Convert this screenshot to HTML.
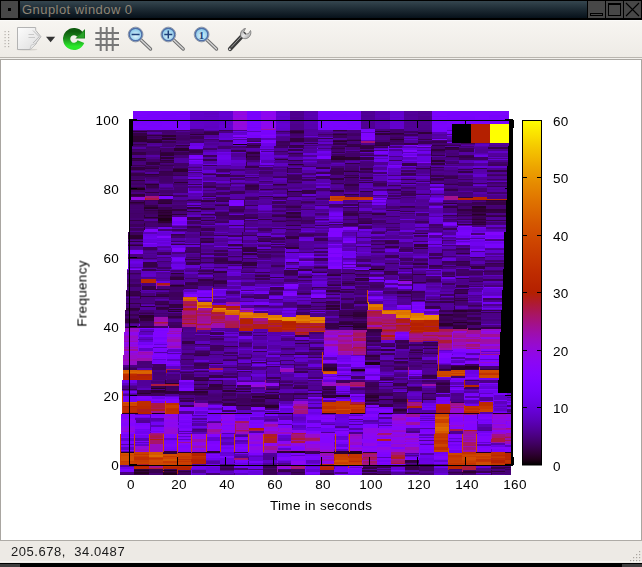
<!DOCTYPE html>
<html><head><meta charset="utf-8">
<style>
html,body{margin:0;padding:0;width:642px;height:567px;overflow:hidden;background:#000;}
*{box-sizing:border-box;}
.abs{position:absolute;}
#title{left:0;top:0;width:642px;height:20px;background:#000;}
#tgrad{left:20px;top:1px;width:567px;height:17px;background:linear-gradient(#35464f,#1f2d36 45%,#07111a);}
#ttext{left:22px;top:2px;height:17px;line-height:17px;font:13px "Liberation Sans",sans-serif;color:#8e8576;letter-spacing:0.45px;}
.wbtn{top:1px;width:17px;height:17px;background:#474747;}
#toolbar{left:0;top:20px;width:642px;height:37px;background:linear-gradient(#f7f5f1,#eeebe6);border-top:1px solid #fbfaf8;}
#canvas{left:0;top:60px;width:642px;height:481px;background:#fff;}
#status{left:0;top:541px;width:642px;height:22px;background:#edeae5;}
#stext{left:10.5px;top:543.5px;font:13px "Liberation Sans",sans-serif;color:#1a1a1a;letter-spacing:0.55px;line-height:16px;white-space:pre;will-change:transform;}
.lbl{font:13.5px "Liberation Sans",sans-serif;color:#000;letter-spacing:0.3px;white-space:pre;line-height:15px;will-change:transform;}
</style></head><body>
<div id="title" class="abs"></div>
<div class="abs wbtn" style="left:1px"><div class="abs" style="left:7px;top:7px;width:3px;height:3px;background:#000"></div></div>
<div id="tgrad" class="abs"></div>
<div id="ttext" class="abs">Gnuplot window 0</div>
<div class="abs wbtn" style="left:588px"></div>
<div class="abs wbtn" style="left:606px"></div>
<div class="abs wbtn" style="left:624px"></div>
<svg class="abs" style="left:0;top:0" width="642" height="20">
 <rect x="590.5" y="13.5" width="12" height="2" fill="none" stroke="#000" stroke-width="1"/>
 <rect x="608.5" y="3.5" width="12" height="12" fill="none" stroke="#000" stroke-width="1"/>
 <rect x="608" y="3" width="13" height="2" fill="#000"/>
 <path d="M626 3L639 16M639 3L626 16" stroke="#000" stroke-width="1.1"/>
</svg>
<div id="toolbar" class="abs"></div>
<svg class="abs" style="left:0;top:20px" width="642" height="40">
 <g fill="#b5b1ab">
  <rect x="4.5" y="11" width="1.2" height="1.2"/><rect x="8" y="11" width="1.2" height="1.2"/>
  <rect x="4.5" y="14" width="1.2" height="1.2"/><rect x="8" y="14" width="1.2" height="1.2"/>
  <rect x="4.5" y="17" width="1.2" height="1.2"/><rect x="8" y="17" width="1.2" height="1.2"/>
  <rect x="4.5" y="20" width="1.2" height="1.2"/><rect x="8" y="20" width="1.2" height="1.2"/>
  <rect x="4.5" y="23" width="1.2" height="1.2"/><rect x="8" y="23" width="1.2" height="1.2"/>
  <rect x="4.5" y="26" width="1.2" height="1.2"/><rect x="8" y="26" width="1.2" height="1.2"/>
 </g>
 <defs>
  <linearGradient id="doc" x1="0" y1="0" x2="1" y2="1"><stop offset="0" stop-color="#fdfdfd"/><stop offset="1" stop-color="#dcdcdc"/></linearGradient>
  <radialGradient id="grn" cx="0.5" cy="0.85" r="0.8"><stop offset="0" stop-color="#3cf03c"/><stop offset="0.6" stop-color="#1c9a1c"/><stop offset="1" stop-color="#0d5a0d"/></radialGradient>
  <radialGradient id="lens" cx="0.5" cy="0.6" r="0.6"><stop offset="0" stop-color="#dff4fb"/><stop offset="1" stop-color="#7fc3e6"/></radialGradient>
  <linearGradient id="hdl" x1="0" y1="0" x2="1" y2="1"><stop offset="0" stop-color="#8a8a8a"/><stop offset="0.5" stop-color="#e8e8e8"/><stop offset="1" stop-color="#8f8f8f"/></linearGradient>
 </defs>
 <!-- document icon -->
 <ellipse cx="27" cy="29.6" rx="10.5" ry="1" fill="#cfccc6" opacity="0.8"/>
 <path d="M17.5 7.5h18.2v2.8l5.2 6.4l-4.6 6.2v0.8l-6.3 5.8h-12.5z" fill="url(#doc)" stroke="#b3b3b3" stroke-width="1"/>
 <path d="M30 29l1.2-3.8l5.2-2" fill="#eee" stroke="#c0c0c0" stroke-width="0.8"/>
 <path d="M28.5 14.5h5.5M28.5 17.5h6.5" stroke="#c9c9c9" stroke-width="1"/>
 <path d="M33 10.5l6.2 6.2l-6.2 6.3" fill="none" stroke="#bdbdbd" stroke-width="1"/>
 <path d="M46 16.8h9.2l-4.6 5.4z" fill="#333"/>
 <!-- refresh -->
 <defs>
  <linearGradient id="grn2" x1="0" y1="0" x2="0" y2="1"><stop offset="0" stop-color="#0f5c0f"/><stop offset="0.45" stop-color="#1d8a1d"/><stop offset="1" stop-color="#2ae82a"/></linearGradient>
 </defs>
 <path d="M80.1 14.7A7.4 7.4 0 1 0 80.9 21.7" fill="none" stroke="url(#grn2)" stroke-width="7.2"/>
 <path d="M75.4 18.5L85 8.9V18.5z" fill="#1b7d1b"/>
 <path d="M77.4 17.7L84.2 10.9V17.7z" fill="#28a428"/>
 <!-- grid -->
 <g stroke="#777" stroke-width="2">
  <path d="M100.7 7v24M106.7 7v24M112.7 7v24M95.3 12.9h23.7M95.3 18.9h23.7M95.3 24.9h23.7"/>
 </g>
 <!-- magnifiers -->
 <g>
  <path d="M140.5 19.5l10 9.5" stroke="#6f6f6f" stroke-width="3.4" stroke-linecap="round"/>
  <path d="M140.5 19.5l10 9.5" stroke="#d6d6d6" stroke-width="1.4" stroke-linecap="round"/>
  <circle cx="135.6" cy="14.5" r="7.4" fill="none" stroke="#9aa0a8" stroke-width="1"/>
  <circle cx="135.6" cy="14.5" r="6.3" fill="url(#lens)" stroke="#4f6fa8" stroke-width="1.5"/>
  <path d="M131.6 14.5h8" stroke="#1d3f7a" stroke-width="1.5"/>
 </g>
 <g>
  <path d="M173.2 19.5l10 9.5" stroke="#6f6f6f" stroke-width="3.4" stroke-linecap="round"/>
  <path d="M173.2 19.5l10 9.5" stroke="#d6d6d6" stroke-width="1.4" stroke-linecap="round"/>
  <circle cx="168.3" cy="14.5" r="7.4" fill="none" stroke="#9aa0a8" stroke-width="1"/>
  <circle cx="168.3" cy="14.5" r="6.3" fill="url(#lens)" stroke="#4f6fa8" stroke-width="1.5"/>
  <path d="M164.3 14.5h8M168.3 10.5v8" stroke="#1d3f7a" stroke-width="1.5"/>
 </g>
 <g>
  <path d="M206.5 19.5l10 9.5" stroke="#6f6f6f" stroke-width="3.4" stroke-linecap="round"/>
  <path d="M206.5 19.5l10 9.5" stroke="#d6d6d6" stroke-width="1.4" stroke-linecap="round"/>
  <circle cx="201.6" cy="14.5" r="7.4" fill="none" stroke="#9aa0a8" stroke-width="1"/>
  <circle cx="201.6" cy="14.5" r="6.3" fill="url(#lens)" stroke="#4f6fa8" stroke-width="1.5"/>
  <text x="201.6" y="18.6" text-anchor="middle" font-family="Liberation Serif" font-size="11" font-weight="bold" fill="#1d3f7a">1</text>
 </g>
 <!-- wrench -->
 <path d="M230 29l14-15" stroke="#3a3a3a" stroke-width="4.2" stroke-linecap="round"/>
 <path d="M231 27.5l12-13" stroke="#9a9a9a" stroke-width="1" />
 <circle cx="229.8" cy="29.2" r="1" fill="#ddd"/>
 <path d="M241 16.5c-1.5-3 0.5-7 4-8l0.5 0l-2 3.5l1.5 2.2l3.5-0.5l2-3.2c1.2 3-0.5 7-4 8c-1.5 0.4-3 0-4-0.5z" fill="url(#hdl)" stroke="#666" stroke-width="0.7"/>
 <!-- toolbar bottom lines -->
 <rect x="0" y="37" width="642" height="1" fill="#b9b5af"/>
 <rect x="0" y="38" width="642" height="1" fill="#f2f0ec"/>
 <rect x="0" y="39" width="642" height="1" fill="#aaa7a2"/>
</svg>
<div id="canvas" class="abs"></div>
<svg class="abs" style="left:0;top:0" width="642" height="567">
 <rect x="0" y="60" width="1" height="481" fill="#a9a6a1"/>
 <rect x="641" y="60" width="1" height="481" fill="#a9a6a1"/>
 <rect x="0" y="540" width="642" height="1" fill="#aeaba6"/>
</svg>
<svg class="abs" style="left:0;top:0" width="642" height="567" shape-rendering="crispEdges">
<path fill="#7b03fd" d="M133 111h14.25v1h-14.25zM133 126h14.25v2h-14.25zM161.5 111h14.25v2h-14.25zM161.5 124h14.25v2h-14.25zM175.75 129h14.25v1h-14.25zM247 111h14.25v1h-14.25zM247 118h14.25v2h-14.25zM247 126h14.25v1h-14.25zM247 132h14.25v3h-14.25zM261.25 136h14.25v2h-14.25zM332.5 119h14.25v1h-14.25zM346.75 111h14.25v2h-14.25zM346.75 129h14.25v1h-14.25zM432.25 113h14.25v3h-14.25zM432.25 117h14.25v1h-14.25zM432.25 125h14.25v3h-14.25zM446.5 121h14.25v3h-14.25zM446.5 124h14.25v2h-14.25zM475 117h14.25v2h-14.25zM489.25 112h19.75v2h-19.75zM489.25 114h19.75v1h-19.75zM388.2 165h14.25v1h-14.25zM159.1 196h14.25v2h-14.25zM371.95 201h14.25v1h-14.25zM322.5 355h14.25v2h-14.25zM322.5 378h14.25v1h-14.25zM365.25 372h14.25v2h-14.25zM207.8 410h14.25v1h-14.25zM149.5 415h14.25v1h-14.25zM249.25 422h14.25v2h-14.25zM477.25 414h14.25v3h-14.25zM120 441h14.25v3h-14.25zM219.75 446h14.25v1h-14.25zM234 444h14.25v3h-14.25zM419.25 436h14.25v1h-14.25zM447.75 434h14.25v1h-14.25zM447.75 442h14.25v1h-14.25z"/>
<path fill="#7a03fc" d="M133 112h14.25v2h-14.25zM161.5 123h14.25v1h-14.25zM161.5 126h14.25v3h-14.25zM247 112h14.25v1h-14.25zM247 120h14.25v1h-14.25zM261.25 134h14.25v1h-14.25zM432.25 118h14.25v3h-14.25zM432.25 124h14.25v1h-14.25zM460.75 123h14.25v2h-14.25zM475 112h14.25v2h-14.25zM489.25 142h19.75v1h-19.75zM151.5 357h14.25v1h-14.25zM165.75 361h14.25v2h-14.25zM465 355h14.25v1h-14.25z"/>
<path fill="#7a03fd" d="M133 114h14.25v1h-14.25zM133 116h14.25v1h-14.25zM147.25 112h14.25v1h-14.25zM147.25 127h14.25v2h-14.25zM147.25 129h14.25v1h-14.25zM175.75 111h14.25v1h-14.25zM175.75 115h14.25v1h-14.25zM175.75 128h14.25v1h-14.25zM232.75 143h14.25v1h-14.25zM247 122h14.25v3h-14.25zM247 128h14.25v3h-14.25zM318.25 121h14.25v1h-14.25zM332.5 111h14.25v3h-14.25zM346.75 113h14.25v1h-14.25zM346.75 119h14.25v1h-14.25zM432.25 111h14.25v2h-14.25zM432.25 128h14.25v1h-14.25zM432.25 129h14.25v2h-14.25zM446.5 111h14.25v2h-14.25zM446.5 126h14.25v1h-14.25zM460.75 114h14.25v2h-14.25zM460.75 121h14.25v1h-14.25zM475 114h14.25v3h-14.25zM475 123h14.25v1h-14.25zM475 127h14.25v1h-14.25zM489.25 126h19.75v2h-19.75zM489.25 128h19.75v1h-19.75zM489.25 129h19.75v2h-19.75zM188.7 155h14.25v2h-14.25zM229.45 200h14.25v3h-14.25zM229.45 205h14.25v1h-14.25zM285.15 259h14.25v3h-14.25zM283.95 286h14.25v2h-14.25zM165.75 355h14.25v2h-14.25zM450.75 359h14.25v1h-14.25zM350.3 395h14.25v1h-14.25zM492.8 393h14.25v2h-14.25zM507.05 401h3.95v1h-3.95zM263.5 414h14.25v2h-14.25zM306.25 416h14.25v1h-14.25zM320.5 418h14.25v1h-14.25zM420.25 425h14.25v1h-14.25zM477.25 423h14.25v1h-14.25zM120 450h14.25v1h-14.25zM205.5 457h14.25v1h-14.25zM234 437h14.25v2h-14.25zM234 460h14.25v2h-14.25zM248.25 461h14.25v2h-14.25zM348 469h14.25v3h-14.25zM419.25 449h14.25v1h-14.25zM433.5 462h14.25v1h-14.25z"/>
<path fill="#7803fb" d="M133 115h14.25v1h-14.25zM147.25 115h14.25v2h-14.25zM147.25 117h14.25v1h-14.25zM147.25 125h14.25v1h-14.25zM161.5 114h14.25v1h-14.25zM161.5 116h14.25v2h-14.25zM175.75 116h14.25v3h-14.25zM175.75 119h14.25v3h-14.25zM175.75 122h14.25v1h-14.25zM175.75 123h14.25v2h-14.25zM247 121h14.25v1h-14.25zM318.25 113h14.25v2h-14.25zM318.25 115h14.25v1h-14.25zM318.25 118h14.25v1h-14.25zM318.25 119h14.25v2h-14.25zM318.25 127h14.25v2h-14.25zM332.5 117h14.25v1h-14.25zM332.5 120h14.25v3h-14.25zM332.5 128h14.25v2h-14.25zM346.75 114h14.25v1h-14.25zM346.75 115h14.25v1h-14.25zM346.75 125h14.25v2h-14.25zM361 129h14.25v2h-14.25zM432.25 121h14.25v1h-14.25zM432.25 122h14.25v2h-14.25zM446.5 113h14.25v1h-14.25zM446.5 115h14.25v1h-14.25zM446.5 118h14.25v1h-14.25zM446.5 119h14.25v2h-14.25zM446.5 135h14.25v1h-14.25zM460.75 116h14.25v1h-14.25zM460.75 120h14.25v1h-14.25zM460.75 125h14.25v1h-14.25zM475 111h14.25v1h-14.25zM475 124h14.25v3h-14.25zM475 128h14.25v1h-14.25zM475 129h14.25v2h-14.25zM489.25 118h19.75v1h-19.75zM373.95 151h14.25v3h-14.25zM171.15 251h14.25v1h-14.25zM171.15 258h14.25v3h-14.25zM484.65 241h19.75v1h-19.75zM484.65 245h19.75v2h-19.75zM483.45 287h19.75v1h-19.75zM197.25 295h14.25v2h-14.25zM197.25 298h14.25v2h-14.25zM311.25 294h14.25v1h-14.25zM152.5 337h14.25v2h-14.25zM152.5 353h14.25v1h-14.25zM394.75 336h14.25v2h-14.25zM435.8 397h14.25v1h-14.25zM507.05 403h3.95v2h-3.95zM178 420h14.25v2h-14.25zM192.25 414h14.25v1h-14.25zM235 420h14.25v1h-14.25zM363.25 417h14.25v3h-14.25zM420.25 423h14.25v2h-14.25zM120 470h14.25v2h-14.25zM333.75 442h14.25v2h-14.25zM376.5 463h14.25v2h-14.25zM476.25 435h14.25v1h-14.25z"/>
<path fill="#7703fa" d="M133 117h14.25v1h-14.25zM133 120h14.25v1h-14.25zM133 121h14.25v2h-14.25zM147.25 120h14.25v3h-14.25zM161.5 113h14.25v1h-14.25zM161.5 115h14.25v1h-14.25zM161.5 118h14.25v1h-14.25zM175.75 114h14.25v1h-14.25zM247 127h14.25v1h-14.25zM261.25 133h14.25v1h-14.25zM318.25 116h14.25v2h-14.25zM332.5 114h14.25v2h-14.25zM332.5 116h14.25v1h-14.25zM332.5 126h14.25v1h-14.25zM346.75 122h14.25v3h-14.25zM346.75 127h14.25v2h-14.25zM432.25 116h14.25v1h-14.25zM446.5 127h14.25v3h-14.25zM460.75 117h14.25v1h-14.25zM460.75 118h14.25v2h-14.25zM460.75 122h14.25v1h-14.25zM460.75 138h14.25v2h-14.25zM475 120h14.25v1h-14.25zM475 121h14.25v2h-14.25zM489.25 115h19.75v3h-19.75zM489.25 122h19.75v3h-19.75zM489.25 125h19.75v1h-19.75zM188.7 158h14.25v1h-14.25zM327.9 264h14.25v2h-14.25zM470.4 239h14.25v1h-14.25zM397.95 286h14.25v3h-14.25zM282.75 292h14.25v1h-14.25zM394.75 332h14.25v2h-14.25zM165.75 357h14.25v2h-14.25zM122.3 399h14.25v2h-14.25zM165.05 397h14.25v1h-14.25zM165.05 398h14.25v1h-14.25zM193.55 407h14.25v2h-14.25zM193.55 409h14.25v1h-14.25zM478.55 396h14.25v1h-14.25zM349 422h14.25v2h-14.25zM205.5 455h14.25v2h-14.25zM234 462h14.25v1h-14.25zM305.25 464h14.25v1h-14.25zM433.5 463h14.25v1h-14.25zM447.75 439h14.25v2h-14.25z"/>
<path fill="#7903fc" d="M133 118h14.25v2h-14.25zM133 125h14.25v1h-14.25zM133 128h14.25v2h-14.25zM147.25 111h14.25v1h-14.25zM147.25 113h14.25v1h-14.25zM147.25 118h14.25v2h-14.25zM147.25 123h14.25v2h-14.25zM147.25 126h14.25v1h-14.25zM161.5 119h14.25v2h-14.25zM161.5 121h14.25v2h-14.25zM161.5 129h14.25v1h-14.25zM175.75 112h14.25v2h-14.25zM175.75 125h14.25v3h-14.25zM247 113h14.25v3h-14.25zM247 116h14.25v2h-14.25zM247 125h14.25v1h-14.25zM261.25 130h14.25v3h-14.25zM318.25 111h14.25v2h-14.25zM318.25 124h14.25v3h-14.25zM318.25 129h14.25v1h-14.25zM332.5 118h14.25v1h-14.25zM332.5 123h14.25v3h-14.25zM332.5 127h14.25v1h-14.25zM346.75 117h14.25v2h-14.25zM346.75 120h14.25v2h-14.25zM432.25 131h14.25v1h-14.25zM446.5 114h14.25v1h-14.25zM446.5 116h14.25v1h-14.25zM446.5 117h14.25v1h-14.25zM446.5 133h14.25v1h-14.25zM460.75 111h14.25v1h-14.25zM460.75 112h14.25v2h-14.25zM460.75 126h14.25v1h-14.25zM460.75 127h14.25v3h-14.25zM460.75 130h14.25v3h-14.25zM475 119h14.25v1h-14.25zM489.25 119h19.75v3h-19.75zM402.45 153h14.25v1h-14.25zM159.1 198h14.25v1h-14.25zM128.4 250h14.25v2h-14.25zM456.15 232h14.25v3h-14.25zM456.15 240h14.25v1h-14.25zM470.4 249h14.25v2h-14.25zM484.65 244h19.75v1h-19.75zM383.7 280h14.25v3h-14.25zM240 291h14.25v1h-14.25zM282.75 291h14.25v1h-14.25zM411 302h14.25v2h-14.25zM411 304h14.25v1h-14.25zM411 306h14.25v3h-14.25zM152.5 342h14.25v2h-14.25zM336.75 378h14.25v1h-14.25zM351 357h14.25v1h-14.25zM408 372h14.25v2h-14.25zM436.5 358h14.25v2h-14.25zM122.3 396h14.25v3h-14.25zM150.8 402h14.25v1h-14.25zM207.8 405h14.25v2h-14.25zM222.05 407h14.25v3h-14.25zM464.3 395h14.25v1h-14.25zM478.55 394h14.25v2h-14.25zM219.75 449h14.25v3h-14.25zM234 453h14.25v1h-14.25zM348 465h14.25v1h-14.25zM405 457h14.25v2h-14.25zM433.5 454h14.25v2h-14.25zM476.25 434h14.25v1h-14.25zM490.5 449h14.25v3h-14.25z"/>
<path fill="#7803fa" d="M133 123h14.25v2h-14.25zM147.25 114h14.25v1h-14.25zM346.75 116h14.25v1h-14.25zM489.25 111h19.75v1h-19.75zM451.75 354h14.25v1h-14.25zM264.8 410h14.25v1h-14.25zM206.5 419h14.25v2h-14.25zM120 445h14.25v2h-14.25zM162.75 447h14.25v2h-14.25zM433.5 459h14.25v1h-14.25z"/>
<path fill="#4d008a" d="M133 130h14.25v1h-14.25zM289.75 126h14.25v1h-14.25zM418 113h14.25v1h-14.25zM418 116h14.25v3h-14.25zM446.5 140h14.25v2h-14.25zM345.45 160h14.25v1h-14.25zM244.6 168h14.25v1h-14.25zM244.6 171h14.25v2h-14.25zM486.85 195h19.75v1h-19.75zM272.2 217h14.25v3h-14.25zM142.65 253h14.25v1h-14.25zM185.4 254h14.25v3h-14.25zM270.9 250h14.25v1h-14.25zM370.65 242h14.25v2h-14.25zM470.4 259h14.25v1h-14.25zM184.2 270h14.25v2h-14.25zM198.45 269h14.25v1h-14.25zM198.45 272h14.25v1h-14.25zM255.45 281h14.25v3h-14.25zM412.2 272h14.25v2h-14.25zM454.95 280h14.25v2h-14.25zM197.25 297h14.25v1h-14.25zM195.25 337h14.25v2h-14.25z"/>
<path fill="#2e0035" d="M133 131h14.25v1h-14.25zM147.25 141h14.25v2h-14.25zM338.75 315h14.25v1h-14.25zM321.8 389h14.25v1h-14.25z"/>
<path fill="#450072" d="M133 132h14.25v1h-14.25zM432.25 143h14.25v2h-14.25zM446.5 144h14.25v1h-14.25zM373.95 146h14.25v1h-14.25zM130.6 185h14.25v1h-14.25zM159.1 170h14.25v1h-14.25zM173.35 166h14.25v2h-14.25zM287.35 169h14.25v2h-14.25zM444.1 188h14.25v1h-14.25zM472.6 188h14.25v3h-14.25zM129.7 209h14.25v1h-14.25zM143.95 201h14.25v1h-14.25zM143.95 202h14.25v1h-14.25zM457.45 216h14.25v1h-14.25zM471.7 205h14.25v1h-14.25zM485.95 206h19.75v3h-19.75zM485.95 222h19.75v2h-19.75zM299.4 236h14.25v1h-14.25zM313.65 255h14.25v1h-14.25zM169.95 274h14.25v2h-14.25zM169.95 284h14.25v1h-14.25zM168.75 290h14.25v2h-14.25zM225.75 291h14.25v1h-14.25zM139.25 314h14.25v1h-14.25zM353 310h1v8h-1zM353 318h1v8h-1zM353 326h1v4h-1zM438.5 310h1v10h-1zM438.5 320h1v4h-1zM438.5 324h1v8h-1zM467 310h1v8h-1zM467 318h1v10h-1zM151.5 372h14.25v3h-14.25zM479.25 366h19.75v3h-19.75zM293.3 382h14.25v1h-14.25zM321.8 386h1v6h-1zM321.8 392h1v1h-1zM435.8 380h1v6h-1zM435.8 386h1v7h-1zM236.3 407h14.25v2h-14.25zM393.05 404h14.25v3h-14.25zM205.5 473h14.25v2h-14.25zM419.25 473h14.25v2h-14.25z"/>
<path fill="#350045" d="M133 133h14.25v3h-14.25zM375.25 142h14.25v3h-14.25zM359.7 146h14.25v3h-14.25zM430.95 164h14.25v1h-14.25zM129.7 220h14.25v1h-14.25zM199.65 238h14.25v1h-14.25zM256.65 241h14.25v1h-14.25zM470.4 267h14.25v2h-14.25zM141.45 286h14.25v3h-14.25zM465 369h14.25v1h-14.25zM362.25 473h14.25v2h-14.25z"/>
<path fill="#2e0033" d="M133 136h14.25v3h-14.25zM173.35 182h14.25v1h-14.25zM158.2 203h14.25v1h-14.25zM128.4 235h14.25v1h-14.25zM169.95 273h14.25v1h-14.25zM362.25 452h14.25v1h-14.25z"/>
<path fill="#2d0032" d="M133 139h14.25v3h-14.25zM161.5 135h14.25v2h-14.25zM143.95 217h14.25v1h-14.25zM364.55 395h14.25v2h-14.25zM191.25 452h14.25v1h-14.25zM462 471h14.25v2h-14.25z"/>
<path fill="#450071" d="M133 142h14.25v1h-14.25zM231.45 146h14.25v2h-14.25zM230.35 169h14.25v2h-14.25zM287.35 192h14.25v3h-14.25zM344.35 190h14.25v2h-14.25zM129.7 221h14.25v3h-14.25zM143.95 223h14.25v3h-14.25zM286.45 209h14.25v2h-14.25zM286.45 221h14.25v1h-14.25zM428.95 204h14.25v1h-14.25zM457.45 214h14.25v1h-14.25zM199.65 232h14.25v2h-14.25zM426.45 276h14.25v3h-14.25zM453.75 303h14.25v2h-14.25zM453.75 309h14.25v1h-14.25zM167.75 310h14.25v1h-14.25zM222.05 402h14.25v1h-14.25zM393.05 393h14.25v3h-14.25zM262.5 468h14.25v1h-14.25zM319.5 471h14.25v2h-14.25zM376.5 471h14.25v2h-14.25z"/>
<path fill="#48007b" d="M133 143h14.25v1h-14.25zM147.25 138h14.25v1h-14.25zM190 129h14.25v3h-14.25zM346.75 131h14.25v1h-14.25zM316.95 148h14.25v1h-14.25zM430.95 157h14.25v3h-14.25zM159.1 183h14.25v1h-14.25zM201.85 190h14.25v1h-14.25zM244.6 169h14.25v1h-14.25zM344.35 172h14.25v3h-14.25zM372.85 189h14.25v2h-14.25zM372.85 195h14.25v1h-14.25zM458.35 188h14.25v2h-14.25zM428.95 203h14.25v1h-14.25zM428.95 231h14.25v1h-14.25zM285.15 235h14.25v1h-14.25zM127.2 287h14.25v3h-14.25zM355.2 288h14.25v1h-14.25zM140.25 293h14.25v3h-14.25zM240 290h14.25v1h-14.25zM153.5 316h14.25v1h-14.25zM324.5 329h14.25v1h-14.25zM266.5 354h14.25v1h-14.25zM180 366h14.25v2h-14.25zM265.5 361h14.25v1h-14.25zM422.25 360h14.25v2h-14.25zM378.8 380h14.25v1h-14.25zM248.25 469h14.25v1h-14.25z"/>
<path fill="#38004d" d="M133 144h14.25v1h-14.25zM361 145h14.25v1h-14.25zM389.5 134h14.25v1h-14.25zM288.45 146h14.25v2h-14.25zM331.2 152h14.25v1h-14.25zM144.85 185h14.25v3h-14.25zM244.6 187h14.25v3h-14.25zM386.2 210h14.25v1h-14.25zM471.7 221h14.25v1h-14.25zM185.4 262h14.25v3h-14.25zM427.65 265h14.25v2h-14.25zM154.5 309h14.25v1h-14.25zM311.25 302h14.25v1h-14.25zM324.5 328h14.25v1h-14.25zM353 321h14.25v1h-14.25zM438.5 311h14.25v1h-14.25zM467 317h14.25v3h-14.25zM280.75 354h14.25v1h-14.25zM394.75 345h14.25v1h-14.25zM322.5 364h14.25v3h-14.25zM422.25 377h14.25v2h-14.25zM293.3 393h14.25v2h-14.25zM364.55 398h14.25v2h-14.25zM393.05 411h14.25v1h-14.25zM319.5 473h14.25v2h-14.25z"/>
<path fill="#410065" d="M133 145h14.25v1h-14.25zM345.45 151h14.25v1h-14.25zM445.2 163h14.25v1h-14.25zM144.85 188h14.25v1h-14.25zM159.1 168h14.25v1h-14.25zM273.1 185h14.25v1h-14.25zM344.35 189h14.25v1h-14.25zM129.7 213h14.25v1h-14.25zM186.7 205h14.25v1h-14.25zM229.45 206h14.25v3h-14.25zM357.7 202h14.25v1h-14.25zM156.9 267h14.25v2h-14.25zM413.4 259h14.25v2h-14.25zM369.45 275h14.25v1h-14.25zM280.75 348h14.25v1h-14.25zM366.25 344h14.25v2h-14.25zM362.25 465h14.25v1h-14.25zM447.75 473h14.25v1h-14.25z"/>
<path fill="#460075" d="M147.25 130h14.25v1h-14.25zM190 139h14.25v2h-14.25zM304 145h14.25v1h-14.25zM375.25 141h14.25v1h-14.25zM145.95 165h14.25v1h-14.25zM445.2 153h14.25v1h-14.25zM130.6 170h14.25v1h-14.25zM130.6 172h14.25v1h-14.25zM159.1 188h14.25v1h-14.25zM287.35 174h14.25v1h-14.25zM330.1 166h14.25v2h-14.25zM372.85 181h14.25v2h-14.25zM172.45 208h14.25v1h-14.25zM329.2 222h14.25v1h-14.25zM457.45 206h14.25v3h-14.25zM356.4 264h14.25v1h-14.25zM326.7 272h14.25v1h-14.25zM369.45 274h14.25v1h-14.25zM369.45 289h14.25v1h-14.25zM469.2 278h14.25v3h-14.25zM126 296h14.25v1h-14.25zM238 344h14.25v3h-14.25zM280.75 349h14.25v1h-14.25zM309.25 343h14.25v1h-14.25zM237 366h14.25v3h-14.25zM150.8 381h14.25v1h-14.25zM207.8 394h14.25v1h-14.25zM234 468h14.25v2h-14.25zM504.75 470h6.25v3h-6.25z"/>
<path fill="#43006b" d="M147.25 131h14.25v1h-14.25zM190 141h14.25v2h-14.25zM389.5 135h14.25v1h-14.25zM389.5 142h14.25v1h-14.25zM487.95 162h19.75v2h-19.75zM230.35 178h14.25v2h-14.25zM344.35 180h14.25v1h-14.25zM444.1 183h14.25v1h-14.25zM143.95 215h14.25v2h-14.25zM172.45 200h14.25v2h-14.25zM272.2 210h14.25v2h-14.25zM414.7 213h14.25v2h-14.25zM414.7 215h14.25v1h-14.25zM142.65 258h14.25v1h-14.25zM171.15 236h14.25v2h-14.25zM185.4 257h14.25v1h-14.25zM399.15 247h14.25v2h-14.25zM283.95 279h14.25v3h-14.25zM325.5 298h14.25v1h-14.25zM354 298h14.25v3h-14.25zM382.5 291h14.25v3h-14.25zM411 293h14.25v3h-14.25zM209.5 354h14.25v1h-14.25zM408 357h14.25v1h-14.25zM436.5 368h14.25v1h-14.25zM350.3 380h14.25v2h-14.25zM350.3 388h14.25v2h-14.25zM435.8 380h14.25v2h-14.25zM236.3 409h14.25v1h-14.25zM264.8 408h14.25v1h-14.25zM362.25 466h14.25v1h-14.25zM490.5 473h14.25v1h-14.25z"/>
<path fill="#5600a7" d="M147.25 132h14.25v2h-14.25zM460.75 145h14.25v1h-14.25zM202.95 146h14.25v2h-14.25zM331.2 164h14.25v2h-14.25zM187.6 188h14.25v3h-14.25zM201.85 167h14.25v3h-14.25zM230.35 184h14.25v1h-14.25zM244.6 193h14.25v1h-14.25zM315.85 185h14.25v1h-14.25zM358.6 189h14.25v2h-14.25zM387.1 194h14.25v1h-14.25zM300.7 205h14.25v1h-14.25zM213.9 256h14.25v1h-14.25zM342.15 258h14.25v2h-14.25zM325.5 300h14.25v1h-14.25zM238 341h14.25v1h-14.25zM252.25 343h14.25v2h-14.25zM280.75 351h14.25v3h-14.25zM265.5 359h14.25v2h-14.25zM279.05 383h14.25v1h-14.25zM407.3 410h14.25v3h-14.25zM464.3 396h14.25v2h-14.25zM178 431h14.25v1h-14.25zM192.25 423h14.25v3h-14.25zM320.5 424h14.25v1h-14.25zM363.25 420h14.25v2h-14.25zM419.25 453h14.25v2h-14.25z"/>
<path fill="#48007a" d="M147.25 134h14.25v1h-14.25zM359.7 162h14.25v1h-14.25zM330.1 182h14.25v1h-14.25zM158.2 204h14.25v3h-14.25zM443.2 205h14.25v1h-14.25zM457.45 221h14.25v2h-14.25zM441.9 245h14.25v1h-14.25zM127.2 282h14.25v2h-14.25zM241.2 283h14.25v3h-14.25zM483.45 285h19.75v2h-19.75zM126 290h14.25v1h-14.25zM325.5 292h14.25v1h-14.25zM324.5 318h14.25v2h-14.25zM252.25 332h14.25v1h-14.25zM423.25 351h14.25v2h-14.25zM137.25 364h14.25v1h-14.25zM165.75 374h14.25v2h-14.25z"/>
<path fill="#330041" d="M147.25 135h14.25v1h-14.25zM145.95 162h14.25v3h-14.25zM160.2 152h14.25v1h-14.25zM456.15 253h14.25v1h-14.25z"/>
<path fill="#450070" d="M147.25 136h14.25v1h-14.25zM161.5 133h14.25v2h-14.25zM145.95 148h14.25v3h-14.25zM174.45 146h14.25v2h-14.25zM217.2 146h14.25v3h-14.25zM288.45 154h14.25v2h-14.25zM331.2 150h14.25v2h-14.25zM130.6 179h14.25v1h-14.25zM173.35 187h14.25v3h-14.25zM201.85 185h14.25v1h-14.25zM230.35 199h14.25v1h-14.25zM344.35 176h14.25v1h-14.25zM314.95 213h14.25v2h-14.25zM386.2 206h14.25v3h-14.25zM386.2 227h14.25v1h-14.25zM369.45 288h14.25v1h-14.25zM453.75 301h14.25v2h-14.25zM125 312h14.25v2h-14.25zM467 325h14.25v3h-14.25zM207.8 395h14.25v1h-14.25zM222.05 396h14.25v2h-14.25zM192.25 429h14.25v1h-14.25zM120 474h14.25v1h-14.25zM148.5 473h14.25v2h-14.25zM447.75 474h14.25v1h-14.25z"/>
<path fill="#410066" d="M147.25 137h14.25v1h-14.25zM161.5 137h14.25v1h-14.25zM346.75 139h14.25v1h-14.25zM145.95 147h14.25v1h-14.25zM145.95 151h14.25v3h-14.25zM130.6 178h14.25v1h-14.25zM401.35 192h14.25v1h-14.25zM486.85 182h19.75v1h-19.75zM158.2 224h14.25v2h-14.25zM215.2 216h14.25v3h-14.25zM243.7 214h14.25v3h-14.25zM272.2 214h14.25v1h-14.25zM300.7 201h14.25v1h-14.25zM386.2 216h14.25v1h-14.25zM185.4 247h14.25v3h-14.25zM199.65 234h14.25v2h-14.25zM355.2 289h14.25v1h-14.25zM397.95 276h14.25v3h-14.25zM252.25 335h14.25v1h-14.25zM279.75 364h14.25v1h-14.25zM193.55 395h14.25v1h-14.25zM236.3 394h14.25v3h-14.25zM250.55 398h14.25v1h-14.25zM390.75 466h14.25v1h-14.25z"/>
<path fill="#330040" d="M147.25 139h14.25v2h-14.25zM332.5 130h14.25v1h-14.25zM273.1 184h14.25v1h-14.25zM273.1 197h14.25v1h-14.25zM358.6 191h14.25v1h-14.25zM286.45 225h14.25v1h-14.25zM212.7 281h14.25v1h-14.25zM154.5 307h14.25v2h-14.25zM367.25 329h14.25v2h-14.25zM380.5 349h14.25v2h-14.25zM408 358h14.25v1h-14.25zM207.8 384h14.25v3h-14.25zM250.55 397h14.25v1h-14.25zM177 471h14.25v1h-14.25z"/>
<path fill="#500093" d="M147.25 143h14.25v2h-14.25zM318.25 132h14.25v2h-14.25zM361 112h14.25v2h-14.25zM403.75 122h14.25v2h-14.25zM403.75 126h14.25v1h-14.25zM231.45 153h14.25v2h-14.25zM231.45 155h14.25v2h-14.25zM274.2 161h14.25v1h-14.25zM302.7 147h14.25v2h-14.25zM473.7 149h14.25v2h-14.25zM487.95 160h19.75v2h-19.75zM258.85 170h14.25v1h-14.25zM401.35 172h14.25v1h-14.25zM472.6 179h14.25v1h-14.25zM486.85 168h19.75v2h-19.75zM486.85 176h19.75v1h-19.75zM371.95 212h14.25v1h-14.25zM371.95 225h14.25v3h-14.25zM414.7 200h14.25v2h-14.25zM213.9 233h14.25v1h-14.25zM228.15 251h14.25v3h-14.25zM299.4 266h14.25v3h-14.25zM241.2 269h14.25v1h-14.25zM298.2 284h14.25v3h-14.25zM369.45 279h14.25v1h-14.25zM397.95 279h14.25v1h-14.25zM412.2 271h14.25v1h-14.25zM454.95 279h14.25v1h-14.25zM396.75 302h14.25v3h-14.25zM422.25 371h14.25v1h-14.25zM421.55 388h14.25v2h-14.25zM393.05 407h14.25v1h-14.25zM477.25 430h14.25v1h-14.25zM262.5 455h14.25v3h-14.25zM262.5 458h14.25v2h-14.25z"/>
<path fill="#5400a2" d="M147.25 145h14.25v1h-14.25zM475 143h14.25v1h-14.25zM302.7 146h14.25v1h-14.25zM273.1 182h14.25v1h-14.25zM301.6 188h14.25v2h-14.25zM315.85 196h14.25v2h-14.25zM358.6 179h14.25v1h-14.25zM143.95 227h14.25v2h-14.25zM386.2 204h14.25v2h-14.25zM185.4 268h14.25v1h-14.25zM228.15 239h14.25v2h-14.25zM228.15 246h14.25v1h-14.25zM256.65 264h14.25v3h-14.25zM313.65 262h14.25v2h-14.25zM370.65 250h14.25v1h-14.25zM399.15 255h14.25v1h-14.25zM413.4 268h14.25v1h-14.25zM441.9 251h14.25v1h-14.25zM226.95 286h14.25v3h-14.25zM397.95 273h14.25v1h-14.25zM280.75 334h14.25v1h-14.25zM194.25 372h14.25v2h-14.25zM194.25 376h14.25v1h-14.25zM237 375h14.25v2h-14.25zM265.5 364h14.25v1h-14.25zM294 366h14.25v2h-14.25zM379.5 375h14.25v2h-14.25zM465 358h14.25v2h-14.25zM250.55 380h14.25v1h-14.25zM420.25 428h14.25v1h-14.25zM262.5 463h14.25v1h-14.25z"/>
<path fill="#44006d" d="M161.5 130h14.25v3h-14.25zM190 132h14.25v2h-14.25zM145.95 160h14.25v2h-14.25zM430.95 152h14.25v1h-14.25zM144.85 178h14.25v1h-14.25zM230.35 183h14.25v1h-14.25zM344.35 168h14.25v2h-14.25zM344.35 178h14.25v1h-14.25zM344.35 179h14.25v1h-14.25zM344.35 183h14.25v1h-14.25zM486.85 174h19.75v1h-19.75zM143.95 203h14.25v2h-14.25zM286.45 205h14.25v1h-14.25zM314.95 205h14.25v1h-14.25zM314.95 219h14.25v1h-14.25zM199.65 257h14.25v2h-14.25zM213.9 267h14.25v1h-14.25zM369.45 282h14.25v2h-14.25zM483.45 272h19.75v3h-19.75zM140.25 303h14.25v1h-14.25zM254.25 294h14.25v2h-14.25zM354 297h14.25v1h-14.25zM125 316h14.25v2h-14.25zM209.5 336h14.25v1h-14.25zM236.3 406h14.25v1h-14.25zM319.5 470h14.25v1h-14.25zM376.5 473h14.25v1h-14.25zM447.75 469h14.25v1h-14.25z"/>
<path fill="#2c002f" d="M161.5 138h14.25v2h-14.25zM131.7 158h14.25v1h-14.25zM167.75 311h14.25v1h-14.25zM150.8 390h14.25v2h-14.25zM250.55 396h14.25v1h-14.25z"/>
<path fill="#49007c" d="M161.5 140h14.25v1h-14.25zM175.75 141h14.25v1h-14.25zM131.7 163h14.25v2h-14.25zM288.45 165h14.25v1h-14.25zM345.45 147h14.25v3h-14.25zM430.95 162h14.25v1h-14.25zM130.6 192h14.25v2h-14.25zM144.85 179h14.25v2h-14.25zM286.45 222h14.25v3h-14.25zM471.7 225h14.25v2h-14.25zM456.15 250h14.25v3h-14.25zM141.45 283h14.25v2h-14.25zM155.7 286h14.25v3h-14.25zM126 304h14.25v2h-14.25zM140.25 297h14.25v2h-14.25zM280.75 338h14.25v3h-14.25zM366.25 342h14.25v2h-14.25zM137.25 365h14.25v1h-14.25zM490.5 472h14.25v1h-14.25z"/>
<path fill="#390050" d="M161.5 141h14.25v2h-14.25zM216.1 174h14.25v3h-14.25zM215.2 201h14.25v1h-14.25zM243.7 217h14.25v2h-14.25zM272.2 221h14.25v1h-14.25zM270.9 238h14.25v2h-14.25zM141.45 269h14.25v2h-14.25zM481.25 312h19.75v1h-19.75zM366.25 332h14.25v1h-14.25zM407.3 388h14.25v2h-14.25zM179.3 405h14.25v2h-14.25zM378.8 393h14.25v3h-14.25zM421.55 393h14.25v1h-14.25zM450.05 402h14.25v1h-14.25zM148.5 471h14.25v2h-14.25z"/>
<path fill="#460074" d="M161.5 143h14.25v2h-14.25zM345.45 152h14.25v1h-14.25zM130.6 166h14.25v1h-14.25zM144.85 193h14.25v3h-14.25zM159.1 193h14.25v2h-14.25zM201.85 193h14.25v3h-14.25zM287.35 180h14.25v2h-14.25zM344.35 166h14.25v2h-14.25zM458.35 192h14.25v2h-14.25zM158.2 229h14.25v2h-14.25zM172.45 212h14.25v2h-14.25zM286.45 218h14.25v2h-14.25zM299.4 252h14.25v1h-14.25zM356.4 246h14.25v1h-14.25zM127.2 274h14.25v1h-14.25zM326.7 281h14.25v1h-14.25zM324.5 311h14.25v3h-14.25zM467 312h14.25v1h-14.25zM151.5 379h14.25v1h-14.25zM294 364h14.25v2h-14.25zM294 368h14.25v2h-14.25zM150.8 382h14.25v1h-14.25zM321.8 390h14.25v1h-14.25zM207.8 397h14.25v2h-14.25zM421.55 397h14.25v2h-14.25zM490.5 470h14.25v1h-14.25z"/>
<path fill="#440070" d="M161.5 145h14.25v1h-14.25zM354 306h14.25v1h-14.25z"/>
<path fill="#43006a" d="M175.75 130h14.25v1h-14.25zM432.25 140h14.25v1h-14.25zM160.2 150h14.25v2h-14.25zM188.7 153h14.25v2h-14.25zM202.95 148h14.25v2h-14.25zM301.6 166h14.25v1h-14.25zM301.6 196h14.25v1h-14.25zM315.85 188h14.25v3h-14.25zM129.7 214h14.25v3h-14.25zM129.7 217h14.25v1h-14.25zM300.7 227h14.25v1h-14.25zM343.45 219h14.25v1h-14.25zM270.9 237h14.25v1h-14.25zM355.2 275h14.25v2h-14.25zM295 352h14.25v2h-14.25zM222.05 388h14.25v1h-14.25zM364.55 390h14.25v2h-14.25zM236.3 397h14.25v1h-14.25zM405 464h14.25v1h-14.25z"/>
<path fill="#510096" d="M175.75 131h14.25v1h-14.25zM175.75 144h14.25v1h-14.25zM403.75 125h14.25v1h-14.25zM403.75 127h14.25v1h-14.25zM174.45 146h1v10h-1zM174.45 156h1v8h-1zM174.45 164h1v2h-1zM302.7 164h14.25v2h-14.25zM345.45 146h1v4h-1zM345.45 150h1v6h-1zM345.45 156h1v8h-1zM345.45 164h1v2h-1zM445.2 164h14.25v1h-14.25zM473.7 151h14.25v2h-14.25zM144.85 181h14.25v2h-14.25zM144.85 166h1v6h-1zM144.85 172h1v8h-1zM144.85 180h1v10h-1zM144.85 190h1v8h-1zM159.1 166h1v8h-1zM159.1 174h1v6h-1zM159.1 180h1v6h-1zM159.1 186h1v10h-1zM173.35 166h1v6h-1zM173.35 172h1v8h-1zM173.35 180h1v6h-1zM173.35 186h1v4h-1zM173.35 190h1v6h-1zM173.35 196h1v4h-1zM273.1 173h14.25v3h-14.25zM273.1 187h14.25v1h-14.25zM344.35 166h1v4h-1zM344.35 170h1v6h-1zM344.35 176h1v6h-1zM344.35 182h1v10h-1zM344.35 192h1v4h-1zM415.6 189h14.25v1h-14.25zM486.85 177h19.75v2h-19.75zM186.7 224h14.25v1h-14.25zM343.45 218h14.25v1h-14.25zM371.95 208h14.25v2h-14.25zM400.45 214h14.25v1h-14.25zM485.95 221h19.75v1h-19.75zM156.9 264h14.25v3h-14.25zM199.65 267h14.25v1h-14.25zM213.9 247h14.25v3h-14.25zM242.4 244h14.25v3h-14.25zM270.9 258h14.25v1h-14.25zM313.65 237h14.25v1h-14.25zM313.65 241h14.25v3h-14.25zM456.15 257h14.25v1h-14.25zM241.2 279h14.25v1h-14.25zM312.45 275h14.25v1h-14.25zM340.95 276h14.25v1h-14.25zM355.2 269h1v4h-1zM355.2 273h1v10h-1zM355.2 283h1v7h-1zM383.7 277h14.25v1h-14.25zM354 290h1v8h-1zM354 298h1v6h-1zM354 304h1v6h-1zM439.5 307h14.25v3h-14.25zM309.25 336h14.25v1h-14.25zM194.25 370h14.25v1h-14.25zM393.75 355h14.25v3h-14.25zM422.25 372h14.25v2h-14.25zM222.05 380h14.25v2h-14.25zM307.55 381h14.25v1h-14.25zM478.55 397h14.25v3h-14.25zM476.25 474h14.25v1h-14.25z"/>
<path fill="#470078" d="M175.75 132h14.25v1h-14.25zM190 135h14.25v1h-14.25zM359.7 164h14.25v1h-14.25zM430.95 153h14.25v2h-14.25zM445.2 154h14.25v2h-14.25zM144.85 189h14.25v1h-14.25zM216.1 184h14.25v1h-14.25zM444.1 180h14.25v3h-14.25zM172.45 202h14.25v2h-14.25zM172.45 216h14.25v1h-14.25zM286.45 208h14.25v1h-14.25zM285.15 243h14.25v2h-14.25zM470.4 233h14.25v2h-14.25zM440.7 275h14.25v1h-14.25zM125 323h14.25v1h-14.25zM438.5 312h14.25v2h-14.25zM238 334h14.25v2h-14.25zM137.25 366h14.25v2h-14.25zM151.5 377h14.25v2h-14.25zM507.05 410h3.95v2h-3.95z"/>
<path fill="#460073" d="M175.75 133h14.25v1h-14.25zM332.5 131h14.25v1h-14.25zM375.25 140h14.25v1h-14.25zM131.7 146h14.25v1h-14.25zM160.2 159h14.25v1h-14.25zM201.85 182h14.25v3h-14.25zM301.6 173h14.25v2h-14.25zM344.35 181h14.25v2h-14.25zM358.6 170h14.25v1h-14.25zM129.7 218h14.25v2h-14.25zM356.4 237h14.25v1h-14.25zM441.9 249h14.25v2h-14.25zM169.95 271h14.25v1h-14.25zM355.2 271h14.25v1h-14.25zM126 298h14.25v2h-14.25zM126 306h14.25v2h-14.25zM325.5 304h14.25v1h-14.25zM425.25 299h14.25v1h-14.25zM139.25 310h14.25v2h-14.25zM153.5 315h14.25v1h-14.25zM436.5 365h14.25v3h-14.25zM165.05 382h14.25v1h-14.25zM378.8 386h14.25v1h-14.25zM447.75 471h14.25v1h-14.25z"/>
<path fill="#470079" d="M175.75 134h14.25v1h-14.25zM346.75 142h14.25v2h-14.25zM131.7 161h14.25v2h-14.25zM160.2 156h14.25v1h-14.25zM359.7 153h14.25v2h-14.25zM330.1 180h14.25v2h-14.25zM229.45 212h14.25v1h-14.25zM286.45 200h14.25v1h-14.25zM300.7 219h14.25v1h-14.25zM428.95 226h14.25v1h-14.25z"/>
<path fill="#420068" d="M175.75 135h14.25v3h-14.25zM304 139h14.25v3h-14.25zM346.75 133h14.25v1h-14.25zM345.45 153h14.25v3h-14.25zM159.1 166h14.25v2h-14.25zM159.1 177h14.25v2h-14.25zM444.1 175h14.25v1h-14.25zM143.95 209h14.25v1h-14.25zM300.7 222h14.25v2h-14.25zM270.9 241h14.25v2h-14.25zM285.15 268h14.25v1h-14.25zM427.65 267h14.25v2h-14.25zM283.95 275h14.25v1h-14.25zM355.2 283h14.25v2h-14.25zM454.95 270h14.25v3h-14.25zM311.25 298h14.25v1h-14.25zM452.75 318h14.25v2h-14.25zM222.75 359h14.25v1h-14.25zM279.75 360h14.25v1h-14.25zM379.5 377h14.25v2h-14.25zM165.05 390h14.25v1h-14.25zM279.05 381h14.25v2h-14.25z"/>
<path fill="#400063" d="M175.75 138h14.25v2h-14.25zM388.2 160h14.25v1h-14.25zM430.95 151h14.25v1h-14.25zM244.6 184h14.25v1h-14.25zM344.35 170h14.25v1h-14.25zM387.1 195h14.25v2h-14.25zM401.35 175h14.25v1h-14.25zM129.7 200h14.25v2h-14.25zM329.2 224h14.25v1h-14.25zM285.15 262h14.25v1h-14.25zM313.65 251h14.25v2h-14.25zM370.65 248h14.25v1h-14.25zM399.15 259h14.25v2h-14.25zM413.4 235h14.25v2h-14.25zM340.95 281h14.25v2h-14.25zM168.75 297h14.25v3h-14.25zM240 296h14.25v2h-14.25zM254.25 297h14.25v2h-14.25zM439.5 298h14.25v2h-14.25zM394.75 343h14.25v2h-14.25zM151.5 366h14.25v1h-14.25zM180 374h14.25v2h-14.25zM393.75 366h14.25v2h-14.25zM165.05 388h14.25v2h-14.25zM293.3 385h14.25v2h-14.25zM393.05 392h14.25v1h-14.25zM276.75 469h14.25v1h-14.25z"/>
<path fill="#44006f" d="M175.75 140h14.25v1h-14.25zM289.75 134h14.25v2h-14.25zM389.5 136h14.25v1h-14.25zM130.6 181h14.25v2h-14.25zM144.85 183h14.25v1h-14.25zM273.1 188h14.25v2h-14.25zM287.35 171h14.25v2h-14.25zM344.35 195h14.25v2h-14.25zM387.1 193h14.25v1h-14.25zM429.85 194h14.25v1h-14.25zM172.45 211h14.25v1h-14.25zM443.2 201h14.25v1h-14.25zM128.4 239h14.25v1h-14.25zM256.65 245h14.25v2h-14.25zM299.4 233h14.25v1h-14.25zM441.9 256h14.25v1h-14.25zM169.95 270h14.25v1h-14.25zM184.2 278h14.25v1h-14.25zM326.7 273h14.25v1h-14.25zM483.45 270h19.75v1h-19.75zM154.5 292h14.25v2h-14.25zM453.75 299h14.25v1h-14.25zM139.25 323h14.25v3h-14.25zM165.75 371h14.25v1h-14.25zM222.75 373h14.25v2h-14.25zM408 365h14.25v2h-14.25zM408 378h14.25v1h-14.25zM264.8 380h14.25v1h-14.25zM364.55 392h14.25v1h-14.25zM193.55 397h14.25v3h-14.25zM207.8 396h14.25v1h-14.25zM393.05 408h14.25v1h-14.25zM177 470h14.25v1h-14.25zM376.5 469h14.25v1h-14.25zM462 474h14.25v1h-14.25z"/>
<path fill="#470076" d="M175.75 142h14.25v2h-14.25zM289.75 136h14.25v2h-14.25zM346.75 130h14.25v1h-14.25zM387.1 175h14.25v1h-14.25zM300.7 203h14.25v1h-14.25zM300.7 217h14.25v2h-14.25zM212.7 284h14.25v3h-14.25zM312.45 271h14.25v1h-14.25zM326.7 278h14.25v1h-14.25zM338.75 318h14.25v3h-14.25zM151.5 375h14.25v2h-14.25zM165.75 379h14.25v1h-14.25zM408 359h14.25v2h-14.25z"/>
<path fill="#340041" d="M175.75 145h14.25v1h-14.25zM289.75 138h14.25v3h-14.25zM289.75 141h14.25v1h-14.25zM160.2 146h1v10h-1zM160.2 156h1v4h-1zM160.2 160h1v4h-1zM160.2 164h1v2h-1zM245.7 156h14.25v1h-14.25zM274.2 159h14.25v1h-14.25zM430.95 146h1v10h-1zM430.95 156h1v4h-1zM430.95 160h1v6h-1zM445.2 156h14.25v1h-14.25zM358.6 168h14.25v2h-14.25zM186.7 207h14.25v2h-14.25zM285.15 237h14.25v2h-14.25zM413.4 244h14.25v1h-14.25zM413.4 245h14.25v2h-14.25zM413.4 248h14.25v1h-14.25zM141.45 289h14.25v1h-14.25zM326.7 285h14.25v1h-14.25zM412.2 274h14.25v1h-14.25zM126 295h14.25v1h-14.25zM167.75 316h14.25v2h-14.25zM222.05 403h14.25v3h-14.25z"/>
<path fill="#5f01c2" d="M190 111h14.25v1h-14.25zM204.25 116h14.25v1h-14.25zM274.2 163h14.25v3h-14.25zM402.45 157h14.25v2h-14.25zM230.35 185h14.25v1h-14.25zM142.65 260h14.25v2h-14.25zM156.9 248h14.25v2h-14.25zM482.25 307h19.75v1h-19.75zM366.25 346h14.25v1h-14.25zM480.25 351h19.75v1h-19.75zM351 372h14.25v1h-14.25zM336.05 397h14.25v2h-14.25z"/>
<path fill="#6101c9" d="M190 112h14.25v2h-14.25zM318.25 137h14.25v1h-14.25zM403.75 139h14.25v1h-14.25zM489.25 136h19.75v3h-19.75zM373.95 165h14.25v1h-14.25zM356.4 238h14.25v1h-14.25zM212.7 269h14.25v1h-14.25zM369.45 272h14.25v2h-14.25zM425.25 290h14.25v2h-14.25zM436.5 378h14.25v2h-14.25zM276.75 448h14.25v2h-14.25zM276.75 461h14.25v2h-14.25z"/>
<path fill="#6001c7" d="M190 114h14.25v2h-14.25zM190 118h14.25v1h-14.25zM190 119h14.25v1h-14.25zM190 121h14.25v3h-14.25zM190 126h14.25v2h-14.25zM204.25 112h14.25v1h-14.25zM204.25 115h14.25v1h-14.25zM204.25 117h14.25v2h-14.25zM187.6 185h14.25v1h-14.25zM241.2 273h14.25v1h-14.25zM294 361h14.25v1h-14.25zM378.8 383h14.25v1h-14.25zM122.3 393h14.25v1h-14.25zM263.5 421h14.25v1h-14.25zM292 420h14.25v1h-14.25z"/>
<path fill="#6101c8" d="M190 116h14.25v2h-14.25zM190 120h14.25v1h-14.25zM190 124h14.25v2h-14.25zM204.25 119h14.25v1h-14.25zM204.25 120h14.25v1h-14.25zM487.95 151h19.75v2h-19.75zM258.85 184h14.25v1h-14.25zM315.85 169h14.25v2h-14.25zM387.1 171h14.25v1h-14.25zM415.6 176h14.25v3h-14.25zM414.7 228h14.25v2h-14.25zM454.95 276h14.25v2h-14.25zM281.75 310h14.25v1h-14.25zM138.25 348h14.25v3h-14.25zM195.25 334h14.25v1h-14.25zM450.75 360h14.25v2h-14.25zM293.3 399h14.25v1h-14.25zM492.8 395h14.25v2h-14.25zM492.8 397h14.25v3h-14.25zM191.25 473h14.25v2h-14.25zM219.75 439h14.25v1h-14.25zM262.5 460h14.25v3h-14.25z"/>
<path fill="#5e01c1" d="M190 128h14.25v1h-14.25zM204.25 126h14.25v2h-14.25zM274.2 155h14.25v1h-14.25zM429.85 195h14.25v2h-14.25zM243.7 230h14.25v2h-14.25zM386.2 231h14.25v1h-14.25zM399.15 265h14.25v1h-14.25zM298.2 273h14.25v1h-14.25zM225.75 297h14.25v1h-14.25zM254.25 301h14.25v1h-14.25zM368.25 292h14.25v2h-14.25zM138.25 332h14.25v3h-14.25zM195.25 341h14.25v3h-14.25zM379.5 357h14.25v3h-14.25zM276.75 438h14.25v3h-14.25zM305.25 460h14.25v3h-14.25z"/>
<path fill="#300039" d="M190 134h14.25v1h-14.25zM332.5 134h14.25v1h-14.25zM375.25 133h14.25v2h-14.25zM245.7 152h14.25v2h-14.25zM471.7 208h14.25v1h-14.25zM471.7 224h14.25v1h-14.25zM355.2 278h14.25v1h-14.25zM140.25 306h14.25v1h-14.25zM322.5 367h14.25v1h-14.25z"/>
<path fill="#3b0054" d="M190 136h14.25v3h-14.25zM218.5 130h14.25v1h-14.25zM289.75 130h14.25v1h-14.25zM446.5 145h14.25v1h-14.25zM315.85 167h14.25v1h-14.25zM330.1 168h14.25v2h-14.25zM330.1 183h14.25v1h-14.25zM387.1 185h14.25v1h-14.25zM429.85 167h14.25v1h-14.25zM343.45 223h14.25v3h-14.25zM471.7 220h14.25v1h-14.25zM313.65 238h14.25v3h-14.25zM184.2 282h14.25v1h-14.25zM426.45 279h14.25v3h-14.25zM325.5 302h14.25v2h-14.25zM339.75 306h14.25v3h-14.25zM338.75 312h14.25v3h-14.25zM438.5 318h14.25v1h-14.25zM452.75 317h14.25v1h-14.25zM265.5 377h14.25v2h-14.25zM122.3 389h14.25v1h-14.25zM236.3 388h14.25v2h-14.25zM262.5 465h14.25v1h-14.25zM504.75 469h6.25v1h-6.25z"/>
<path fill="#6b01e4" d="M190 143h14.25v3h-14.25zM259.95 150h14.25v1h-14.25zM187.6 166h1v6h-1zM187.6 172h1v8h-1zM187.6 180h1v8h-1zM187.6 188h1v6h-1zM187.6 194h1v6h-1zM269.7 285h1v5h-1zM265.5 362h14.25v2h-14.25zM465 371h14.25v3h-14.25zM478.55 384h19.75v1h-19.75zM334.75 418h14.25v2h-14.25zM205.5 471h14.25v1h-14.25zM219.75 459h14.25v3h-14.25z"/>
<path fill="#5f01c4" d="M204.25 111h14.25v1h-14.25zM204.25 124h14.25v2h-14.25zM403.75 137h14.25v1h-14.25zM402.45 146h14.25v1h-14.25zM357.7 224h14.25v1h-14.25zM213.9 236h14.25v2h-14.25zM412.2 269h14.25v1h-14.25zM254.25 308h14.25v1h-14.25zM468 292h14.25v3h-14.25zM482.25 309h19.75v1h-19.75zM407.3 392h14.25v1h-14.25zM320.5 414h14.25v1h-14.25z"/>
<path fill="#5e01c0" d="M204.25 113h14.25v1h-14.25zM359.7 152h14.25v1h-14.25zM187.6 175h14.25v1h-14.25zM230.35 180h14.25v2h-14.25zM273.1 178h14.25v2h-14.25zM387.1 168h14.25v1h-14.25zM371.95 228h14.25v3h-14.25zM256.65 260h14.25v1h-14.25zM356.4 249h14.25v2h-14.25zM141.45 271h14.25v3h-14.25zM255.45 288h14.25v2h-14.25zM225.75 290h14.25v1h-14.25zM282.75 296h14.25v2h-14.25zM267.5 310h14.25v2h-14.25zM380.5 347h14.25v1h-14.25zM294 358h14.25v1h-14.25zM421.55 386h14.25v2h-14.25zM134.25 442h14.25v1h-14.25zM177 439h14.25v1h-14.25z"/>
<path fill="#5f01c3" d="M204.25 114h14.25v1h-14.25zM475 144h14.25v2h-14.25zM402.45 161h14.25v1h-14.25zM273.1 194h14.25v2h-14.25zM372.85 166h14.25v1h-14.25zM200.95 212h14.25v1h-14.25zM329.2 208h14.25v2h-14.25zM371.95 210h14.25v2h-14.25zM199.65 255h14.25v2h-14.25zM213.9 232h14.25v1h-14.25zM313.65 249h14.25v2h-14.25zM356.4 253h14.25v1h-14.25zM356.4 262h14.25v2h-14.25zM370.65 263h14.25v2h-14.25zM141.45 276h14.25v1h-14.25zM269.7 276h14.25v1h-14.25zM298.2 283h14.25v1h-14.25zM254.25 300h14.25v1h-14.25zM411 290h14.25v1h-14.25zM481.25 324h19.75v1h-19.75zM223.75 338h14.25v3h-14.25zM309.25 344h14.25v3h-14.25zM165.75 359h14.25v2h-14.25zM408 374h14.25v1h-14.25zM236.3 410h14.25v3h-14.25zM407.3 401h14.25v1h-14.25zM507.05 399h3.95v2h-3.95zM292 419h14.25v1h-14.25zM292 425h14.25v3h-14.25zM420.25 418h14.25v1h-14.25zM205.5 460h14.25v1h-14.25zM291 455h14.25v1h-14.25z"/>
<path fill="#6001c5" d="M204.25 121h14.25v3h-14.25zM231.45 163h14.25v3h-14.25zM388.2 164h14.25v1h-14.25zM473.7 154h14.25v1h-14.25zM487.95 157h19.75v1h-19.75zM186.7 215h14.25v2h-14.25zM342.15 247h14.25v1h-14.25zM226.95 270h14.25v2h-14.25zM138.25 337h14.25v2h-14.25zM351 379h14.25v1h-14.25zM479.25 359h19.75v1h-19.75zM250.55 392h14.25v1h-14.25zM464.3 403h14.25v1h-14.25zM478.55 393h14.25v1h-14.25zM492.8 408h14.25v3h-14.25zM249.25 417h14.25v3h-14.25zM234 473h14.25v2h-14.25z"/>
<path fill="#5f01c5" d="M204.25 128h14.25v1h-14.25zM231.45 152h14.25v1h-14.25zM329.2 210h14.25v1h-14.25zM482.25 292h19.75v2h-19.75zM333.75 434h1v10h-1zM333.75 444h1v10h-1zM490.5 442h1v4h-1zM490.5 446h1v10h-1z"/>
<path fill="#6001c8" d="M204.25 129h14.25v1h-14.25zM389.5 145h14.25v1h-14.25zM415.6 195h14.25v1h-14.25zM327.9 242h14.25v2h-14.25zM356.4 232h14.25v1h-14.25zM456.15 255h14.25v1h-14.25zM269.7 278h14.25v1h-14.25zM439.5 296h14.25v1h-14.25zM408 379h14.25v1h-14.25zM422.25 379h14.25v1h-14.25z"/>
<path fill="#5600a8" d="M204.25 130h14.25v1h-14.25zM345.45 161h14.25v2h-14.25zM187.6 181h14.25v1h-14.25zM187.6 182h14.25v1h-14.25zM230.35 173h14.25v1h-14.25zM358.6 181h14.25v1h-14.25zM387.1 183h14.25v2h-14.25zM243.7 208h14.25v1h-14.25zM213.9 264h14.25v3h-14.25zM299.4 250h14.25v2h-14.25zM269.7 284h14.25v2h-14.25zM268.5 300h14.25v3h-14.25zM425.25 296h14.25v1h-14.25zM166.75 353h14.25v1h-14.25zM223.75 343h14.25v3h-14.25zM295 347h14.25v3h-14.25zM265.5 379h14.25v1h-14.25zM149.5 418h14.25v2h-14.25zM349 428h14.25v2h-14.25zM406 428h14.25v3h-14.25zM376.5 470h14.25v1h-14.25zM419.25 444h14.25v1h-14.25z"/>
<path fill="#3f005f" d="M204.25 131h14.25v1h-14.25zM275.5 131h14.25v1h-14.25zM389.5 137h14.25v2h-14.25zM302.7 146h1v8h-1zM302.7 154h1v8h-1zM302.7 162h1v4h-1zM331.2 146h14.25v2h-14.25zM331.2 154h14.25v2h-14.25zM402.45 162h1v4h-1zM230.35 166h1v8h-1zM230.35 174h1v10h-1zM230.35 184h1v6h-1zM230.35 190h1v8h-1zM230.35 198h1v2h-1zM458.35 179h14.25v1h-14.25zM229.45 218h14.25v2h-14.25zM229.45 225h14.25v1h-14.25zM300.7 200h1v8h-1zM300.7 208h1v6h-1zM300.7 214h1v10h-1zM300.7 224h1v6h-1zM300.7 230h1v2h-1zM357.7 218h14.25v3h-14.25zM386.2 200h1v4h-1zM386.2 204h1v6h-1zM386.2 210h1v10h-1zM386.2 220h1v6h-1zM386.2 226h1v4h-1zM386.2 230h1v2h-1zM156.9 250h1v10h-1zM156.9 260h1v4h-1zM156.9 264h1v5h-1zM171.15 232h1v6h-1zM171.15 238h1v8h-1zM256.65 238h14.25v2h-14.25zM256.65 257h14.25v1h-14.25zM384.9 232h1v4h-1zM384.9 236h1v8h-1zM384.9 244h1v10h-1zM384.9 254h1v8h-1zM384.9 262h1v6h-1zM384.9 268h1v1h-1zM427.65 257h14.25v2h-14.25zM155.7 269h1v4h-1zM155.7 273h1v8h-1zM241.2 272h14.25v1h-14.25zM312.45 269h1v8h-1zM312.45 277h1v10h-1zM369.45 285h14.25v3h-14.25zM383.7 269h1v4h-1zM383.7 273h1v8h-1zM268.5 292h14.25v3h-14.25zM439.5 290h1v6h-1zM439.5 296h1v8h-1zM439.5 304h1v6h-1zM482.25 298h19.75v2h-19.75zM296 312h14.25v3h-14.25zM181 353h14.25v2h-14.25zM195.25 351h14.25v2h-14.25zM209.5 345h14.25v3h-14.25zM209.5 332h1v8h-1zM209.5 340h1v4h-1zM209.5 344h1v4h-1zM209.5 348h1v7h-1zM309.25 354h14.25v1h-14.25zM309.25 332h1v10h-1zM309.25 342h1v8h-1zM309.25 350h1v4h-1zM309.25 354h1v1h-1zM366.25 350h14.25v1h-14.25zM294 355h1v10h-1zM294 365h1v6h-1zM294 371h1v8h-1zM294 379h1v1h-1zM308.25 355h1v6h-1zM308.25 361h1v8h-1zM308.25 369h1v4h-1zM308.25 373h1v7h-1zM393.75 363h14.25v1h-14.25zM436.5 370h14.25v1h-14.25zM165.05 386h14.25v2h-14.25zM279.05 384h14.25v2h-14.25zM279.05 392h1v1h-1z"/>
<path fill="#370049" d="M204.25 132h14.25v3h-14.25zM459.45 156h14.25v2h-14.25zM487.95 147h19.75v2h-19.75zM258.85 189h14.25v1h-14.25zM358.6 177h14.25v2h-14.25zM401.35 179h14.25v1h-14.25zM444.1 189h14.25v2h-14.25zM400.45 206h14.25v1h-14.25zM485.95 220h19.75v1h-19.75zM184.2 283h14.25v2h-14.25zM126 292h14.25v3h-14.25zM154.5 294h14.25v2h-14.25zM295 335h14.25v2h-14.25zM409 350h14.25v1h-14.25zM194.25 355h14.25v1h-14.25zM393.05 383h14.25v3h-14.25zM179.3 400h14.25v2h-14.25zM307.55 393h14.25v1h-14.25zM419.25 466h14.25v1h-14.25zM490.5 467h14.25v1h-14.25zM490.5 468h14.25v1h-14.25z"/>
<path fill="#5400a1" d="M204.25 135h14.25v3h-14.25zM432.25 134h14.25v2h-14.25zM174.45 158h14.25v2h-14.25zM245.7 162h14.25v1h-14.25zM288.45 146h1v6h-1zM288.45 152h1v10h-1zM288.45 162h1v4h-1zM445.2 146h1v4h-1zM445.2 150h1v6h-1zM445.2 156h1v6h-1zM459.45 152h14.25v3h-14.25zM201.85 188h14.25v2h-14.25zM216.1 190h14.25v2h-14.25zM301.6 197h14.25v1h-14.25zM344.35 192h14.25v2h-14.25zM458.35 191h14.25v1h-14.25zM486.85 187h19.75v2h-19.75zM486.85 190h19.75v2h-19.75zM486.85 194h19.75v1h-19.75zM186.7 210h14.25v1h-14.25zM186.7 212h14.25v3h-14.25zM229.45 229h14.25v3h-14.25zM257.95 222h14.25v2h-14.25zM314.95 204h14.25v1h-14.25zM156.9 260h14.25v1h-14.25zM171.15 243h14.25v1h-14.25zM185.4 238h14.25v2h-14.25zM228.15 264h14.25v1h-14.25zM285.15 232h1v8h-1zM285.15 240h1v8h-1zM342.15 245h14.25v2h-14.25zM441.9 255h14.25v1h-14.25zM456.15 238h14.25v2h-14.25zM141.45 281h1v6h-1zM141.45 287h1v3h-1zM326.7 269h1v6h-1zM326.7 275h1v4h-1zM326.7 279h1v8h-1zM326.7 287h1v3h-1zM412.2 270h14.25v1h-14.25zM440.7 271h14.25v1h-14.25zM454.95 287h1v3h-1zM140.25 304h14.25v1h-14.25zM154.5 290h1v10h-1zM154.5 300h1v8h-1zM154.5 308h1v2h-1zM468 296h14.25v1h-14.25zM468 298h14.25v2h-14.25zM324.5 310h1v10h-1zM324.5 320h1v10h-1zM266.5 345h14.25v1h-14.25zM280.75 336h14.25v2h-14.25zM280.75 350h14.25v1h-14.25zM295 341h14.25v2h-14.25zM409 350h1v5h-1zM151.5 373h1v7h-1zM165.75 372h14.25v2h-14.25zM165.75 373h1v6h-1zM165.75 379h1v1h-1zM194.25 357h14.25v3h-14.25zM251.25 355h14.25v3h-14.25zM265.5 373h14.25v1h-14.25zM408 355h1v4h-1zM408 359h1v8h-1zM179.3 388h1v5h-1zM250.55 389h14.25v3h-14.25zM293.3 391h14.25v2h-14.25zM293.3 380h1v4h-1zM179.3 393h1v4h-1zM179.3 397h1v8h-1z"/>
<path fill="#5e01bf" d="M204.25 138h14.25v1h-14.25zM446.5 130h14.25v1h-14.25zM274.2 146h1v6h-1zM274.2 152h1v10h-1zM274.2 162h1v4h-1zM359.7 156h14.25v1h-14.25zM388.2 157h14.25v3h-14.25zM445.2 162h1v4h-1zM244.6 174h14.25v1h-14.25zM258.85 166h1v4h-1zM258.85 170h1v6h-1zM258.85 176h1v6h-1zM258.85 182h1v4h-1zM258.85 186h1v6h-1zM258.85 192h1v4h-1zM258.85 196h1v4h-1zM387.1 169h14.25v2h-14.25zM444.1 166h14.25v1h-14.25zM472.6 184h14.25v1h-14.25zM414.7 200h1v10h-1zM414.7 210h1v8h-1zM414.7 218h1v4h-1zM414.7 222h1v10h-1zM185.4 232h1v4h-1zM185.4 236h1v8h-1zM185.4 244h1v6h-1zM185.4 250h1v8h-1zM185.4 258h1v4h-1zM185.4 262h1v7h-1zM199.65 243h14.25v2h-14.25zM256.65 232h1v8h-1zM256.65 240h1v10h-1zM256.65 250h1v4h-1zM256.65 254h1v4h-1zM256.65 258h1v6h-1zM256.65 264h1v4h-1zM256.65 268h1v1h-1zM413.4 232h1v8h-1zM413.4 240h1v6h-1zM413.4 246h1v8h-1zM413.4 254h1v6h-1zM413.4 260h1v4h-1zM413.4 264h1v4h-1zM413.4 268h1v1h-1zM484.65 248h1v6h-1zM484.65 254h1v10h-1zM484.65 264h1v5h-1zM141.45 269h1v6h-1zM141.45 275h1v6h-1zM184.2 269h1v4h-1zM184.2 273h1v8h-1zM184.2 281h1v8h-1zM184.2 289h1v1h-1zM198.45 269h1v6h-1zM198.45 275h1v10h-1zM198.45 285h1v5h-1zM269.7 269h1v8h-1zM269.7 277h1v8h-1zM298.2 287h1v3h-1zM469.2 269h14.25v1h-14.25zM483.45 275h19.75v1h-19.75zM483.45 269h1v10h-1zM483.45 279h1v10h-1zM468 290h1v8h-1zM468 298h1v4h-1zM468 302h1v4h-1zM468 306h1v4h-1zM295 350h14.25v2h-14.25zM136.55 380h1v8h-1zM207.8 380h1v10h-1zM207.8 390h1v3h-1zM250.55 380h1v4h-1zM250.55 384h1v8h-1zM250.55 392h1v1h-1zM264.8 390h1v3h-1zM293.3 384h1v8h-1zM293.3 392h1v1h-1zM464.3 388h1v5h-1zM407.3 393h1v6h-1zM507.05 412h3.95v1h-3.95zM249.25 432h1v2h-1zM292 417h14.25v2h-14.25zM405 464h1v10h-1zM405 474h1v1h-1z"/>
<path fill="#44006e" d="M204.25 139h14.25v1h-14.25zM145.95 154h14.25v1h-14.25zM145.95 159h14.25v1h-14.25zM160.2 164h14.25v1h-14.25zM174.45 151h14.25v1h-14.25zM144.85 169h14.25v3h-14.25zM159.1 182h14.25v1h-14.25zM173.35 190h14.25v3h-14.25zM258.85 167h14.25v3h-14.25zM401.35 188h14.25v1h-14.25zM486.85 183h19.75v1h-19.75zM129.7 205h14.25v3h-14.25zM172.45 205h14.25v3h-14.25zM186.7 229h14.25v3h-14.25zM428.95 227h14.25v1h-14.25zM443.2 219h14.25v1h-14.25zM156.9 261h14.25v1h-14.25zM270.9 255h14.25v2h-14.25zM285.15 245h14.25v2h-14.25zM313.65 268h14.25v1h-14.25zM399.15 262h14.25v3h-14.25zM441.9 240h14.25v1h-14.25zM127.2 279h14.25v3h-14.25zM254.25 305h14.25v2h-14.25zM354 309h14.25v1h-14.25zM411 296h14.25v2h-14.25zM153.5 313h14.25v1h-14.25zM353 319h14.25v2h-14.25zM467 320h14.25v2h-14.25zM309.25 332h14.25v2h-14.25zM309.25 347h14.25v2h-14.25zM409 354h14.25v1h-14.25zM123 367h14.25v1h-14.25zM379.5 360h14.25v2h-14.25zM193.55 387h14.25v2h-14.25zM307.55 380h14.25v1h-14.25zM279.05 395h14.25v3h-14.25zM321.8 394h14.25v1h-14.25zM504.75 468h6.25v1h-6.25z"/>
<path fill="#4e008e" d="M204.25 140h14.25v2h-14.25zM289.75 111h14.25v3h-14.25zM361 143h14.25v2h-14.25zM489.25 145h19.75v1h-19.75zM231.45 149h14.25v1h-14.25zM487.95 156h19.75v1h-19.75zM273.1 186h14.25v1h-14.25zM387.1 179h14.25v1h-14.25zM429.85 168h14.25v1h-14.25zM444.1 172h14.25v3h-14.25zM458.35 170h14.25v1h-14.25zM243.7 201h14.25v2h-14.25zM257.95 224h14.25v2h-14.25zM314.95 215h14.25v1h-14.25zM343.45 200h14.25v2h-14.25zM343.45 202h14.25v1h-14.25zM343.45 216h14.25v2h-14.25zM357.7 214h14.25v1h-14.25zM400.45 215h14.25v1h-14.25zM128.4 246h14.25v3h-14.25zM156.9 262h14.25v2h-14.25zM199.65 259h14.25v3h-14.25zM228.15 257h14.25v1h-14.25zM242.4 266h14.25v1h-14.25zM256.65 261h14.25v3h-14.25zM384.9 260h14.25v3h-14.25zM413.4 252h14.25v1h-14.25zM226.95 276h14.25v1h-14.25zM339.75 294h14.25v3h-14.25zM339.75 297h14.25v1h-14.25zM182 329h14.25v1h-14.25zM296 310h14.25v2h-14.25zM209.5 337h14.25v1h-14.25zM309.25 334h14.25v2h-14.25zM180 357h14.25v2h-14.25zM379.5 367h14.25v1h-14.25zM407.3 399h14.25v1h-14.25zM276.75 472h14.25v1h-14.25z"/>
<path fill="#5500a3" d="M204.25 142h14.25v1h-14.25zM304 132h14.25v3h-14.25zM302.7 159h14.25v2h-14.25zM201.85 191h14.25v2h-14.25zM230.35 174h14.25v1h-14.25zM342.15 232h14.25v1h-14.25zM226.95 269h14.25v1h-14.25zM266.5 346h14.25v3h-14.25zM237 355h14.25v2h-14.25zM237 372h14.25v3h-14.25zM206.5 421h14.25v1h-14.25z"/>
<path fill="#500095" d="M204.25 143h14.25v2h-14.25zM332.5 132h14.25v1h-14.25zM332.5 138h14.25v2h-14.25zM361 111h14.25v1h-14.25zM361 122h14.25v1h-14.25zM403.75 114h14.25v2h-14.25zM403.75 124h14.25v1h-14.25zM217.2 146h1v8h-1zM217.2 154h1v6h-1zM217.2 160h1v6h-1zM416.7 146h1v8h-1zM416.7 154h1v6h-1zM416.7 160h1v6h-1zM301.6 184h14.25v1h-14.25zM301.6 199h14.25v1h-14.25zM472.6 186h14.25v2h-14.25zM486.85 172h19.75v1h-19.75zM486.85 189h19.75v1h-19.75zM143.95 230h1v2h-1zM300.7 204h14.25v1h-14.25zM314.95 210h14.25v2h-14.25zM386.2 228h14.25v1h-14.25zM485.95 217h19.75v3h-19.75zM156.9 232h1v6h-1zM156.9 238h1v4h-1zM156.9 242h1v8h-1zM256.65 250h14.25v1h-14.25zM256.65 267h14.25v1h-14.25zM270.9 268h14.25v1h-14.25zM370.65 247h14.25v1h-14.25zM384.9 235h14.25v2h-14.25zM399.15 257h14.25v1h-14.25zM413.4 249h14.25v3h-14.25zM184.2 277h14.25v1h-14.25zM184.2 279h14.25v2h-14.25zM212.7 287h1v3h-1zM241.2 274h14.25v1h-14.25zM241.2 275h14.25v3h-14.25zM298.2 274h14.25v2h-14.25zM469.2 289h14.25v1h-14.25zM211.5 290h1v8h-1zM211.5 298h1v8h-1zM254.25 307h14.25v1h-14.25zM297 300h14.25v1h-14.25zM425.25 297h14.25v2h-14.25zM453.75 294h14.25v2h-14.25zM468 300h14.25v1h-14.25zM324.5 321h14.25v2h-14.25zM223.75 342h14.25v1h-14.25zM194.25 356h14.25v1h-14.25zM208.5 366h14.25v2h-14.25zM222.05 382h14.25v1h-14.25zM250.55 381h14.25v1h-14.25zM135.25 420h14.25v3h-14.25zM192.25 414h1v10h-1zM192.25 424h1v4h-1zM192.25 428h1v6h-1zM334.75 414h1v10h-1zM334.75 424h1v6h-1zM334.75 430h1v4h-1zM248.25 466h1v9h-1zM490.5 474h14.25v1h-14.25z"/>
<path fill="#5400a0" d="M204.25 145h14.25v1h-14.25zM489.25 144h19.75v1h-19.75zM131.7 147h14.25v2h-14.25zM345.45 150h14.25v1h-14.25zM416.7 163h14.25v2h-14.25zM430.95 156h14.25v1h-14.25zM201.85 199h14.25v1h-14.25zM230.35 186h14.25v1h-14.25zM257.95 200h14.25v3h-14.25zM300.7 200h14.25v1h-14.25zM386.2 214h14.25v1h-14.25zM414.7 205h14.25v1h-14.25zM428.95 205h14.25v1h-14.25zM199.65 252h14.25v1h-14.25zM213.9 243h14.25v3h-14.25zM228.15 258h14.25v2h-14.25zM299.4 245h14.25v1h-14.25zM313.65 232h14.25v1h-14.25zM342.15 264h14.25v1h-14.25zM397.95 269h14.25v1h-14.25zM440.7 285h14.25v1h-14.25zM382.5 294h14.25v1h-14.25zM468 302h14.25v1h-14.25zM152.5 352h14.25v1h-14.25zM280.75 346h14.25v2h-14.25zM450.75 357h14.25v2h-14.25zM136.55 386h14.25v2h-14.25zM236.3 380h14.25v1h-14.25zM307.55 382h14.25v1h-14.25zM464.3 391h14.25v2h-14.25zM307.55 394h14.25v2h-14.25zM307.55 403h14.25v1h-14.25zM405 470h14.25v2h-14.25zM405 474h14.25v1h-14.25zM433.5 464h14.25v2h-14.25z"/>
<path fill="#6301ce" d="M218.5 111h14.25v2h-14.25zM218.5 116h14.25v1h-14.25zM218.5 117h14.25v2h-14.25zM389.5 114h14.25v1h-14.25zM389.5 127h14.25v1h-14.25zM415.6 182h14.25v1h-14.25zM472.6 174h14.25v3h-14.25zM229.45 214h14.25v1h-14.25zM485.95 231h19.75v1h-19.75zM384.9 239h14.25v1h-14.25zM413.4 256h14.25v2h-14.25zM312.45 278h14.25v1h-14.25zM382.5 307h14.25v3h-14.25zM306.25 420h14.25v3h-14.25zM333.75 465h14.25v2h-14.25z"/>
<path fill="#6301d0" d="M218.5 113h14.25v1h-14.25zM218.5 119h14.25v1h-14.25zM218.5 127h14.25v3h-14.25zM218.5 133h14.25v2h-14.25zM218.5 135h14.25v3h-14.25zM275.5 123h14.25v1h-14.25zM275.5 126h14.25v1h-14.25zM275.5 127h14.25v1h-14.25zM389.5 115h14.25v1h-14.25zM389.5 116h14.25v1h-14.25zM201.85 197h14.25v1h-14.25zM372.85 174h14.25v1h-14.25zM186.7 206h14.25v1h-14.25zM229.45 226h14.25v1h-14.25zM257.95 208h14.25v2h-14.25zM313.65 264h14.25v1h-14.25zM342.15 236h14.25v2h-14.25zM484.65 255h19.75v1h-19.75zM198.45 275h14.25v2h-14.25zM312.45 284h14.25v2h-14.25zM469.2 287h14.25v1h-14.25zM225.75 296h14.25v1h-14.25zM396.75 309h14.25v1h-14.25zM468 301h14.25v1h-14.25zM238 349h14.25v1h-14.25zM208.5 378h14.25v2h-14.25zM379.5 374h14.25v1h-14.25zM162.75 438h14.25v2h-14.25z"/>
<path fill="#6401d2" d="M218.5 114h14.25v1h-14.25zM218.5 125h14.25v1h-14.25zM218.5 126h14.25v1h-14.25zM275.5 113h14.25v1h-14.25zM275.5 124h14.25v2h-14.25zM475 140h14.25v3h-14.25zM388.2 151h14.25v2h-14.25zM228.15 237h14.25v2h-14.25zM228.15 247h14.25v1h-14.25zM256.65 248h14.25v1h-14.25zM299.4 237h14.25v2h-14.25zM226.95 273h14.25v3h-14.25zM197.25 300h14.25v1h-14.25zM482.25 290h19.75v2h-19.75zM252.25 349h14.25v2h-14.25zM380.5 348h14.25v1h-14.25zM194.25 360h14.25v2h-14.25zM377.5 414h14.25v1h-14.25zM205.5 438h14.25v3h-14.25zM219.75 440h14.25v1h-14.25z"/>
<path fill="#6401d1" d="M218.5 115h14.25v1h-14.25zM275.5 114h14.25v2h-14.25zM389.5 118h14.25v2h-14.25zM389.5 120h14.25v1h-14.25zM389.5 128h14.25v1h-14.25zM314.95 206h14.25v3h-14.25zM343.45 230h14.25v2h-14.25zM371.95 202h14.25v1h-14.25zM228.15 241h14.25v2h-14.25zM342.15 260h14.25v2h-14.25zM356.4 233h14.25v2h-14.25zM282.75 299h14.25v1h-14.25zM382.5 303h14.25v1h-14.25zM380.5 340h14.25v3h-14.25zM151.5 359h14.25v1h-14.25zM465 360h14.25v1h-14.25zM193.55 411h14.25v3h-14.25zM507.05 402h3.95v1h-3.95zM292 416h14.25v1h-14.25zM320.5 422h14.25v2h-14.25zM120 438h14.25v3h-14.25zM276.75 435h14.25v3h-14.25zM305.25 463h14.25v1h-14.25zM305.25 466h14.25v1h-14.25zM305.25 469h14.25v3h-14.25zM476.25 442h14.25v1h-14.25z"/>
<path fill="#6101cb" d="M218.5 120h14.25v2h-14.25zM243.7 219h14.25v1h-14.25zM185.4 243h14.25v1h-14.25zM180 370h14.25v1h-14.25zM351 373h14.25v1h-14.25z"/>
<path fill="#6201cd" d="M218.5 122h14.25v3h-14.25zM318.25 142h14.25v2h-14.25zM389.5 113h14.25v1h-14.25zM389.5 126h14.25v1h-14.25zM316.95 162h1v4h-1zM402.45 159h14.25v1h-14.25zM473.7 146h1v6h-1zM473.7 152h1v4h-1zM473.7 156h1v10h-1zM387.1 174h1v6h-1zM387.1 180h1v8h-1zM387.1 188h1v6h-1zM387.1 194h1v4h-1zM387.1 198h1v2h-1zM486.85 166h19.75v2h-19.75zM215.2 200h1v4h-1zM215.2 204h1v10h-1zM215.2 214h1v4h-1zM215.2 218h1v6h-1zM215.2 224h1v8h-1zM243.7 227h14.25v1h-14.25zM171.15 262h14.25v2h-14.25zM356.4 239h14.25v2h-14.25zM399.15 232h1v10h-1zM399.15 242h1v10h-1zM399.15 252h1v10h-1zM399.15 262h1v7h-1zM298.2 269h1v6h-1zM298.2 275h1v6h-1zM298.2 281h1v6h-1zM397.95 269h1v8h-1zM397.95 277h1v4h-1zM440.7 287h1v3h-1zM254.25 309h14.25v1h-14.25zM297 298h14.25v2h-14.25zM311.25 292h14.25v2h-14.25zM425.25 290h1v6h-1zM425.25 296h1v10h-1zM425.25 306h1v4h-1zM210.5 328h1v4h-1zM281.75 313h14.25v1h-14.25zM195.25 347h14.25v1h-14.25zM208.5 355h1v8h-1zM208.5 363h1v10h-1zM208.5 373h1v4h-1zM208.5 377h1v3h-1zM294 359h14.25v2h-14.25zM279.05 393h1v6h-1zM279.05 399h1v4h-1zM507.05 398h3.95v1h-3.95zM306.25 427h14.25v1h-14.25zM134.25 445h14.25v1h-14.25zM348 467h14.25v1h-14.25zM447.75 438h14.25v1h-14.25z"/>
<path fill="#4a0081" d="M218.5 131h14.25v2h-14.25zM375.25 137h14.25v3h-14.25zM418 136h14.25v2h-14.25zM373.95 150h14.25v1h-14.25zM358.6 175h14.25v1h-14.25zM358.6 192h14.25v3h-14.25zM172.45 215h14.25v1h-14.25zM443.2 202h14.25v1h-14.25zM171.15 253h14.25v1h-14.25zM456.15 245h14.25v2h-14.25zM241.2 282h14.25v1h-14.25zM326.7 282h14.25v2h-14.25zM369.45 270h14.25v2h-14.25zM481.25 325h19.75v2h-19.75zM408 362h14.25v3h-14.25zM207.8 403h14.25v1h-14.25zM504.75 466h6.25v1h-6.25z"/>
<path fill="#6701da" d="M218.5 138h14.25v2h-14.25zM302.7 157h14.25v2h-14.25zM429.85 190h14.25v1h-14.25zM472.6 166h14.25v2h-14.25zM228.15 267h14.25v2h-14.25zM285.15 253h14.25v3h-14.25zM285.15 265h14.25v3h-14.25zM327.9 245h14.25v3h-14.25zM281.75 314h14.25v3h-14.25zM310.25 310h14.25v1h-14.25zM309.25 339h14.25v1h-14.25zM279.05 408h14.25v3h-14.25zM492.8 405h14.25v1h-14.25zM292 414h14.25v2h-14.25zM334.75 415h14.25v3h-14.25zM219.75 455h14.25v1h-14.25zM248.25 457h14.25v3h-14.25zM248.25 463h14.25v2h-14.25zM333.75 438h14.25v2h-14.25z"/>
<path fill="#3f005e" d="M218.5 140h14.25v2h-14.25zM247 141h14.25v1h-14.25zM274.2 151h14.25v1h-14.25zM487.95 164h19.75v2h-19.75zM486.85 175h19.75v1h-19.75zM300.7 220h14.25v2h-14.25zM156.9 252h14.25v2h-14.25zM209.5 338h14.25v2h-14.25zM465 364h14.25v2h-14.25zM364.55 387h14.25v3h-14.25zM177 473h14.25v2h-14.25zM262.5 474h14.25v1h-14.25z"/>
<path fill="#5500a5" d="M218.5 142h14.25v3h-14.25zM304 142h14.25v1h-14.25zM174.45 160h14.25v3h-14.25zM202.95 157h14.25v2h-14.25zM302.7 163h14.25v1h-14.25zM187.6 180h14.25v1h-14.25zM458.35 168h14.25v1h-14.25zM472.6 180h14.25v3h-14.25zM243.7 200h14.25v1h-14.25zM286.45 211h14.25v1h-14.25zM314.95 220h14.25v1h-14.25zM386.2 203h14.25v1h-14.25zM400.45 228h14.25v2h-14.25zM443.2 218h14.25v1h-14.25zM384.9 252h14.25v1h-14.25zM384.9 253h14.25v2h-14.25zM441.9 265h14.25v1h-14.25zM298.2 278h14.25v2h-14.25zM326.7 276h14.25v2h-14.25zM440.7 289h14.25v1h-14.25zM140.25 292h14.25v1h-14.25zM225.75 294h14.25v2h-14.25zM223.75 354h14.25v1h-14.25zM208.5 358h14.25v3h-14.25zM208.5 362h14.25v1h-14.25zM265.5 367h14.25v2h-14.25zM279.75 355h14.25v1h-14.25zM378.8 387h14.25v2h-14.25zM192.25 421h14.25v1h-14.25zM277.75 418h14.25v2h-14.25zM120 465h14.25v2h-14.25zM205.5 461h14.25v3h-14.25z"/>
<path fill="#520099" d="M218.5 145h14.25v1h-14.25zM403.75 112h14.25v2h-14.25zM403.75 119h14.25v1h-14.25zM403.75 120h14.25v2h-14.25zM160.2 147h14.25v1h-14.25zM216.1 168h14.25v1h-14.25zM273.1 183h14.25v1h-14.25zM372.85 175h14.25v1h-14.25zM387.1 191h14.25v2h-14.25zM429.85 187h14.25v1h-14.25zM444.1 167h14.25v3h-14.25zM486.85 173h19.75v1h-19.75zM200.95 210h14.25v1h-14.25zM414.7 202h14.25v3h-14.25zM285.15 263h14.25v2h-14.25zM299.4 241h14.25v2h-14.25zM399.15 266h14.25v2h-14.25zM413.4 253h14.25v1h-14.25zM456.15 247h14.25v1h-14.25zM484.65 256h19.75v1h-19.75zM169.95 283h14.25v1h-14.25zM355.2 281h14.25v1h-14.25zM168.75 300h14.25v1h-14.25zM297 297h14.25v1h-14.25zM339.75 293h14.25v1h-14.25zM396.75 299h14.25v3h-14.25zM139.25 331h14.25v1h-14.25zM181 350h14.25v3h-14.25zM366.25 352h14.25v2h-14.25zM308.25 360h14.25v3h-14.25zM308.25 373h14.25v1h-14.25zM379.5 371h14.25v1h-14.25zM293.3 384h14.25v1h-14.25zM464.3 382h14.25v3h-14.25zM192.25 418h14.25v2h-14.25zM219.75 474h14.25v1h-14.25zM276.75 473h14.25v2h-14.25zM390.75 472h14.25v3h-14.25z"/>
<path fill="#9309df" d="M232.75 111h14.25v1h-14.25zM232.75 112h14.25v1h-14.25zM130.6 198h14.25v2h-14.25zM240 309h14.25v1h-14.25zM323.5 346h14.25v1h-14.25zM466 342h14.25v1h-14.25zM263.5 428h14.25v1h-14.25zM277.75 430h14.25v1h-14.25zM377.5 430h14.25v2h-14.25zM391.75 423h14.25v1h-14.25z"/>
<path fill="#9109e5" d="M232.75 113h14.25v1h-14.25zM232.75 127h14.25v1h-14.25zM323.5 341h14.25v3h-14.25zM363.25 428h14.25v1h-14.25zM491.5 416h14.25v1h-14.25zM348 447h14.25v1h-14.25zM348 450h14.25v1h-14.25z"/>
<path fill="#950ad8" d="M232.75 114h14.25v1h-14.25zM324.5 331h14.25v1h-14.25z"/>
<path fill="#9108e6" d="M232.75 115h14.25v1h-14.25zM124 352h14.25v1h-14.25zM448.75 426h14.25v1h-14.25zM191.25 442h14.25v2h-14.25zM362.25 443h14.25v3h-14.25z"/>
<path fill="#9008e6" d="M232.75 116h14.25v1h-14.25zM491.5 420h14.25v2h-14.25zM491.5 426h14.25v2h-14.25z"/>
<path fill="#9109e3" d="M232.75 117h14.25v1h-14.25zM491.5 417h14.25v2h-14.25zM491.5 422h14.25v1h-14.25zM291 443h14.25v1h-14.25zM376.5 449h14.25v1h-14.25z"/>
<path fill="#940ada" d="M232.75 118h14.25v1h-14.25zM232.75 119h14.25v3h-14.25zM305.25 444h14.25v1h-14.25z"/>
<path fill="#9209e1" d="M232.75 122h14.25v1h-14.25zM232.75 129h14.25v1h-14.25zM166.75 332h14.25v1h-14.25zM206.5 425h14.25v3h-14.25zM277.75 428h14.25v2h-14.25zM363.25 429h14.25v1h-14.25zM491.5 415h14.25v1h-14.25zM390.75 434h14.25v2h-14.25z"/>
<path fill="#940ad9" d="M232.75 123h14.25v2h-14.25zM397.95 281h14.25v2h-14.25zM167.75 329h14.25v2h-14.25zM451.75 348h14.25v1h-14.25zM321.8 383h14.25v1h-14.25zM206.5 424h14.25v1h-14.25zM391.75 420h14.25v1h-14.25zM390.75 449h14.25v3h-14.25zM405 441h14.25v1h-14.25z"/>
<path fill="#9209e0" d="M232.75 125h14.25v2h-14.25zM305.25 441h14.25v1h-14.25zM376.5 435h14.25v2h-14.25zM376.5 447h14.25v2h-14.25zM405 444h14.25v1h-14.25z"/>
<path fill="#940adb" d="M232.75 128h14.25v1h-14.25zM166.75 344h14.25v1h-14.25zM451.75 332h14.25v1h-14.25zM480.25 332h19.75v2h-19.75zM163.75 429h14.25v1h-14.25zM134.25 446h14.25v3h-14.25zM248.25 435h14.25v3h-14.25zM405 434h14.25v1h-14.25zM405 435h14.25v1h-14.25z"/>
<path fill="#4a0082" d="M232.75 130h14.25v1h-14.25zM318.25 144h14.25v1h-14.25zM418 140h14.25v1h-14.25zM273.1 167h14.25v1h-14.25zM444.1 191h14.25v2h-14.25zM357.7 215h14.25v1h-14.25zM414.7 206h14.25v3h-14.25zM414.7 230h14.25v2h-14.25zM212.7 275h14.25v1h-14.25zM269.7 282h14.25v2h-14.25zM297 291h14.25v2h-14.25zM338.75 325h14.25v1h-14.25zM181 349h14.25v1h-14.25zM238 342h14.25v1h-14.25zM180 363h14.25v2h-14.25zM408 355h14.25v2h-14.25zM279.05 386h14.25v3h-14.25zM421.55 394h14.25v3h-14.25zM435.8 394h14.25v3h-14.25zM406 431h14.25v2h-14.25z"/>
<path fill="#6d02e9" d="M232.75 131h14.25v1h-14.25zM217.2 159h14.25v1h-14.25zM357.7 229h14.25v2h-14.25zM428.95 200h14.25v2h-14.25zM443.2 222h14.25v1h-14.25zM128.4 262h14.25v1h-14.25zM156.9 241h14.25v1h-14.25zM299.4 253h14.25v3h-14.25zM299.4 262h14.25v2h-14.25zM470.4 236h14.25v2h-14.25zM281.75 312h14.25v1h-14.25zM437.5 351h14.25v2h-14.25zM480.25 353h19.75v1h-19.75zM336.75 376h14.25v2h-14.25zM465 370h14.25v1h-14.25zM465 376h14.25v1h-14.25zM478.55 385h19.75v1h-19.75zM150.8 397h14.25v2h-14.25zM192.25 420h14.25v1h-14.25z"/>
<path fill="#6001c6" d="M232.75 132h14.25v1h-14.25zM361 132h14.25v1h-14.25zM361 140h14.25v1h-14.25zM301.6 167h14.25v2h-14.25zM301.6 169h14.25v1h-14.25zM486.85 181h19.75v1h-19.75zM215.2 223h14.25v2h-14.25zM329.2 221h14.25v1h-14.25zM356.4 235h14.25v2h-14.25zM184.2 272h14.25v1h-14.25zM139.25 329h14.25v2h-14.25zM166.75 349h14.25v3h-14.25zM437.5 350h14.25v1h-14.25zM222.75 363h14.25v2h-14.25zM122.3 383h14.25v2h-14.25zM350.3 396h14.25v1h-14.25zM364.55 407h14.25v1h-14.25zM120 447h14.25v3h-14.25zM177 436h14.25v1h-14.25zM333.75 449h14.25v2h-14.25z"/>
<path fill="#6301cf" d="M232.75 133h14.25v2h-14.25zM275.5 118h14.25v1h-14.25zM401.35 184h14.25v1h-14.25zM429.85 191h14.25v2h-14.25zM414.7 225h14.25v2h-14.25zM484.65 250h19.75v3h-19.75zM312.45 286h14.25v1h-14.25zM138.25 340h14.25v2h-14.25zM152.5 344h14.25v1h-14.25zM251.25 376h14.25v1h-14.25zM294 373h14.25v3h-14.25zM336.75 369h14.25v2h-14.25zM134.25 444h14.25v1h-14.25zM205.5 453h14.25v1h-14.25zM433.5 460h14.25v2h-14.25zM476.25 466h14.25v2h-14.25z"/>
<path fill="#8204fe" d="M232.75 135h14.25v2h-14.25zM232.75 138h14.25v1h-14.25zM261.25 135h14.25v1h-14.25zM261.25 142h14.25v1h-14.25zM361 133h14.25v1h-14.25zM361 137h14.25v3h-14.25zM403.75 145h14.25v1h-14.25zM460.75 135h14.25v1h-14.25zM475 132h14.25v3h-14.25zM489.25 131h19.75v1h-19.75zM489.25 132h19.75v3h-19.75zM188.7 157h14.25v1h-14.25zM402.45 150h14.25v2h-14.25zM402.45 156h14.25v1h-14.25zM416.7 146h14.25v1h-14.25zM416.7 162h14.25v1h-14.25zM159.1 196h1v4h-1zM372.85 198h14.25v1h-14.25zM143.95 229h14.25v3h-14.25zM172.45 217h14.25v2h-14.25zM172.45 219h14.25v1h-14.25zM172.45 220h14.25v1h-14.25zM172.45 224h14.25v1h-14.25zM343.45 227h14.25v3h-14.25zM443.2 223h14.25v2h-14.25zM457.45 226h14.25v1h-14.25zM128.4 252h14.25v2h-14.25zM156.9 236h14.25v2h-14.25zM171.15 248h14.25v3h-14.25zM299.4 256h14.25v1h-14.25zM327.9 235h14.25v1h-14.25zM327.9 244h14.25v1h-14.25zM327.9 254h14.25v2h-14.25zM327.9 256h14.25v1h-14.25zM342.15 241h14.25v2h-14.25zM342.15 265h14.25v2h-14.25zM427.65 233h14.25v2h-14.25zM456.15 243h14.25v1h-14.25zM456.15 244h14.25v1h-14.25zM470.4 235h14.25v1h-14.25zM484.65 232h19.75v3h-19.75zM484.65 238h19.75v1h-19.75zM484.65 232h1v6h-1zM484.65 238h1v4h-1zM484.65 242h1v6h-1zM127.2 269h14.25v1h-14.25zM212.7 289h14.25v1h-14.25zM283.95 284h14.25v2h-14.25zM397.95 281h1v9h-1zM183 294h14.25v2h-14.25zM183 296h14.25v1h-14.25zM197.25 291h14.25v1h-14.25zM197.25 290h1v6h-1zM197.25 296h1v4h-1zM282.75 293h14.25v3h-14.25zM311.25 295h14.25v3h-14.25zM368.25 291h14.25v1h-14.25zM368.25 298h14.25v1h-14.25zM368.25 290h1v6h-1zM368.25 296h1v6h-1zM396.75 305h14.25v2h-14.25zM411 305h14.25v1h-14.25zM411 309h14.25v1h-14.25zM139.25 324h1v8h-1zM153.5 328h14.25v2h-14.25zM424.25 310h14.25v1h-14.25zM424.25 314h14.25v1h-14.25zM138.25 345h14.25v1h-14.25zM138.25 346h14.25v2h-14.25zM138.25 332h1v6h-1zM138.25 338h1v8h-1zM138.25 346h1v6h-1zM152.5 336h14.25v1h-14.25zM152.5 348h14.25v1h-14.25zM152.5 332h1v4h-1zM152.5 336h1v4h-1zM152.5 340h1v10h-1zM152.5 350h1v4h-1zM152.5 354h1v1h-1zM394.75 334h14.25v2h-14.25zM394.75 332h1v10h-1zM437.5 353h14.25v2h-14.25zM437.5 350h1v4h-1zM437.5 354h1v1h-1zM451.75 349h14.25v2h-14.25zM466 349h14.25v2h-14.25zM151.5 358h14.25v1h-14.25zM151.5 355h1v10h-1zM165.75 363h14.25v1h-14.25zM165.75 355h1v10h-1zM336.75 367h14.25v1h-14.25zM336.75 371h14.25v2h-14.25zM351 362h14.25v1h-14.25zM365.25 370h14.25v2h-14.25zM365.25 376h14.25v1h-14.25zM436.5 357h14.25v1h-14.25zM465 356h14.25v1h-14.25zM465 357h14.25v1h-14.25zM465 361h14.25v1h-14.25zM465 377h14.25v2h-14.25zM179.3 380h14.25v2h-14.25zM450.05 389h14.25v1h-14.25zM478.55 383h19.75v1h-19.75zM136.55 396h14.25v3h-14.25zM136.55 393h1v10h-1zM150.8 399h14.25v2h-14.25zM150.8 393h1v6h-1zM150.8 399h1v6h-1zM165.05 399h14.25v1h-14.25zM165.05 400h14.25v3h-14.25zM165.05 393h1v8h-1zM179.3 407h14.25v2h-14.25zM179.3 409h14.25v2h-14.25zM179.3 405h1v6h-1zM179.3 411h1v3h-1zM193.55 410h14.25v1h-14.25zM193.55 405h1v4h-1zM193.55 409h1v5h-1zM250.55 407h14.25v3h-14.25zM250.55 407h1v6h-1zM307.55 397h14.25v1h-14.25zM321.8 399h14.25v1h-14.25zM350.3 394h14.25v1h-14.25zM350.3 393h1v6h-1zM364.55 405h14.25v2h-14.25zM364.55 408h14.25v1h-14.25zM364.55 409h14.25v2h-14.25zM378.8 410h14.25v2h-14.25zM464.3 393h1v6h-1zM464.3 399h1v6h-1zM478.55 401h14.25v1h-14.25zM135.25 426h14.25v2h-14.25zM135.25 428h14.25v1h-14.25zM135.25 414h1v6h-1zM135.25 420h1v6h-1zM135.25 426h1v4h-1zM135.25 430h1v4h-1zM149.5 416h14.25v2h-14.25zM149.5 432h14.25v1h-14.25zM178 414h14.25v2h-14.25zM178 419h14.25v1h-14.25zM178 429h14.25v1h-14.25zM178 432h14.25v1h-14.25zM206.5 414h1v6h-1zM206.5 420h1v4h-1zM235 414h1v10h-1zM249.25 424h14.25v1h-14.25zM249.25 414h1v8h-1zM249.25 422h1v10h-1zM277.75 420h14.25v1h-14.25zM277.75 425h14.25v3h-14.25zM277.75 414h1v8h-1zM277.75 422h1v6h-1zM306.25 426h14.25v1h-14.25zM306.25 431h14.25v2h-14.25zM306.25 414h1v8h-1zM306.25 422h1v8h-1zM306.25 430h1v4h-1zM320.5 415h14.25v3h-14.25zM320.5 419h14.25v2h-14.25zM320.5 421h14.25v1h-14.25zM334.75 429h14.25v1h-14.25zM334.75 431h14.25v2h-14.25zM349 416h14.25v3h-14.25zM363.25 414h14.25v3h-14.25zM363.25 424h14.25v2h-14.25zM363.25 426h14.25v2h-14.25zM377.5 424h14.25v1h-14.25zM420.25 414h14.25v1h-14.25zM420.25 421h14.25v1h-14.25zM420.25 432h14.25v2h-14.25zM448.75 420h14.25v2h-14.25zM477.25 417h14.25v2h-14.25zM477.25 433h14.25v1h-14.25zM120 437h14.25v1h-14.25zM134.25 434h14.25v1h-14.25zM134.25 441h14.25v1h-14.25zM162.75 434h14.25v1h-14.25zM162.75 437h14.25v1h-14.25zM162.75 434h1v8h-1zM162.75 442h1v6h-1zM205.5 434h14.25v1h-14.25zM205.5 450h14.25v1h-14.25zM205.5 454h14.25v1h-14.25zM234 439h14.25v1h-14.25zM234 447h14.25v2h-14.25zM276.75 457h14.25v3h-14.25zM276.75 450h1v10h-1zM276.75 460h1v4h-1zM305.25 448h1v10h-1zM305.25 458h1v8h-1zM333.75 440h14.25v2h-14.25zM348 466h14.25v1h-14.25zM348 468h14.25v1h-14.25zM348 472h14.25v1h-14.25zM348 468h1v6h-1zM348 474h1v1h-1zM376.5 452h14.25v2h-14.25zM376.5 458h14.25v2h-14.25zM376.5 462h14.25v1h-14.25zM405 459h14.25v1h-14.25zM405 452h1v8h-1zM419.25 438h14.25v2h-14.25zM419.25 441h14.25v2h-14.25zM419.25 434h1v10h-1zM419.25 444h1v4h-1zM419.25 448h1v6h-1zM433.5 456h14.25v3h-14.25zM447.75 435h14.25v1h-14.25zM447.75 436h14.25v2h-14.25zM447.75 443h14.25v1h-14.25zM447.75 449h14.25v1h-14.25zM447.75 434h1v4h-1zM447.75 438h1v10h-1zM476.25 436h14.25v3h-14.25zM476.25 439h14.25v3h-14.25zM476.25 448h14.25v2h-14.25zM476.25 450h14.25v2h-14.25zM490.5 447h14.25v1h-14.25zM490.5 448h14.25v1h-14.25zM504.75 447h6.25v2h-6.25z"/>
<path fill="#5d01bc" d="M232.75 137h14.25v1h-14.25zM446.5 136h14.25v2h-14.25zM402.45 152h14.25v1h-14.25zM458.35 166h14.25v2h-14.25zM199.65 266h14.25v1h-14.25zM256.65 242h14.25v2h-14.25zM241.2 280h14.25v2h-14.25zM255.45 286h14.25v1h-14.25zM254.25 290h14.25v1h-14.25zM451.75 350h1v5h-1zM393.75 377h14.25v1h-14.25zM492.8 401h14.25v3h-14.25zM433.5 468h14.25v3h-14.25zM447.75 441h14.25v1h-14.25z"/>
<path fill="#53009c" d="M232.75 139h14.25v1h-14.25zM415.6 199h14.25v1h-14.25zM156.9 258h14.25v1h-14.25zM299.4 243h14.25v2h-14.25zM356.4 241h14.25v3h-14.25zM384.9 248h14.25v1h-14.25zM269.7 279h14.25v3h-14.25zM483.45 283h19.75v2h-19.75zM295 344h14.25v2h-14.25zM208.5 361h14.25v1h-14.25zM207.8 381h14.25v3h-14.25zM264.8 390h14.25v2h-14.25zM263.5 419h14.25v2h-14.25z"/>
<path fill="#6f02ed" d="M232.75 140h14.25v1h-14.25zM217.2 152h14.25v1h-14.25zM259.95 152h14.25v1h-14.25zM440.7 278h14.25v1h-14.25zM254.25 291h14.25v2h-14.25zM281.75 311h14.25v1h-14.25zM251.25 364h14.25v2h-14.25zM336.75 355h14.25v3h-14.25zM378.8 381h14.25v1h-14.25zM120 467h14.25v2h-14.25zM234 464h14.25v1h-14.25zM276.75 460h14.25v1h-14.25zM419.25 455h14.25v3h-14.25zM433.5 467h14.25v1h-14.25z"/>
<path fill="#6f02ec" d="M232.75 141h14.25v2h-14.25zM217.2 155h14.25v2h-14.25zM373.95 159h14.25v3h-14.25zM372.85 194h14.25v1h-14.25zM329.2 212h14.25v1h-14.25zM171.15 267h14.25v2h-14.25zM427.65 241h14.25v3h-14.25zM470.4 232h14.25v1h-14.25zM482.25 308h19.75v1h-19.75zM122.3 380h14.25v3h-14.25zM334.75 428h14.25v1h-14.25zM205.5 466h14.25v1h-14.25z"/>
<path fill="#18000e" d="M232.75 144h14.25v1h-14.25zM150.8 413h14.25v1h-14.25zM264.8 413h14.25v1h-14.25z"/>
<path fill="#6401d3" d="M232.75 145h14.25v1h-14.25zM301.6 194h14.25v2h-14.25zM387.1 176h14.25v3h-14.25zM128.4 264h14.25v3h-14.25zM185.4 265h14.25v3h-14.25zM184.2 289h14.25v1h-14.25zM237 360h14.25v3h-14.25zM237 377h14.25v3h-14.25zM365.25 366h14.25v2h-14.25zM219.75 441h14.25v1h-14.25z"/>
<path fill="#5c01b9" d="M247 131h14.25v1h-14.25zM275.5 130h14.25v1h-14.25zM188.7 159h14.25v1h-14.25zM259.95 160h14.25v3h-14.25zM459.45 161h14.25v2h-14.25zM187.6 183h14.25v1h-14.25zM201.85 175h14.25v2h-14.25zM387.1 172h14.25v3h-14.25zM257.95 212h14.25v1h-14.25zM242.4 257h14.25v1h-14.25zM270.9 245h14.25v1h-14.25zM356.4 247h14.25v2h-14.25zM356.4 251h14.25v1h-14.25zM427.65 251h14.25v2h-14.25zM212.7 270h14.25v1h-14.25zM426.45 285h14.25v1h-14.25zM440.7 269h14.25v2h-14.25zM140.25 305h14.25v1h-14.25zM297 301h14.25v3h-14.25zM325.5 295h14.25v2h-14.25zM382.5 300h14.25v1h-14.25zM366.25 351h14.25v1h-14.25zM393.05 389h14.25v2h-14.25zM293.3 400h14.25v1h-14.25zM149.5 425h14.25v2h-14.25z"/>
<path fill="#7603f9" d="M247 135h14.25v3h-14.25zM457.45 230h14.25v2h-14.25zM484.65 247h19.75v1h-19.75zM355.2 269h14.25v1h-14.25zM383.7 285h14.25v2h-14.25zM254.25 302h14.25v3h-14.25zM450.05 385h14.25v1h-14.25zM206.5 416h14.25v3h-14.25zM420.25 429h14.25v1h-14.25zM477.25 422h14.25v1h-14.25z"/>
<path fill="#49007e" d="M247 138h14.25v3h-14.25zM375.25 135h14.25v2h-14.25zM359.7 149h14.25v1h-14.25zM330.1 192h14.25v1h-14.25zM358.6 166h14.25v2h-14.25zM429.85 184h1v4h-1zM429.85 188h1v8h-1zM429.85 196h1v4h-1zM458.35 177h14.25v1h-14.25zM357.7 224h1v8h-1zM443.2 208h14.25v2h-14.25zM356.4 232h1v8h-1zM356.4 240h1v10h-1zM356.4 250h1v6h-1zM356.4 256h1v8h-1zM356.4 264h1v5h-1zM241.2 278h14.25v1h-14.25zM340.95 279h14.25v1h-14.25zM369.45 269h1v4h-1zM369.45 273h1v6h-1zM369.45 279h1v6h-1zM369.45 285h1v5h-1zM383.7 285h1v5h-1zM282.75 304h14.25v2h-14.25zM125 326h14.25v1h-14.25zM153.5 314h14.25v1h-14.25zM338.75 327h14.25v3h-14.25zM467 315h14.25v2h-14.25zM481.25 319h19.75v1h-19.75zM481.25 320h19.75v1h-19.75zM251.25 367h14.25v3h-14.25zM393.75 374h14.25v3h-14.25zM193.55 390h14.25v1h-14.25zM222.05 403h1v4h-1zM222.05 407h1v6h-1zM292 414h1v4h-1zM292 418h1v8h-1zM292 426h1v6h-1zM234 462h1v6h-1zM234 468h1v7h-1zM248.25 456h1v10h-1z"/>
<path fill="#7c03fe" d="M247 142h14.25v1h-14.25zM261.25 140h14.25v2h-14.25zM429.85 188h14.25v2h-14.25zM342.15 268h14.25v1h-14.25zM369.45 277h14.25v2h-14.25zM139.25 328h14.25v1h-14.25zM153.5 330h14.25v1h-14.25zM152.5 339h14.25v1h-14.25zM152.5 349h14.25v2h-14.25zM152.5 351h14.25v1h-14.25zM351 356h14.25v1h-14.25zM351 364h14.25v2h-14.25zM436.5 360h14.25v2h-14.25zM450.75 378h14.25v2h-14.25zM136.55 399h14.25v1h-14.25zM222.05 406h14.25v1h-14.25zM222.05 412h14.25v1h-14.25zM492.8 400h14.25v1h-14.25zM135.25 423h14.25v2h-14.25zM149.5 414h14.25v1h-14.25zM178 423h14.25v2h-14.25zM178 428h14.25v1h-14.25zM377.5 426h14.25v2h-14.25zM177 440h14.25v1h-14.25zM177 451h14.25v1h-14.25zM234 449h14.25v2h-14.25zM248.25 453h14.25v2h-14.25zM248.25 465h14.25v1h-14.25zM305.25 458h14.25v2h-14.25zM305.25 472h14.25v2h-14.25zM390.75 464h14.25v2h-14.25zM390.75 470h14.25v1h-14.25zM447.75 446h14.25v3h-14.25zM476.25 446h14.25v2h-14.25z"/>
<path fill="#43006c" d="M247 143h14.25v2h-14.25zM389.5 129h14.25v3h-14.25zM389.5 132h14.25v1h-14.25zM131.7 150h14.25v2h-14.25zM160.2 146h14.25v1h-14.25zM188.7 149h14.25v1h-14.25zM373.95 155h14.25v1h-14.25zM130.6 186h14.25v1h-14.25zM173.35 183h14.25v2h-14.25zM301.6 177h14.25v1h-14.25zM372.85 172h14.25v2h-14.25zM129.7 208h14.25v1h-14.25zM272.2 220h14.25v1h-14.25zM386.2 229h14.25v2h-14.25zM228.15 265h14.25v1h-14.25zM413.4 241h14.25v1h-14.25zM484.65 260h19.75v2h-19.75zM326.7 287h14.25v2h-14.25zM355.2 282h14.25v1h-14.25zM454.95 287h14.25v1h-14.25zM254.25 296h14.25v1h-14.25zM354 293h14.25v2h-14.25zM354 307h14.25v2h-14.25zM468 306h14.25v1h-14.25zM125 311h14.25v1h-14.25zM165.05 380h14.25v2h-14.25z"/>
<path fill="#31003b" d="M247 145h14.25v1h-14.25zM143.95 200h1v6h-1zM143.95 206h1v4h-1zM143.95 210h1v10h-1zM143.95 220h1v10h-1zM286.45 212h14.25v2h-14.25zM199.65 232h1v4h-1zM126 308h14.25v2h-14.25zM139.25 318h14.25v3h-14.25zM167.75 310h1v10h-1zM167.75 320h1v6h-1zM338.75 322h14.25v3h-14.25zM353 312h14.25v2h-14.25zM353 329h14.25v1h-14.25zM467 322h14.25v3h-14.25zM165.05 380h1v6h-1zM165.05 386h1v7h-1zM179.3 392h14.25v1h-14.25zM236.3 391h14.25v1h-14.25zM236.3 388h1v4h-1zM236.3 392h1v1h-1zM134.25 469h14.25v1h-14.25zM162.75 451h14.25v3h-14.25zM362.25 470h14.25v2h-14.25zM362.25 468h1v7h-1zM462 472h1v3h-1z"/>
<path fill="#8d07ee" d="M261.25 111h14.25v1h-14.25z"/>
<path fill="#8d07ef" d="M261.25 112h14.25v2h-14.25zM261.25 123h14.25v1h-14.25zM480.25 338h19.75v1h-19.75zM292 430h14.25v3h-14.25zM363.25 433h14.25v1h-14.25zM319.5 446h14.25v2h-14.25zM319.5 461h14.25v2h-14.25z"/>
<path fill="#8d07f0" d="M261.25 114h14.25v3h-14.25zM261.25 119h14.25v1h-14.25zM261.25 124h14.25v3h-14.25zM166.75 348h14.25v1h-14.25zM323.5 349h14.25v3h-14.25zM236.3 382h14.25v3h-14.25zM505.75 421h5.25v3h-5.25zM191.25 448h14.25v2h-14.25z"/>
<path fill="#8f08ea" d="M261.25 117h14.25v2h-14.25zM263.5 427h14.25v1h-14.25zM134.25 451h14.25v1h-14.25z"/>
<path fill="#8c07f1" d="M261.25 120h14.25v1h-14.25zM163.75 424h14.25v3h-14.25zM220.75 419h14.25v2h-14.25zM248.25 434h14.25v1h-14.25zM319.5 448h14.25v1h-14.25zM362.25 437h14.25v2h-14.25z"/>
<path fill="#8c07f2" d="M261.25 121h14.25v2h-14.25zM124 351h14.25v1h-14.25zM264.8 385h14.25v1h-14.25zM362.25 434h14.25v2h-14.25zM390.75 437h14.25v1h-14.25z"/>
<path fill="#9008e8" d="M261.25 127h14.25v2h-14.25zM121 428h14.25v1h-14.25z"/>
<path fill="#9e0eaa" d="M261.25 129h14.25v1h-14.25zM210.5 323h14.25v1h-14.25zM367.25 317h14.25v1h-14.25zM337.75 353h14.25v2h-14.25zM276.75 444h14.25v2h-14.25z"/>
<path fill="#5b01b7" d="M261.25 138h14.25v2h-14.25zM217.2 149h14.25v3h-14.25zM453.75 306h14.25v3h-14.25zM152.5 347h14.25v1h-14.25zM380.5 351h14.25v2h-14.25zM251.25 377h14.25v3h-14.25zM265.5 374h14.25v1h-14.25zM336.05 391h14.25v1h-14.25zM192.25 428h14.25v1h-14.25zM477.25 424h14.25v3h-14.25zM134.25 438h14.25v3h-14.25zM234 434h14.25v1h-14.25zM419.25 434h14.25v2h-14.25z"/>
<path fill="#6d02ea" d="M261.25 143h14.25v3h-14.25zM248.25 466h14.25v1h-14.25z"/>
<path fill="#6201cb" d="M275.5 111h14.25v1h-14.25zM275.5 112h14.25v1h-14.25zM389.5 117h14.25v1h-14.25zM274.2 156h14.25v1h-14.25zM402.45 162h14.25v1h-14.25zM343.45 206h14.25v1h-14.25zM428.95 214h14.25v2h-14.25zM485.95 225h19.75v2h-19.75zM270.9 236h14.25v1h-14.25zM370.65 239h14.25v1h-14.25zM413.4 242h14.25v2h-14.25zM382.5 301h14.25v2h-14.25zM393.75 370h14.25v2h-14.25zM407.3 393h14.25v3h-14.25zM149.5 421h14.25v1h-14.25z"/>
<path fill="#6101ca" d="M275.5 116h14.25v2h-14.25zM275.5 122h14.25v1h-14.25zM389.5 121h14.25v1h-14.25zM272.2 200h14.25v1h-14.25zM314.95 226h14.25v1h-14.25zM228.15 266h14.25v1h-14.25zM456.15 241h14.25v1h-14.25zM141.45 274h14.25v2h-14.25zM482.25 295h19.75v1h-19.75zM308.25 358h14.25v2h-14.25zM277.75 414h14.25v2h-14.25zM234 442h14.25v2h-14.25zM405 454h14.25v1h-14.25z"/>
<path fill="#6201cc" d="M275.5 119h14.25v3h-14.25zM275.5 128h14.25v2h-14.25zM389.5 111h14.25v2h-14.25zM389.5 122h14.25v1h-14.25zM389.5 123h14.25v1h-14.25zM389.5 124h14.25v2h-14.25zM202.95 152h14.25v3h-14.25zM216.1 181h14.25v2h-14.25zM372.85 199h14.25v1h-14.25zM172.45 225h14.25v1h-14.25zM357.7 208h14.25v3h-14.25zM171.15 242h14.25v1h-14.25zM199.65 268h14.25v1h-14.25zM256.65 233h14.25v3h-14.25zM327.9 237h14.25v3h-14.25zM399.15 239h14.25v3h-14.25zM413.4 234h14.25v1h-14.25zM297 295h14.25v2h-14.25zM422.25 357h14.25v3h-14.25zM420.25 416h14.25v1h-14.25zM405 456h14.25v1h-14.25z"/>
<path fill="#4e008f" d="M275.5 132h14.25v2h-14.25zM245.7 165h14.25v1h-14.25zM159.1 187h14.25v1h-14.25zM230.35 187h14.25v1h-14.25zM244.6 170h14.25v1h-14.25zM244.6 196h14.25v1h-14.25zM301.6 185h14.25v3h-14.25zM401.35 198h14.25v2h-14.25zM257.95 213h14.25v3h-14.25zM343.45 220h14.25v3h-14.25zM199.65 263h14.25v1h-14.25zM242.4 240h14.25v1h-14.25zM256.65 268h14.25v1h-14.25zM481.25 318h19.75v1h-19.75zM181 346h14.25v3h-14.25zM207.8 390h14.25v2h-14.25zM350.3 393h14.25v1h-14.25zM206.5 422h14.25v1h-14.25zM349 419h14.25v1h-14.25zM191.25 470h14.25v3h-14.25z"/>
<path fill="#5c01bc" d="M275.5 134h14.25v2h-14.25zM270.9 243h14.25v1h-14.25z"/>
<path fill="#510097" d="M275.5 136h14.25v1h-14.25zM318.25 141h14.25v1h-14.25zM403.75 116h14.25v1h-14.25zM403.75 138h14.25v1h-14.25zM274.2 160h14.25v1h-14.25zM288.45 152h14.25v1h-14.25zM302.7 155h14.25v2h-14.25zM388.2 149h14.25v2h-14.25zM487.95 146h19.75v1h-19.75zM130.6 171h14.25v1h-14.25zM258.85 197h14.25v1h-14.25zM315.85 166h14.25v1h-14.25zM401.35 167h14.25v2h-14.25zM415.6 173h14.25v1h-14.25zM200.95 205h14.25v1h-14.25zM257.95 220h14.25v2h-14.25zM286.45 226h14.25v3h-14.25zM357.7 205h14.25v2h-14.25zM357.7 207h14.25v1h-14.25zM386.2 217h14.25v2h-14.25zM386.2 220h14.25v3h-14.25zM242.4 255h14.25v2h-14.25zM370.65 255h14.25v2h-14.25zM413.4 265h14.25v1h-14.25zM141.45 278h14.25v1h-14.25zM269.7 269h14.25v2h-14.25zM397.95 271h14.25v1h-14.25zM397.95 289h14.25v1h-14.25zM483.45 276h19.75v1h-19.75zM325.5 293h14.25v1h-14.25zM382.5 290h14.25v1h-14.25zM439.5 297h14.25v1h-14.25zM439.5 303h14.25v2h-14.25zM366.25 347h14.25v2h-14.25zM208.5 372h14.25v1h-14.25zM208.5 373h14.25v2h-14.25zM308.25 367h14.25v2h-14.25zM308.25 374h14.25v3h-14.25zM422.25 355h14.25v2h-14.25zM422.25 368h14.25v3h-14.25zM236.3 392h14.25v1h-14.25zM350.3 390h14.25v1h-14.25zM393.05 380h14.25v1h-14.25zM393.05 381h14.25v2h-14.25zM407.3 382h14.25v2h-14.25zM478.55 400h14.25v1h-14.25zM349 424h14.25v1h-14.25z"/>
<path fill="#4e008d" d="M275.5 137h14.25v1h-14.25zM289.75 114h14.25v2h-14.25zM418 120h14.25v2h-14.25zM418 125h14.25v3h-14.25zM244.6 178h14.25v3h-14.25zM244.6 191h14.25v2h-14.25zM330.1 188h14.25v2h-14.25zM358.6 188h14.25v1h-14.25zM415.6 171h14.25v2h-14.25zM172.45 226h14.25v2h-14.25zM186.7 201h14.25v2h-14.25zM186.7 209h14.25v1h-14.25zM243.7 225h14.25v2h-14.25zM243.7 228h14.25v1h-14.25zM343.45 226h14.25v1h-14.25zM414.7 219h14.25v2h-14.25zM128.4 240h14.25v1h-14.25zM242.4 268h14.25v1h-14.25zM256.65 237h14.25v1h-14.25zM456.15 258h14.25v3h-14.25zM470.4 251h14.25v1h-14.25zM141.45 277h14.25v1h-14.25zM198.45 274h14.25v1h-14.25zM198.45 277h14.25v2h-14.25zM255.45 277h14.25v1h-14.25zM269.7 273h14.25v1h-14.25zM355.2 272h14.25v2h-14.25zM240 307h14.25v1h-14.25zM339.75 309h14.25v1h-14.25zM425.25 303h14.25v3h-14.25zM482.25 304h19.75v2h-19.75zM481.25 321h19.75v3h-19.75zM336.75 375h14.25v1h-14.25zM362.25 472h14.25v1h-14.25zM405 463h14.25v1h-14.25z"/>
<path fill="#4e008c" d="M275.5 138h14.25v3h-14.25zM289.75 120h14.25v1h-14.25zM489.25 135h19.75v1h-19.75zM459.45 147h14.25v1h-14.25zM487.95 158h19.75v1h-19.75zM258.85 185h14.25v1h-14.25zM258.85 190h14.25v1h-14.25zM273.1 193h14.25v1h-14.25zM429.85 177h14.25v1h-14.25zM458.35 180h14.25v2h-14.25zM458.35 186h14.25v2h-14.25zM200.95 202h14.25v1h-14.25zM270.9 233h14.25v2h-14.25zM340.95 274h14.25v2h-14.25zM468 295h14.25v1h-14.25zM181 339h14.25v2h-14.25zM195.25 339h14.25v2h-14.25zM409 342h14.25v2h-14.25zM423.25 346h14.25v2h-14.25zM307.55 396h14.25v1h-14.25zM419.25 440h14.25v1h-14.25z"/>
<path fill="#3c0057" d="M275.5 141h14.25v2h-14.25zM275.5 145h14.25v1h-14.25zM289.75 133h14.25v1h-14.25zM403.75 135h14.25v1h-14.25zM315.85 172h14.25v2h-14.25zM387.1 190h14.25v1h-14.25zM458.35 169h14.25v1h-14.25zM300.7 202h14.25v1h-14.25zM314.95 225h14.25v1h-14.25zM400.45 207h14.25v1h-14.25zM313.65 258h14.25v3h-14.25zM384.9 255h14.25v3h-14.25zM127.2 284h14.25v3h-14.25zM339.75 298h14.25v2h-14.25zM438.5 317h14.25v1h-14.25zM366.25 349h14.25v1h-14.25zM407.3 390h14.25v1h-14.25zM435.8 392h14.25v1h-14.25zM219.75 466h14.25v1h-14.25z"/>
<path fill="#3f0060" d="M275.5 143h14.25v2h-14.25zM245.7 154h14.25v2h-14.25zM274.2 146h14.25v2h-14.25zM216.1 187h14.25v3h-14.25zM244.6 197h14.25v3h-14.25zM129.7 204h14.25v1h-14.25zM143.95 200h14.25v1h-14.25zM200.95 217h14.25v1h-14.25zM257.95 228h14.25v3h-14.25zM386.2 223h14.25v1h-14.25zM142.65 267h14.25v1h-14.25zM242.4 258h14.25v1h-14.25zM256.65 254h14.25v3h-14.25zM370.65 266h14.25v3h-14.25zM399.15 258h14.25v1h-14.25zM484.65 264h19.75v3h-19.75zM454.95 269h14.25v1h-14.25zM469.2 271h14.25v1h-14.25zM311.25 309h14.25v1h-14.25zM339.75 303h14.25v1h-14.25zM396.75 296h14.25v1h-14.25zM238 332h14.25v2h-14.25zM151.5 364h14.25v2h-14.25zM194.25 366h14.25v3h-14.25zM237 369h14.25v1h-14.25zM237 371h14.25v1h-14.25zM351 376h14.25v3h-14.25zM450.75 365h14.25v1h-14.25zM393.05 398h14.25v1h-14.25z"/>
<path fill="#4f0091" d="M289.75 116h14.25v1h-14.25zM289.75 119h14.25v1h-14.25zM289.75 122h14.25v2h-14.25zM418 112h14.25v1h-14.25zM487.95 149h19.75v2h-19.75zM216.1 185h14.25v1h-14.25zM230.35 190h14.25v1h-14.25zM129.7 231h14.25v1h-14.25zM215.2 206h14.25v2h-14.25zM215.2 208h14.25v2h-14.25zM215.2 228h14.25v2h-14.25zM243.7 203h14.25v2h-14.25zM300.7 207h14.25v1h-14.25zM300.7 216h14.25v1h-14.25zM357.7 225h14.25v1h-14.25zM400.45 200h14.25v3h-14.25zM400.45 208h14.25v3h-14.25zM213.9 240h14.25v2h-14.25zM242.4 259h14.25v2h-14.25zM384.9 267h14.25v1h-14.25zM399.15 234h14.25v1h-14.25zM484.65 253h19.75v2h-19.75zM155.7 278h14.25v1h-14.25zM226.95 277h14.25v3h-14.25zM312.45 270h14.25v1h-14.25zM383.7 269h14.25v2h-14.25zM211.5 300h14.25v3h-14.25zM297 304h14.25v1h-14.25zM396.75 290h14.25v1h-14.25zM439.5 300h14.25v1h-14.25zM182 330h14.25v1h-14.25zM195.25 345h14.25v2h-14.25zM209.5 340h14.25v2h-14.25zM309.25 350h14.25v2h-14.25zM222.75 375h14.25v1h-14.25zM408 376h14.25v2h-14.25zM222.05 383h14.25v2h-14.25zM364.55 380h14.25v2h-14.25zM421.55 391h14.25v2h-14.25zM450.05 396h14.25v3h-14.25zM334.75 426h14.25v1h-14.25zM234 435h14.25v2h-14.25zM262.5 464h14.25v1h-14.25z"/>
<path fill="#4d008b" d="M289.75 117h14.25v2h-14.25zM289.75 124h14.25v2h-14.25zM289.75 127h14.25v1h-14.25zM418 111h14.25v1h-14.25zM418 119h14.25v1h-14.25zM475 137h14.25v3h-14.25zM131.7 155h14.25v3h-14.25zM259.95 151h14.25v1h-14.25zM274.2 158h14.25v1h-14.25zM331.2 153h14.25v1h-14.25zM331.2 146h1v6h-1zM331.2 152h1v10h-1zM430.95 165h14.25v1h-14.25zM244.6 175h14.25v1h-14.25zM358.6 173h14.25v2h-14.25zM429.85 181h14.25v2h-14.25zM129.7 227h14.25v1h-14.25zM200.95 206h14.25v2h-14.25zM200.95 215h14.25v1h-14.25zM200.95 218h14.25v2h-14.25zM243.7 221h14.25v1h-14.25zM272.2 224h14.25v3h-14.25zM329.2 207h14.25v1h-14.25zM356.4 256h14.25v3h-14.25zM470.4 260h14.25v1h-14.25zM169.95 269h1v8h-1zM169.95 277h1v8h-1zM169.95 285h1v4h-1zM169.95 289h1v1h-1zM269.7 271h14.25v2h-14.25zM168.75 301h14.25v3h-14.25zM339.75 300h14.25v3h-14.25zM396.75 297h14.25v2h-14.25zM139.25 310h1v10h-1zM139.25 320h1v4h-1zM181 332h14.25v2h-14.25zM409 346h14.25v3h-14.25zM151.5 365h1v8h-1zM180 355h14.25v2h-14.25zM180 368h14.25v2h-14.25zM479.25 363h1v4h-1zM136.55 388h1v5h-1zM264.8 382h14.25v1h-14.25zM193.55 393h1v4h-1zM193.55 397h1v4h-1zM236.3 393h1v6h-1zM236.3 399h1v10h-1zM250.55 393h1v4h-1zM250.55 397h1v10h-1zM349 432h14.25v2h-14.25zM177 474h1v1h-1zM219.75 470h14.25v1h-14.25zM276.75 472h1v3h-1zM333.75 472h14.25v2h-14.25zM405 455h14.25v1h-14.25zM405 460h1v4h-1zM419.25 466h1v6h-1zM419.25 472h1v3h-1zM447.75 470h1v4h-1zM447.75 474h1v1h-1z"/>
<path fill="#4f0090" d="M289.75 121h14.25v1h-14.25zM318.25 145h14.25v1h-14.25zM418 114h14.25v2h-14.25zM418 122h14.25v3h-14.25zM489.25 143h19.75v1h-19.75zM274.2 162h14.25v1h-14.25zM401.35 189h14.25v2h-14.25zM415.6 183h14.25v3h-14.25zM215.2 211h14.25v1h-14.25zM371.95 218h14.25v1h-14.25zM386.2 219h14.25v1h-14.25zM386.2 224h14.25v3h-14.25zM213.9 252h14.25v1h-14.25zM256.65 244h14.25v1h-14.25zM427.65 235h14.25v3h-14.25zM456.15 256h14.25v1h-14.25zM340.95 277h14.25v2h-14.25zM454.95 284h14.25v1h-14.25zM469.2 282h14.25v2h-14.25zM168.75 308h14.25v1h-14.25zM311.25 303h14.25v3h-14.25zM396.75 294h14.25v2h-14.25zM439.5 291h14.25v1h-14.25zM181 334h14.25v3h-14.25zM423.25 354h14.25v1h-14.25zM379.5 362h14.25v1h-14.25zM393.75 373h14.25v1h-14.25zM250.55 387h14.25v1h-14.25zM179.3 411h14.25v3h-14.25zM276.75 463h14.25v3h-14.25z"/>
<path fill="#4d008c" d="M289.75 128h14.25v2h-14.25zM418 128h14.25v2h-14.25zM330.1 184h14.25v1h-14.25zM486.85 180h19.75v1h-19.75zM272.2 222h14.25v2h-14.25zM470.4 258h14.25v1h-14.25zM397.95 284h14.25v2h-14.25zM207.8 392h14.25v1h-14.25z"/>
<path fill="#300038" d="M289.75 131h14.25v2h-14.25zM389.5 133h14.25v1h-14.25zM418 132h14.25v2h-14.25zM130.6 194h14.25v2h-14.25zM471.7 222h14.25v1h-14.25zM128.4 245h14.25v1h-14.25zM285.15 247h14.25v2h-14.25zM450.75 366h14.25v1h-14.25zM165.05 391h14.25v2h-14.25zM276.75 451h14.25v2h-14.25z"/>
<path fill="#4b0083" d="M289.75 142h14.25v1h-14.25zM244.6 190h14.25v1h-14.25zM273.1 169h14.25v3h-14.25zM486.85 184h19.75v2h-19.75zM286.45 202h14.25v1h-14.25zM371.95 223h14.25v2h-14.25zM443.2 200h14.25v1h-14.25zM128.4 254h14.25v3h-14.25zM142.65 250h14.25v1h-14.25zM171.15 252h14.25v1h-14.25zM256.65 258h14.25v2h-14.25zM270.9 257h14.25v1h-14.25zM441.9 267h14.25v2h-14.25zM141.45 285h14.25v1h-14.25zM212.7 278h14.25v2h-14.25zM340.95 269h14.25v2h-14.25zM340.95 271h14.25v2h-14.25zM383.7 288h14.25v2h-14.25zM412.2 278h14.25v2h-14.25zM469.2 275h14.25v1h-14.25zM268.5 306h14.25v2h-14.25zM325.5 297h14.25v1h-14.25zM453.75 296h14.25v2h-14.25zM468 303h14.25v2h-14.25zM153.5 310h14.25v3h-14.25zM253.25 311h14.25v2h-14.25zM438.5 327h14.25v2h-14.25zM195.25 332h14.25v2h-14.25zM393.75 364h14.25v1h-14.25zM393.75 365h14.25v1h-14.25zM193.55 385h14.25v2h-14.25zM222.05 386h14.25v2h-14.25zM264.8 386h14.25v2h-14.25zM279.05 380h14.25v1h-14.25zM192.25 430h14.25v2h-14.25z"/>
<path fill="#52009a" d="M289.75 143h14.25v1h-14.25zM304 137h14.25v1h-14.25zM316.95 165h14.25v1h-14.25zM473.7 163h14.25v2h-14.25zM201.85 177h14.25v3h-14.25zM230.35 188h14.25v2h-14.25zM273.1 190h14.25v2h-14.25zM472.6 177h14.25v2h-14.25zM200.95 211h14.25v1h-14.25zM215.2 230h14.25v1h-14.25zM229.45 228h14.25v1h-14.25zM272.2 212h14.25v2h-14.25zM386.2 212h14.25v2h-14.25zM142.65 254h14.25v1h-14.25zM185.4 232h14.25v2h-14.25zM185.4 240h14.25v1h-14.25zM370.65 245h14.25v2h-14.25zM384.9 268h14.25v1h-14.25zM383.7 275h14.25v2h-14.25zM469.2 285h14.25v1h-14.25zM154.5 290h14.25v1h-14.25zM354 295h14.25v2h-14.25zM125 324h14.25v2h-14.25zM167.75 312h14.25v1h-14.25zM209.5 342h14.25v1h-14.25zM223.75 337h14.25v1h-14.25zM237 364h14.25v2h-14.25zM308.25 355h14.25v2h-14.25zM122.3 394h14.25v2h-14.25zM405 453h14.25v1h-14.25z"/>
<path fill="#53009e" d="M289.75 144h14.25v1h-14.25zM403.75 140h14.25v1h-14.25zM403.75 141h14.25v2h-14.25zM217.2 165h14.25v1h-14.25zM302.7 150h14.25v3h-14.25zM316.95 164h14.25v1h-14.25zM473.7 165h14.25v1h-14.25zM258.85 192h14.25v3h-14.25zM301.6 178h14.25v1h-14.25zM330.1 185h14.25v3h-14.25zM372.85 167h14.25v3h-14.25zM387.1 197h14.25v1h-14.25zM401.35 196h14.25v1h-14.25zM415.6 193h14.25v1h-14.25zM172.45 231h14.25v1h-14.25zM215.2 203h14.25v1h-14.25zM215.2 225h14.25v1h-14.25zM215.2 231h14.25v1h-14.25zM272.2 204h14.25v1h-14.25zM300.7 206h14.25v1h-14.25zM371.95 219h14.25v1h-14.25zM386.2 215h14.25v1h-14.25zM142.65 268h14.25v1h-14.25zM399.15 261h14.25v1h-14.25zM155.7 277h14.25v1h-14.25zM198.45 286h14.25v3h-14.25zM255.45 273h14.25v1h-14.25zM255.45 280h14.25v1h-14.25zM326.7 280h14.25v1h-14.25zM426.45 286h14.25v2h-14.25zM483.45 269h19.75v1h-19.75zM368.25 301h14.25v3h-14.25zM382.5 295h14.25v1h-14.25zM468 307h14.25v2h-14.25zM252.25 337h14.25v3h-14.25zM350.3 387h14.25v1h-14.25zM450.05 386h14.25v1h-14.25zM464.3 389h14.25v1h-14.25zM191.25 464h14.25v2h-14.25z"/>
<path fill="#350043" d="M289.75 145h14.25v1h-14.25zM432.25 145h14.25v1h-14.25zM169.95 286h14.25v1h-14.25zM453.75 300h14.25v1h-14.25zM264.8 395h14.25v3h-14.25z"/>
<path fill="#5700ab" d="M304 111h14.25v2h-14.25zM318.25 130h14.25v2h-14.25zM375.25 121h14.25v2h-14.25zM432.25 136h14.25v2h-14.25zM288.45 148h14.25v1h-14.25zM473.7 146h14.25v1h-14.25zM473.7 153h14.25v1h-14.25zM187.6 166h14.25v1h-14.25zM201.85 180h14.25v1h-14.25zM216.1 195h14.25v2h-14.25zM230.35 166h14.25v2h-14.25zM287.35 167h14.25v1h-14.25zM287.35 189h14.25v2h-14.25zM301.6 198h14.25v1h-14.25zM387.1 182h14.25v1h-14.25zM215.2 202h14.25v1h-14.25zM243.7 207h14.25v1h-14.25zM300.7 210h14.25v1h-14.25zM443.2 204h14.25v1h-14.25zM399.15 253h14.25v2h-14.25zM154.5 291h14.25v1h-14.25zM197.25 301h14.25v1h-14.25zM425.25 292h14.25v3h-14.25zM466 353h14.25v2h-14.25zM294 377h14.25v2h-14.25zM308.25 363h14.25v1h-14.25zM436.5 364h14.25v1h-14.25zM407.3 391h14.25v1h-14.25zM478.55 412h14.25v2h-14.25z"/>
<path fill="#5900b1" d="M304 113h14.25v2h-14.25zM304 116h14.25v1h-14.25zM304 121h14.25v1h-14.25zM375.25 111h14.25v1h-14.25zM375.25 115h14.25v3h-14.25zM416.7 165h14.25v1h-14.25zM187.6 193h14.25v2h-14.25zM287.35 197h14.25v1h-14.25zM415.6 174h14.25v1h-14.25zM415.6 196h14.25v3h-14.25zM342.15 243h14.25v2h-14.25zM413.4 238h14.25v3h-14.25zM470.4 261h14.25v3h-14.25zM426.45 288h14.25v2h-14.25zM440.7 279h14.25v2h-14.25zM195.25 348h14.25v2h-14.25zM394.75 349h14.25v2h-14.25zM178 433h14.25v1h-14.25z"/>
<path fill="#5800ad" d="M304 115h14.25v1h-14.25zM375.25 112h14.25v3h-14.25zM245.7 163h14.25v2h-14.25zM187.6 196h14.25v3h-14.25zM230.35 182h14.25v1h-14.25zM315.85 184h14.25v1h-14.25zM429.85 166h14.25v1h-14.25zM215.2 210h14.25v1h-14.25zM300.7 214h14.25v2h-14.25zM314.95 212h14.25v1h-14.25zM400.45 223h14.25v2h-14.25zM443.2 226h14.25v1h-14.25zM313.65 261h14.25v1h-14.25zM355.2 277h14.25v1h-14.25zM237 359h14.25v1h-14.25z"/>
<path fill="#5900b0" d="M304 117h14.25v1h-14.25zM375.25 125h14.25v1h-14.25zM473.7 160h14.25v1h-14.25zM187.6 173h14.25v2h-14.25zM273.1 180h14.25v2h-14.25zM458.35 174h14.25v1h-14.25zM200.95 213h14.25v1h-14.25zM428.95 202h14.25v1h-14.25zM242.4 252h14.25v1h-14.25zM342.15 233h14.25v3h-14.25zM342.15 248h14.25v3h-14.25zM370.65 253h14.25v2h-14.25zM484.65 257h19.75v3h-19.75zM312.45 279h14.25v2h-14.25zM140.25 290h14.25v1h-14.25zM324.5 310h14.25v1h-14.25zM238 339h14.25v2h-14.25zM280.75 332h14.25v2h-14.25zM378.8 384h14.25v2h-14.25zM376.5 457h14.25v1h-14.25zM476.25 444h14.25v2h-14.25z"/>
<path fill="#5800ac" d="M304 118h14.25v1h-14.25zM304 120h14.25v1h-14.25zM375.25 118h14.25v2h-14.25zM375.25 124h14.25v1h-14.25zM359.7 160h14.25v1h-14.25zM187.6 168h14.25v2h-14.25zM301.6 181h14.25v3h-14.25zM315.85 181h14.25v2h-14.25zM401.35 177h14.25v2h-14.25zM472.6 192h14.25v1h-14.25zM243.7 206h14.25v1h-14.25zM314.95 224h14.25v1h-14.25zM400.45 225h14.25v2h-14.25zM213.9 242h14.25v1h-14.25zM154.5 299h14.25v1h-14.25zM238 351h14.25v2h-14.25zM252.25 336h14.25v1h-14.25zM279.75 377h14.25v3h-14.25zM308.25 370h14.25v1h-14.25z"/>
<path fill="#5800ae" d="M304 119h14.25v1h-14.25zM304 124h14.25v3h-14.25zM375.25 120h14.25v1h-14.25zM375.25 123h14.25v1h-14.25zM202.95 150h14.25v2h-14.25zM202.95 161h14.25v3h-14.25zM416.7 154h14.25v2h-14.25zM230.35 168h14.25v1h-14.25zM230.35 177h14.25v1h-14.25zM472.6 172h14.25v2h-14.25zM386.2 200h14.25v3h-14.25zM171.15 254h14.25v3h-14.25zM228.15 233h14.25v2h-14.25zM399.15 256h14.25v1h-14.25zM425.25 300h14.25v1h-14.25zM439.5 292h14.25v2h-14.25zM223.75 349h14.25v1h-14.25zM251.25 363h14.25v1h-14.25zM279.05 389h14.25v1h-14.25zM464.3 400h14.25v3h-14.25z"/>
<path fill="#5900b2" d="M304 122h14.25v2h-14.25zM416.7 150h14.25v1h-14.25zM200.95 216h14.25v1h-14.25zM428.95 208h14.25v2h-14.25zM324.5 316h14.25v2h-14.25zM238 348h14.25v1h-14.25zM180 365h14.25v1h-14.25zM322.5 363h14.25v1h-14.25zM179.3 402h14.25v3h-14.25zM149.5 420h14.25v1h-14.25zM120 451h14.25v1h-14.25zM234 440h14.25v2h-14.25z"/>
<path fill="#5800af" d="M304 127h14.25v2h-14.25zM375.25 126h14.25v2h-14.25zM302.7 162h14.25v1h-14.25zM230.35 171h14.25v2h-14.25zM315.85 179h14.25v2h-14.25zM315.85 192h14.25v3h-14.25zM387.1 187h14.25v2h-14.25zM371.95 206h14.25v2h-14.25zM400.45 212h14.25v1h-14.25zM313.65 244h14.25v3h-14.25zM312.45 276h14.25v2h-14.25zM282.75 290h14.25v1h-14.25zM267.5 312h14.25v3h-14.25zM265.5 375h14.25v2h-14.25zM294 379h14.25v1h-14.25zM122.3 390h14.25v1h-14.25zM279.05 401h14.25v3h-14.25zM307.55 399h14.25v2h-14.25z"/>
<path fill="#54009f" d="M304 129h14.25v3h-14.25zM258.85 178h14.25v2h-14.25zM258.85 199h14.25v1h-14.25zM143.95 219h14.25v2h-14.25zM142.65 259h14.25v1h-14.25zM299.4 232h14.25v1h-14.25zM426.45 273h14.25v2h-14.25zM266.5 353h14.25v1h-14.25zM350.3 391h14.25v2h-14.25zM477.25 427h14.25v3h-14.25z"/>
<path fill="#510098" d="M304 135h14.25v1h-14.25zM361 114h14.25v1h-14.25zM361 119h14.25v3h-14.25zM403.75 117h14.25v2h-14.25zM403.75 128h14.25v3h-14.25zM432.25 138h14.25v1h-14.25zM274.2 148h14.25v3h-14.25zM473.7 147h14.25v2h-14.25zM173.35 176h14.25v3h-14.25zM258.85 186h14.25v3h-14.25zM387.1 186h14.25v1h-14.25zM401.35 185h14.25v2h-14.25zM415.6 166h14.25v1h-14.25zM472.6 194h14.25v3h-14.25zM200.95 221h14.25v1h-14.25zM257.95 203h14.25v2h-14.25zM272.2 208h14.25v2h-14.25zM314.95 209h14.25v1h-14.25zM329.2 225h14.25v3h-14.25zM414.7 209h14.25v1h-14.25zM414.7 210h14.25v2h-14.25zM142.65 251h14.25v2h-14.25zM370.65 236h14.25v1h-14.25zM155.7 272h14.25v2h-14.25zM283.95 276h14.25v3h-14.25zM355.2 285h14.25v1h-14.25zM297 290h14.25v1h-14.25zM182 331h14.25v1h-14.25zM210.5 328h14.25v1h-14.25zM210.5 330h14.25v1h-14.25zM394.75 351h14.25v2h-14.25zM208.5 365h14.25v1h-14.25zM393.75 372h14.25v1h-14.25zM408 361h14.25v1h-14.25zM136.55 380h14.25v3h-14.25zM165.05 394h14.25v2h-14.25zM407.3 408h14.25v2h-14.25zM234 456h14.25v2h-14.25zM476.25 465h14.25v1h-14.25z"/>
<path fill="#6501d4" d="M304 136h14.25v1h-14.25zM231.45 160h14.25v3h-14.25zM388.2 154h14.25v2h-14.25zM428.95 222h14.25v2h-14.25zM370.65 234h14.25v2h-14.25zM241.2 286h14.25v2h-14.25zM223.75 332h14.25v1h-14.25zM279.05 404h14.25v2h-14.25zM407.3 400h14.25v1h-14.25zM507.05 393h3.95v3h-3.95zM192.25 422h14.25v1h-14.25zM292 421h14.25v1h-14.25zM292 428h14.25v2h-14.25zM219.75 452h14.25v2h-14.25zM333.75 436h14.25v2h-14.25z"/>
<path fill="#43006d" d="M304 138h14.25v1h-14.25zM430.95 146h14.25v3h-14.25zM144.85 177h14.25v1h-14.25zM159.1 176h14.25v1h-14.25zM129.7 210h14.25v3h-14.25zM143.95 226h14.25v1h-14.25zM285.15 252h14.25v1h-14.25zM237 363h14.25v1h-14.25zM379.5 365h14.25v2h-14.25zM435.8 385h14.25v1h-14.25z"/>
<path fill="#39004e" d="M304 143h14.25v1h-14.25zM159.1 199h14.25v1h-14.25zM201.85 174h14.25v1h-14.25zM201.85 186h14.25v2h-14.25zM344.35 175h14.25v1h-14.25zM387.1 189h14.25v1h-14.25zM343.45 215h14.25v1h-14.25zM485.95 215h19.75v1h-19.75zM384.9 241h14.25v3h-14.25zM255.45 275h14.25v2h-14.25zM454.95 278h14.25v1h-14.25zM454.95 285h14.25v2h-14.25zM354 301h14.25v3h-14.25zM481.25 310h19.75v1h-19.75zM194.25 379h14.25v1h-14.25zM251.25 362h14.25v1h-14.25zM364.55 386h14.25v1h-14.25zM376.5 466h14.25v2h-14.25z"/>
<path fill="#5700aa" d="M304 144h14.25v1h-14.25zM446.5 138h14.25v2h-14.25zM216.1 166h14.25v2h-14.25zM230.35 194h14.25v3h-14.25zM244.6 194h14.25v2h-14.25zM372.85 187h14.25v1h-14.25zM472.6 193h14.25v1h-14.25zM357.7 203h14.25v2h-14.25zM457.45 223h14.25v1h-14.25zM128.4 267h14.25v1h-14.25zM299.4 258h14.25v1h-14.25zM313.65 265h14.25v1h-14.25zM441.9 241h14.25v3h-14.25zM397.95 270h14.25v1h-14.25zM469.2 276h14.25v1h-14.25zM223.75 350h14.25v2h-14.25zM464.3 381h14.25v1h-14.25zM220.75 433h14.25v1h-14.25zM277.75 416h14.25v2h-14.25zM376.5 468h14.25v1h-14.25z"/>
<path fill="#7903fb" d="M318.25 122h14.25v2h-14.25zM162.75 441h14.25v3h-14.25z"/>
<path fill="#410064" d="M318.25 134h14.25v1h-14.25zM130.6 183h14.25v2h-14.25zM130.6 190h14.25v2h-14.25zM173.35 172h14.25v2h-14.25zM173.35 195h14.25v2h-14.25zM187.6 179h14.25v1h-14.25zM216.1 169h14.25v3h-14.25zM344.35 186h14.25v3h-14.25zM387.1 198h14.25v1h-14.25zM401.35 187h14.25v1h-14.25zM199.65 253h14.25v2h-14.25zM213.9 257h14.25v1h-14.25zM355.2 286h14.25v2h-14.25zM167.75 313h14.25v3h-14.25zM167.75 322h14.25v3h-14.25zM238 343h14.25v1h-14.25zM450.75 376h14.25v2h-14.25zM307.55 390h14.25v1h-14.25z"/>
<path fill="#4c0089" d="M318.25 135h14.25v2h-14.25zM181 337h14.25v1h-14.25zM334.75 427h14.25v1h-14.25z"/>
<path fill="#39004f" d="M318.25 138h14.25v1h-14.25zM432.25 141h14.25v2h-14.25zM174.45 152h14.25v3h-14.25zM288.45 149h14.25v2h-14.25zM159.1 172h14.25v3h-14.25zM401.35 183h14.25v1h-14.25zM429.85 175h14.25v2h-14.25zM472.6 168h14.25v1h-14.25zM158.2 207h14.25v3h-14.25zM443.2 215h14.25v1h-14.25zM213.9 235h14.25v1h-14.25zM255.45 272h14.25v1h-14.25zM283.95 270h14.25v3h-14.25zM283.95 273h14.25v2h-14.25zM325.5 301h14.25v1h-14.25zM452.75 320h14.25v1h-14.25zM194.25 377h14.25v2h-14.25zM321.8 391h14.25v1h-14.25zM179.3 398h14.25v1h-14.25zM364.55 401h14.25v1h-14.25z"/>
<path fill="#5c01bb" d="M318.25 139h14.25v2h-14.25zM188.7 164h14.25v2h-14.25zM331.2 163h14.25v1h-14.25zM402.45 147h14.25v1h-14.25zM187.6 195h14.25v1h-14.25zM357.7 231h14.25v1h-14.25zM270.9 232h14.25v1h-14.25zM255.45 284h14.25v2h-14.25zM268.5 295h14.25v1h-14.25zM382.5 296h14.25v1h-14.25zM382.5 297h14.25v2h-14.25zM251.25 371h14.25v2h-14.25zM279.75 372h14.25v2h-14.25zM421.55 400h14.25v3h-14.25zM492.8 406h14.25v1h-14.25zM135.25 414h14.25v1h-14.25z"/>
<path fill="#3f0061" d="M332.5 133h14.25v1h-14.25zM244.6 177h14.25v1h-14.25zM440.7 272h14.25v1h-14.25zM209.5 349h14.25v2h-14.25zM366.25 339h14.25v1h-14.25zM222.75 367h14.25v1h-14.25zM136.55 394h14.25v2h-14.25z"/>
<path fill="#3e005b" d="M332.5 135h14.25v3h-14.25zM330.1 174h14.25v1h-14.25zM427.65 253h14.25v3h-14.25zM452.75 312h14.25v2h-14.25zM209.5 348h14.25v1h-14.25zM409 349h14.25v1h-14.25zM150.8 393h14.25v3h-14.25zM236.3 400h14.25v3h-14.25zM264.8 394h14.25v1h-14.25zM291 473h14.25v2h-14.25z"/>
<path fill="#340042" d="M332.5 140h14.25v1h-14.25zM131.7 160h14.25v1h-14.25zM345.45 163h14.25v1h-14.25zM359.7 150h14.25v2h-14.25zM244.6 185h14.25v2h-14.25zM458.35 197h14.25v1h-14.25zM186.7 211h14.25v1h-14.25zM242.4 250h14.25v2h-14.25zM155.7 289h14.25v1h-14.25zM212.7 271h14.25v2h-14.25zM340.95 283h14.25v1h-14.25zM355.2 280h14.25v1h-14.25zM168.75 304h14.25v2h-14.25zM453.75 293h14.25v1h-14.25zM367.25 331h14.25v1h-14.25zM422.25 375h14.25v2h-14.25zM479.25 369h19.75v1h-19.75zM179.3 391h14.25v1h-14.25z"/>
<path fill="#2b002d" d="M332.5 141h14.25v1h-14.25zM331.2 158h14.25v2h-14.25zM169.95 285h14.25v1h-14.25zM139.25 315h14.25v2h-14.25zM452.75 311h14.25v1h-14.25zM452.75 328h14.25v1h-14.25z"/>
<path fill="#400064" d="M332.5 142h14.25v1h-14.25zM346.75 134h14.25v2h-14.25zM131.7 149h14.25v1h-14.25zM473.7 157h14.25v1h-14.25zM173.35 174h14.25v1h-14.25zM198.45 284h14.25v2h-14.25zM297 309h14.25v1h-14.25zM311.25 306h14.25v1h-14.25zM139.25 322h14.25v1h-14.25zM223.75 352h14.25v2h-14.25z"/>
<path fill="#360046" d="M332.5 143h14.25v2h-14.25zM245.7 146h1v8h-1zM245.7 158h1v8h-1zM445.2 148h14.25v2h-14.25zM287.35 166h1v8h-1zM287.35 174h1v8h-1zM287.35 182h1v4h-1zM287.35 186h1v8h-1zM287.35 194h1v4h-1zM287.35 198h1v2h-1zM344.35 184h14.25v2h-14.25zM429.85 178h14.25v2h-14.25zM257.95 219h14.25v1h-14.25zM343.45 213h14.25v2h-14.25zM457.45 200h1v10h-1zM457.45 210h1v4h-1zM457.45 214h1v8h-1zM457.45 222h1v6h-1zM313.65 267h14.25v1h-14.25zM155.7 289h1v1h-1zM212.7 282h14.25v2h-14.25zM212.7 269h1v8h-1zM212.7 277h1v10h-1zM298.2 269h14.25v2h-14.25zM126 303h14.25v1h-14.25zM140.25 290h1v10h-1zM140.25 300h1v6h-1zM140.25 306h1v4h-1zM453.75 290h1v10h-1zM453.75 300h1v8h-1zM453.75 308h1v2h-1zM481.25 327h19.75v2h-19.75zM181 341h14.25v3h-14.25zM366.25 340h14.25v2h-14.25zM222.05 392h1v1h-1zM222.05 393h1v6h-1zM222.05 399h1v4h-1zM421.55 393h1v10h-1zM134.25 474h14.25v1h-14.25zM490.5 464h1v4h-1zM490.5 468h1v6h-1zM490.5 474h1v1h-1zM504.75 467h6.25v1h-6.25z"/>
<path fill="#4a0080" d="M332.5 145h14.25v1h-14.25zM418 130h14.25v2h-14.25zM418 134h14.25v2h-14.25zM288.45 156h14.25v1h-14.25zM359.7 161h14.25v1h-14.25zM458.35 175h14.25v2h-14.25zM172.45 204h14.25v1h-14.25zM243.7 229h14.25v1h-14.25zM212.7 273h14.25v2h-14.25zM426.45 270h14.25v1h-14.25zM140.25 299h14.25v3h-14.25zM268.5 299h14.25v1h-14.25zM181 338h14.25v1h-14.25zM238 354h14.25v1h-14.25zM366.25 354h14.25v1h-14.25zM393.75 378h14.25v2h-14.25zM422.25 367h14.25v1h-14.25zM421.55 382h14.25v2h-14.25zM490.5 469h14.25v1h-14.25z"/>
<path fill="#49007d" d="M346.75 132h14.25v1h-14.25zM160.2 163h14.25v1h-14.25zM345.45 164h14.25v2h-14.25zM445.2 150h14.25v3h-14.25zM187.6 172h14.25v1h-14.25zM187.6 186h14.25v2h-14.25zM444.1 187h14.25v1h-14.25zM458.35 194h14.25v3h-14.25zM243.7 209h14.25v1h-14.25zM443.2 210h14.25v3h-14.25zM326.7 279h14.25v1h-14.25zM426.45 282h14.25v1h-14.25zM126 300h14.25v3h-14.25zM154.5 305h14.25v2h-14.25zM282.75 302h14.25v2h-14.25zM282.75 306h14.25v1h-14.25zM409 351h14.25v1h-14.25zM393.75 359h14.25v1h-14.25zM422.25 374h14.25v1h-14.25zM378.8 389h14.25v3h-14.25zM307.55 407h14.25v2h-14.25zM378.8 401h14.25v3h-14.25zM120 472h14.25v2h-14.25zM490.5 465h14.25v1h-14.25z"/>
<path fill="#480079" d="M346.75 136h14.25v3h-14.25zM245.7 160h14.25v2h-14.25zM144.85 190h14.25v2h-14.25zM173.35 185h14.25v2h-14.25zM201.85 198h14.25v1h-14.25zM444.1 193h14.25v3h-14.25zM485.95 224h19.75v1h-19.75zM156.9 257h14.25v1h-14.25zM212.7 276h14.25v2h-14.25zM326.7 269h14.25v3h-14.25zM469.2 284h14.25v1h-14.25zM324.5 314h14.25v2h-14.25zM507.05 405h3.95v2h-3.95z"/>
<path fill="#32003d" d="M346.75 140h14.25v1h-14.25zM144.85 192h14.25v1h-14.25zM172.45 209h14.25v1h-14.25zM242.4 262h14.25v2h-14.25zM365.25 355h14.25v2h-14.25zM193.55 389h14.25v1h-14.25zM435.8 383h14.25v2h-14.25zM393.05 399h14.25v3h-14.25z"/>
<path fill="#470077" d="M346.75 141h14.25v1h-14.25zM174.45 155h14.25v3h-14.25zM359.7 163h14.25v1h-14.25zM359.7 165h14.25v1h-14.25zM388.2 146h14.25v2h-14.25zM459.45 146h14.25v1h-14.25zM159.1 169h14.25v1h-14.25zM173.35 179h14.25v3h-14.25zM287.35 195h14.25v1h-14.25zM358.6 195h14.25v2h-14.25zM401.35 197h14.25v1h-14.25zM215.2 219h14.25v2h-14.25zM485.95 205h19.75v1h-19.75zM285.15 232h14.25v3h-14.25zM313.65 266h14.25v1h-14.25zM354 290h14.25v3h-14.25zM324.5 320h14.25v1h-14.25zM252.25 346h14.25v3h-14.25zM409 353h14.25v1h-14.25zM137.25 361h14.25v3h-14.25zM293.3 383h14.25v1h-14.25zM179.3 399h14.25v1h-14.25zM207.8 399h14.25v2h-14.25zM222.05 401h14.25v1h-14.25zM378.8 400h14.25v1h-14.25zM376.5 465h14.25v1h-14.25z"/>
<path fill="#37004a" d="M346.75 144h14.25v2h-14.25zM403.75 143h14.25v2h-14.25zM418 139h14.25v1h-14.25zM231.45 150h14.25v1h-14.25zM288.45 153h14.25v1h-14.25zM288.45 160h14.25v1h-14.25zM159.1 171h14.25v1h-14.25zM415.6 168h14.25v1h-14.25zM486.85 170h19.75v2h-19.75zM129.7 203h14.25v1h-14.25zM143.95 205h14.25v2h-14.25zM186.7 217h14.25v3h-14.25zM200.95 214h14.25v1h-14.25zM471.7 212h14.25v2h-14.25zM171.15 244h14.25v1h-14.25zM213.9 259h14.25v1h-14.25zM355.2 274h14.25v1h-14.25zM397.95 280h14.25v1h-14.25zM125 310h14.25v1h-14.25zM452.75 314h14.25v3h-14.25zM208.5 363h14.25v1h-14.25zM264.8 389h14.25v1h-14.25zM321.8 392h14.25v1h-14.25zM405 462h14.25v1h-14.25zM447.75 472h14.25v1h-14.25z"/>
<path fill="#4f0092" d="M361 115h14.25v2h-14.25zM489.25 139h19.75v3h-19.75zM273.1 192h14.25v1h-14.25zM387.1 199h14.25v1h-14.25zM415.6 170h14.25v1h-14.25zM215.2 226h14.25v2h-14.25zM314.95 201h14.25v3h-14.25zM142.65 255h14.25v3h-14.25zM199.65 245h14.25v2h-14.25zM228.15 254h14.25v1h-14.25zM228.15 260h14.25v1h-14.25zM299.4 248h14.25v2h-14.25zM370.65 249h14.25v1h-14.25zM384.9 244h14.25v2h-14.25zM384.9 264h14.25v3h-14.25zM399.15 232h14.25v2h-14.25zM399.15 236h14.25v3h-14.25zM212.7 287h14.25v2h-14.25zM312.45 288h14.25v1h-14.25zM440.7 286h14.25v3h-14.25zM167.75 319h14.25v3h-14.25zM309.25 337h14.25v2h-14.25zM222.75 371h14.25v2h-14.25zM294 362h14.25v1h-14.25zM294 370h14.25v1h-14.25zM293.3 380h14.25v2h-14.25z"/>
<path fill="#500094" d="M361 117h14.25v2h-14.25zM361 125h14.25v1h-14.25zM403.75 111h14.25v1h-14.25zM288.45 163h14.25v1h-14.25zM373.95 162h14.25v3h-14.25zM416.7 147h14.25v1h-14.25zM216.1 186h14.25v1h-14.25zM273.1 196h14.25v1h-14.25zM287.35 184h14.25v3h-14.25zM200.95 203h14.25v1h-14.25zM357.7 217h14.25v1h-14.25zM400.45 216h14.25v3h-14.25zM414.7 223h14.25v1h-14.25zM128.4 242h14.25v2h-14.25zM185.4 242h14.25v1h-14.25zM384.9 237h14.25v2h-14.25zM413.4 232h14.25v1h-14.25zM484.65 249h19.75v1h-19.75zM484.65 262h19.75v1h-19.75zM298.2 281h14.25v2h-14.25zM340.95 280h14.25v1h-14.25zM383.7 283h14.25v2h-14.25zM469.2 288h14.25v1h-14.25zM282.75 307h14.25v1h-14.25zM468 297h14.25v1h-14.25zM295 346h14.25v1h-14.25zM394.75 353h14.25v2h-14.25zM423.25 349h14.25v2h-14.25zM308.25 371h14.25v2h-14.25zM307.55 383h14.25v2h-14.25zM307.55 386h14.25v3h-14.25zM378.8 396h14.25v3h-14.25zM507.05 397h3.95v1h-3.95zM320.5 432h14.25v1h-14.25z"/>
<path fill="#500092" d="M361 123h14.25v2h-14.25zM361 126h14.25v3h-14.25zM231.45 148h14.25v1h-14.25zM242.4 241h14.25v2h-14.25zM313.65 247h14.25v1h-14.25zM312.45 289h14.25v1h-14.25zM223.75 347h14.25v2h-14.25zM307.55 389h14.25v1h-14.25zM377.5 417h14.25v2h-14.25z"/>
<path fill="#7e04ff" d="M361 131h14.25v1h-14.25zM361 134h14.25v3h-14.25zM188.7 160h14.25v1h-14.25zM259.95 146h1v10h-1zM259.95 156h1v4h-1zM259.95 160h1v6h-1zM316.95 146h1v8h-1zM316.95 154h1v8h-1zM327.9 236h14.25v1h-14.25zM342.15 262h14.25v2h-14.25zM427.65 232h1v4h-1zM427.65 236h1v6h-1zM427.65 242h1v4h-1zM470.4 232h1v6h-1zM470.4 238h1v10h-1zM470.4 248h1v8h-1zM466 351h14.25v2h-14.25zM322.5 377h14.25v1h-14.25zM351 358h14.25v2h-14.25zM179.3 380h1v4h-1zM179.3 384h1v4h-1zM478.55 380h1v4h-1zM478.55 384h1v4h-1zM478.55 388h1v5h-1zM279.05 403h1v4h-1zM279.05 407h1v6h-1zM378.8 409h14.25v1h-14.25zM407.3 409h1v5h-1zM135.25 415h14.25v2h-14.25zM135.25 425h14.25v1h-14.25zM249.25 420h14.25v2h-14.25zM377.5 415h14.25v2h-14.25zM420.25 426h14.25v2h-14.25zM120 469h14.25v1h-14.25zM162.75 435h14.25v1h-14.25zM162.75 436h14.25v1h-14.25zM162.75 444h14.25v2h-14.25zM205.5 448h14.25v2h-14.25zM219.75 456h14.25v2h-14.25zM234 451h14.25v1h-14.25zM305.25 456h14.25v2h-14.25zM305.25 466h1v8h-1zM305.25 474h1v1h-1zM333.75 474h14.25v1h-14.25zM376.5 441h14.25v3h-14.25zM376.5 445h14.25v1h-14.25zM419.25 445h14.25v1h-14.25zM419.25 454h1v8h-1zM419.25 462h1v4h-1z"/>
<path fill="#a61473" d="M361 141h14.25v2h-14.25zM153.5 323h14.25v1h-14.25zM437.5 343h14.25v1h-14.25zM350.3 382h14.25v3h-14.25zM291 468h14.25v1h-14.25zM490.5 436h14.25v2h-14.25z"/>
<path fill="#5700ac" d="M375.25 128h14.25v1h-14.25zM331.2 162h1v4h-1zM330.1 166h1v6h-1zM330.1 172h1v6h-1zM330.1 178h1v4h-1zM330.1 182h1v6h-1zM330.1 188h1v8h-1zM358.6 166h1v4h-1zM358.6 170h1v10h-1zM358.6 180h1v8h-1zM358.6 188h1v4h-1zM358.6 192h1v8h-1zM400.45 227h14.25v1h-14.25zM313.65 236h14.25v1h-14.25zM427.65 262h14.25v2h-14.25zM441.9 257h14.25v1h-14.25zM470.4 256h1v4h-1zM470.4 260h1v8h-1zM470.4 268h1v1h-1zM253.25 329h14.25v2h-14.25zM238 350h14.25v1h-14.25zM266.5 335h14.25v1h-14.25zM266.5 340h14.25v2h-14.25z"/>
<path fill="#49007f" d="M375.25 129h14.25v2h-14.25zM418 138h14.25v1h-14.25zM458.35 190h14.25v1h-14.25zM470.4 264h14.25v1h-14.25zM181 344h14.25v2h-14.25zM193.55 383h14.25v1h-14.25zM193.55 396h14.25v1h-14.25zM264.8 399h14.25v3h-14.25z"/>
<path fill="#2f0037" d="M375.25 131h14.25v1h-14.25zM160.2 153h14.25v3h-14.25zM445.2 147h14.25v1h-14.25zM353 323h14.25v3h-14.25zM438.5 314h14.25v2h-14.25zM222.05 390h14.25v2h-14.25zM321.8 395h14.25v3h-14.25z"/>
<path fill="#4c0087" d="M375.25 132h14.25v1h-14.25zM444.1 185h14.25v2h-14.25zM200.95 204h14.25v1h-14.25zM200.95 226h14.25v2h-14.25zM286.45 201h14.25v1h-14.25zM371.95 231h14.25v1h-14.25zM428.95 228h14.25v3h-14.25zM485.95 213h19.75v2h-19.75zM485.95 227h19.75v2h-19.75zM270.9 240h14.25v1h-14.25zM270.9 262h14.25v3h-14.25zM270.9 267h14.25v1h-14.25zM369.45 276h14.25v1h-14.25zM412.2 283h14.25v1h-14.25zM311.25 307h14.25v2h-14.25zM310.25 313h14.25v3h-14.25zM481.25 315h19.75v3h-19.75zM151.5 370h14.25v2h-14.25zM194.25 362h14.25v1h-14.25zM122.3 386h14.25v3h-14.25zM250.55 388h14.25v1h-14.25zM236.3 393h14.25v1h-14.25z"/>
<path fill="#31003a" d="M375.25 145h14.25v1h-14.25zM159.1 195h14.25v1h-14.25zM471.7 215h14.25v1h-14.25zM326.7 275h14.25v1h-14.25zM125 319h14.25v2h-14.25zM436.5 369h14.25v1h-14.25zM150.8 392h14.25v1h-14.25zM193.55 380h14.25v1h-14.25zM490.5 471h14.25v1h-14.25z"/>
<path fill="#2b002c" d="M389.5 139h14.25v1h-14.25zM438.5 323h14.25v3h-14.25z"/>
<path fill="#3e005c" d="M389.5 140h14.25v2h-14.25zM202.95 156h14.25v1h-14.25zM459.45 148h14.25v2h-14.25zM459.45 158h14.25v2h-14.25zM315.85 176h14.25v3h-14.25zM143.95 211h14.25v1h-14.25zM143.95 212h14.25v2h-14.25zM272.2 201h14.25v3h-14.25zM343.45 211h14.25v2h-14.25zM443.2 228h14.25v2h-14.25zM128.4 232h14.25v3h-14.25zM171.15 235h14.25v1h-14.25zM228.15 235h14.25v2h-14.25zM169.95 276h14.25v1h-14.25zM298.2 280h14.25v1h-14.25zM440.7 273h14.25v2h-14.25zM168.75 292h14.25v2h-14.25zM168.75 294h14.25v3h-14.25zM438.5 321h14.25v2h-14.25zM180 359h14.25v1h-14.25zM180 378h14.25v2h-14.25zM265.5 366h14.25v1h-14.25zM365.25 357h14.25v1h-14.25zM464.3 387h14.25v2h-14.25zM236.3 398h14.25v2h-14.25zM393.05 412h14.25v2h-14.25zM462 473h14.25v1h-14.25z"/>
<path fill="#3e005d" d="M389.5 143h14.25v1h-14.25zM216.1 197h14.25v3h-14.25zM273.1 177h14.25v1h-14.25zM429.85 180h14.25v1h-14.25zM129.7 224h14.25v3h-14.25zM129.7 228h14.25v2h-14.25zM143.95 218h14.25v1h-14.25zM158.2 223h14.25v1h-14.25zM172.45 229h14.25v2h-14.25zM414.7 221h14.25v2h-14.25zM256.65 252h14.25v1h-14.25zM468 309h14.25v1h-14.25zM366.25 337h14.25v2h-14.25zM151.5 367h14.25v3h-14.25zM180 376h14.25v2h-14.25zM222.75 355h14.25v1h-14.25zM250.55 393h14.25v2h-14.25zM250.55 402h14.25v2h-14.25zM264.8 404h14.25v1h-14.25zM393.05 402h14.25v2h-14.25zM177 472h14.25v1h-14.25z"/>
<path fill="#400061" d="M389.5 144h14.25v1h-14.25zM216.1 192h14.25v3h-14.25zM358.6 180h14.25v1h-14.25zM415.6 181h14.25v1h-14.25zM215.2 221h14.25v2h-14.25zM128.4 244h14.25v1h-14.25zM199.65 239h14.25v2h-14.25zM242.4 267h14.25v1h-14.25zM313.65 248h14.25v1h-14.25zM356.4 265h14.25v2h-14.25zM340.95 284h14.25v2h-14.25zM454.95 273h14.25v3h-14.25zM469.2 272h14.25v3h-14.25zM139.25 321h14.25v1h-14.25zM264.8 388h14.25v1h-14.25z"/>
<path fill="#3e005e" d="M403.75 131h14.25v2h-14.25zM458.35 182h14.25v3h-14.25zM272.2 228h14.25v1h-14.25zM185.4 244h14.25v1h-14.25zM185.4 251h14.25v2h-14.25zM441.9 266h14.25v1h-14.25zM440.7 283h14.25v2h-14.25zM123 368h14.25v2h-14.25zM279.05 393h14.25v2h-14.25zM291 469h14.25v3h-14.25z"/>
<path fill="#4c0088" d="M403.75 133h14.25v1h-14.25zM331.2 162h14.25v1h-14.25zM388.2 156h14.25v1h-14.25zM242.4 232h14.25v3h-14.25zM256.65 253h14.25v1h-14.25zM299.4 259h14.25v2h-14.25zM240 294h14.25v2h-14.25zM268.5 290h14.25v2h-14.25zM307.55 385h14.25v1h-14.25zM478.55 380h19.75v3h-19.75zM450.05 393h14.25v3h-14.25zM362.25 469h14.25v1h-14.25zM447.75 470h14.25v1h-14.25zM476.25 468h14.25v3h-14.25z"/>
<path fill="#3d0059" d="M403.75 134h14.25v1h-14.25zM230.35 191h14.25v3h-14.25zM215.2 212h14.25v1h-14.25zM229.45 215h14.25v3h-14.25zM228.15 248h14.25v1h-14.25zM256.65 240h14.25v1h-14.25zM384.9 263h14.25v1h-14.25zM483.45 279h19.75v2h-19.75zM411 291h14.25v2h-14.25zM338.75 310h14.25v2h-14.25zM338.75 316h14.25v2h-14.25zM353 322h14.25v1h-14.25zM438.5 316h14.25v1h-14.25zM366.25 333h14.25v3h-14.25zM405 472h14.25v2h-14.25z"/>
<path fill="#53009d" d="M403.75 136h14.25v1h-14.25zM487.95 153h19.75v3h-19.75zM173.35 197h14.25v3h-14.25zM315.85 191h14.25v1h-14.25zM257.95 226h14.25v2h-14.25zM300.7 208h14.25v1h-14.25zM300.7 224h14.25v3h-14.25zM414.7 216h14.25v3h-14.25zM156.9 247h14.25v1h-14.25zM185.4 253h14.25v1h-14.25zM213.9 234h14.25v1h-14.25zM213.9 238h14.25v2h-14.25zM270.9 259h14.25v3h-14.25zM299.4 247h14.25v1h-14.25zM399.15 244h14.25v3h-14.25zM441.9 237h14.25v2h-14.25zM441.9 252h14.25v3h-14.25zM484.65 267h19.75v2h-19.75zM169.95 280h14.25v3h-14.25zM184.2 281h14.25v1h-14.25zM283.95 282h14.25v2h-14.25zM483.45 277h19.75v2h-19.75zM225.75 301h14.25v1h-14.25zM240 305h14.25v2h-14.25zM468 290h14.25v2h-14.25zM209.5 351h14.25v3h-14.25zM223.75 341h14.25v1h-14.25zM309.25 340h14.25v2h-14.25zM222.75 365h14.25v2h-14.25zM265.5 371h14.25v2h-14.25zM294 363h14.25v1h-14.25zM236.3 390h14.25v1h-14.25zM393.05 387h14.25v1h-14.25zM262.5 453h14.25v2h-14.25z"/>
<path fill="#3b0053" d="M418 141h14.25v3h-14.25zM460.75 143h14.25v1h-14.25zM202.95 165h14.25v1h-14.25zM144.85 175h14.25v2h-14.25zM401.35 173h14.25v2h-14.25zM357.7 221h14.25v2h-14.25zM270.9 244h14.25v1h-14.25zM269.7 287h14.25v3h-14.25zM312.45 287h14.25v1h-14.25zM383.7 272h14.25v3h-14.25zM339.75 304h14.25v2h-14.25zM252.25 351h14.25v1h-14.25zM394.75 346h14.25v3h-14.25zM393.75 368h14.25v2h-14.25zM464.3 380h14.25v1h-14.25zM179.3 393h14.25v2h-14.25zM476.25 471h14.25v2h-14.25z"/>
<path fill="#5700a9" d="M418 144h14.25v1h-14.25zM402.45 146h1v6h-1zM402.45 152h1v10h-1zM445.2 146h14.25v1h-14.25zM187.6 176h14.25v1h-14.25zM230.35 197h14.25v2h-14.25zM301.6 175h14.25v1h-14.25zM314.95 200h14.25v1h-14.25zM314.95 222h14.25v2h-14.25zM386.2 211h14.25v1h-14.25zM428.95 210h14.25v3h-14.25zM457.45 228h1v4h-1zM171.15 246h1v6h-1zM171.15 252h1v6h-1zM171.15 258h1v8h-1zM171.15 266h1v3h-1zM327.9 240h14.25v2h-14.25zM384.9 232h14.25v3h-14.25zM384.9 258h14.25v1h-14.25zM211.5 296h14.25v2h-14.25zM325.5 299h14.25v1h-14.25zM210.5 329h14.25v1h-14.25zM138.25 339h14.25v1h-14.25zM252.25 345h14.25v1h-14.25zM321.8 400h14.25v2h-14.25zM421.55 403h1v6h-1zM421.55 409h1v4h-1zM120 444h14.25v1h-14.25zM234 452h1v10h-1z"/>
<path fill="#6501d3" d="M418 145h14.25v1h-14.25zM216.1 173h14.25v1h-14.25zM257.95 205h14.25v3h-14.25zM270.9 235h14.25v1h-14.25zM441.9 235h14.25v1h-14.25zM240 292h14.25v2h-14.25zM205.5 437h14.25v1h-14.25z"/>
<path fill="#5b01b6" d="M432.25 132h14.25v2h-14.25zM201.85 166h14.25v1h-14.25zM242.4 236h14.25v2h-14.25zM242.4 238h14.25v2h-14.25zM269.7 274h14.25v2h-14.25zM340.95 269h1v8h-1zM340.95 277h1v6h-1zM340.95 283h1v7h-1zM454.95 288h14.25v1h-14.25zM454.95 269h1v4h-1zM454.95 273h1v4h-1zM454.95 277h1v10h-1zM339.75 290h1v10h-1zM339.75 300h1v4h-1zM339.75 304h1v4h-1zM339.75 308h1v2h-1zM253.25 331h14.25v1h-14.25zM424.25 311h14.25v3h-14.25zM181 332h1v4h-1zM181 336h1v10h-1zM181 346h1v9h-1zM252.25 340h14.25v1h-14.25zM266.5 352h14.25v1h-14.25zM394.75 342h1v6h-1zM394.75 348h1v7h-1zM409 342h1v8h-1zM423.25 340h1v10h-1zM423.25 350h1v4h-1zM423.25 354h1v1h-1zM180 355h1v8h-1zM180 363h1v6h-1zM180 369h1v8h-1zM180 377h1v3h-1zM279.75 361h14.25v3h-14.25zM279.75 367h14.25v1h-14.25zM351 367h14.25v2h-14.25zM379.5 355h14.25v2h-14.25zM450.05 382h14.25v3h-14.25zM450.05 393h1v8h-1zM219.75 442h14.25v3h-14.25z"/>
<path fill="#7d04ff" d="M432.25 139h14.25v1h-14.25zM446.5 131h14.25v2h-14.25zM229.45 203h14.25v1h-14.25zM329.2 231h14.25v1h-14.25zM368.25 297h14.25v1h-14.25zM351 366h14.25v1h-14.25zM179.3 388h14.25v3h-14.25zM207.8 411h14.25v2h-14.25zM279.05 406h14.25v2h-14.25zM350.3 400h14.25v2h-14.25zM149.5 429h14.25v2h-14.25zM249.25 425h14.25v3h-14.25zM306.25 423h14.25v3h-14.25zM320.5 425h14.25v3h-14.25zM276.75 447h14.25v1h-14.25zM376.5 455h14.25v2h-14.25zM419.25 450h14.25v3h-14.25z"/>
<path fill="#4d0089" d="M446.5 134h14.25v1h-14.25zM460.75 144h14.25v1h-14.25zM145.95 157h14.25v2h-14.25zM159.1 189h14.25v1h-14.25zM244.6 173h14.25v1h-14.25zM258.85 198h14.25v1h-14.25zM358.6 176h14.25v1h-14.25zM243.7 223h14.25v2h-14.25zM357.7 216h14.25v1h-14.25zM185.4 237h14.25v1h-14.25zM199.65 249h14.25v3h-14.25zM256.65 232h14.25v1h-14.25zM370.65 257h14.25v3h-14.25zM413.4 247h14.25v1h-14.25zM484.65 239h19.75v2h-19.75zM298.2 287h14.25v3h-14.25zM454.95 282h14.25v2h-14.25zM482.25 300h19.75v2h-19.75zM310.25 316h14.25v1h-14.25zM194.25 374h14.25v2h-14.25zM379.5 363h14.25v2h-14.25zM422.25 364h14.25v3h-14.25zM222.05 389h14.25v1h-14.25zM236.3 381h14.25v1h-14.25zM407.3 386h14.25v1h-14.25zM293.3 397h14.25v1h-14.25zM450.05 399h14.25v3h-14.25zM419.25 471h14.25v2h-14.25z"/>
<path fill="#7703f9" d="M446.5 142h14.25v1h-14.25zM371.95 204h14.25v1h-14.25zM450.05 381h14.25v1h-14.25zM507.05 408h3.95v1h-3.95zM306.25 415h14.25v1h-14.25z"/>
<path fill="#4b0084" d="M446.5 143h14.25v1h-14.25zM316.95 161h14.25v3h-14.25zM445.2 165h14.25v1h-14.25zM258.85 174h14.25v3h-14.25zM415.6 169h14.25v1h-14.25zM444.1 170h14.25v2h-14.25zM444.1 179h14.25v1h-14.25zM200.95 222h14.25v2h-14.25zM371.95 215h14.25v3h-14.25zM443.2 216h14.25v2h-14.25zM185.4 260h14.25v2h-14.25zM370.65 237h14.25v2h-14.25zM127.2 278h14.25v1h-14.25zM241.2 270h14.25v2h-14.25zM469.2 277h14.25v1h-14.25zM154.5 297h14.25v2h-14.25zM339.75 290h14.25v1h-14.25zM195.25 350h14.25v1h-14.25zM180 373h14.25v1h-14.25zM222.05 392h14.25v1h-14.25zM179.3 395h14.25v3h-14.25z"/>
<path fill="#7402f6" d="M460.75 133h14.25v2h-14.25zM329.2 217h14.25v2h-14.25zM371.95 203h14.25v1h-14.25zM342.15 238h14.25v3h-14.25zM342.15 256h14.25v2h-14.25zM451.75 352h14.25v2h-14.25zM122.3 391h14.25v2h-14.25zM450.05 387h14.25v2h-14.25zM122.3 401h14.25v1h-14.25zM364.55 411h14.25v3h-14.25zM435.8 393h14.25v1h-14.25zM235 415h14.25v1h-14.25zM292 423h14.25v2h-14.25zM349 425h14.25v3h-14.25zM420.25 419h14.25v1h-14.25zM134.25 443h14.25v1h-14.25zM162.75 440h14.25v1h-14.25zM447.75 444h14.25v2h-14.25z"/>
<path fill="#7002ee" d="M460.75 136h14.25v2h-14.25zM217.2 157h14.25v2h-14.25zM416.7 151h14.25v2h-14.25zM428.95 206h14.25v2h-14.25zM142.65 238h14.25v1h-14.25zM470.4 245h14.25v1h-14.25zM183 292h14.25v2h-14.25zM211.5 298h14.25v1h-14.25zM238 336h14.25v3h-14.25zM251.25 361h14.25v1h-14.25zM350.3 397h14.25v3h-14.25zM135.25 417h14.25v1h-14.25zM306.25 414h14.25v1h-14.25zM320.5 431h14.25v1h-14.25zM234 470h14.25v3h-14.25z"/>
<path fill="#7202f3" d="M460.75 140h14.25v3h-14.25zM138.25 344h14.25v1h-14.25zM464.3 404h14.25v2h-14.25zM235 419h14.25v1h-14.25zM219.75 434h14.25v3h-14.25zM419.25 443h14.25v1h-14.25z"/>
<path fill="#7d03fe" d="M475 131h14.25v1h-14.25zM475 135h14.25v2h-14.25zM197.25 292h14.25v1h-14.25zM166.75 352h14.25v1h-14.25zM151.5 363h14.25v1h-14.25zM351 360h14.25v1h-14.25zM450.75 363h14.25v2h-14.25zM149.5 427h14.25v2h-14.25zM178 416h14.25v3h-14.25zM249.25 416h14.25v1h-14.25zM277.75 421h14.25v3h-14.25zM306.25 417h14.25v3h-14.25zM420.25 430h14.25v2h-14.25zM162.75 446h14.25v1h-14.25zM205.5 441h14.25v3h-14.25zM376.5 454h14.25v1h-14.25z"/>
<path fill="#350044" d="M131.7 152h14.25v3h-14.25zM345.45 146h14.25v1h-14.25zM344.35 194h14.25v1h-14.25zM200.95 208h14.25v2h-14.25zM200.95 220h14.25v1h-14.25zM357.7 223h14.25v1h-14.25zM443.2 206h14.25v2h-14.25zM485.95 202h19.75v3h-19.75zM485.95 211h19.75v2h-19.75zM485.95 216h19.75v1h-19.75zM199.65 241h14.25v2h-14.25zM413.4 263h14.25v2h-14.25zM198.45 279h14.25v2h-14.25zM168.75 306h14.25v2h-14.25zM139.25 326h14.25v2h-14.25zM378.8 404h14.25v3h-14.25zM421.55 399h14.25v1h-14.25zM162.75 471h14.25v1h-14.25z"/>
<path fill="#38004b" d="M131.7 159h14.25v1h-14.25zM231.45 151h14.25v1h-14.25zM244.6 166h14.25v2h-14.25zM444.1 184h14.25v1h-14.25zM286.45 206h14.25v2h-14.25zM471.7 223h14.25v1h-14.25zM384.9 246h14.25v2h-14.25zM399.15 268h14.25v1h-14.25zM355.2 279h14.25v1h-14.25zM297 305h14.25v1h-14.25zM439.5 301h14.25v2h-14.25zM324.5 326h14.25v1h-14.25zM207.8 387h14.25v3h-14.25zM364.55 403h14.25v1h-14.25zM276.75 470h14.25v2h-14.25z"/>
<path fill="#3a0052" d="M131.7 165h14.25v1h-14.25zM202.95 159h14.25v2h-14.25zM130.6 196h14.25v1h-14.25zM330.1 171h14.25v3h-14.25zM429.85 183h14.25v1h-14.25zM444.1 176h14.25v3h-14.25zM215.2 215h14.25v1h-14.25zM286.45 229h14.25v1h-14.25zM471.7 202h14.25v2h-14.25zM456.15 264h14.25v2h-14.25zM340.95 289h14.25v1h-14.25zM154.5 301h14.25v3h-14.25zM353 328h14.25v1h-14.25zM438.5 310h14.25v1h-14.25zM295 340h14.25v1h-14.25zM409 344h14.25v2h-14.25zM194.25 363h14.25v3h-14.25zM222.75 360h14.25v1h-14.25zM294 371h14.25v2h-14.25zM365.25 359h14.25v1h-14.25zM207.8 380h14.25v1h-14.25zM293.3 387h14.25v2h-14.25zM321.8 386h14.25v3h-14.25zM435.8 389h14.25v3h-14.25zM321.8 393h14.25v1h-14.25zM262.5 466h14.25v2h-14.25z"/>
<path fill="#48007c" d="M145.95 146h14.25v1h-14.25zM459.45 163h14.25v1h-14.25zM187.6 167h14.25v1h-14.25zM187.6 170h14.25v1h-14.25zM443.2 220h14.25v2h-14.25zM470.4 265h14.25v1h-14.25zM264.8 409h14.25v1h-14.25zM504.75 473h6.25v2h-6.25z"/>
<path fill="#5500a4" d="M145.95 155h14.25v2h-14.25zM302.7 149h14.25v1h-14.25zM216.1 172h14.25v1h-14.25zM315.85 171h14.25v1h-14.25zM315.85 195h14.25v1h-14.25zM458.35 173h14.25v1h-14.25zM314.95 230h14.25v2h-14.25zM428.95 216h14.25v1h-14.25zM443.2 227h14.25v1h-14.25zM156.9 250h14.25v2h-14.25zM228.15 255h14.25v1h-14.25zM155.7 274h14.25v3h-14.25zM155.7 279h14.25v2h-14.25zM326.7 286h14.25v1h-14.25zM225.75 298h14.25v3h-14.25zM481.25 311h19.75v1h-19.75zM251.25 360h14.25v1h-14.25zM294 357h14.25v1h-14.25zM122.3 385h14.25v1h-14.25zM421.55 410h14.25v3h-14.25z"/>
<path fill="#420067" d="M160.2 148h14.25v2h-14.25zM315.85 198h14.25v2h-14.25zM486.85 179h19.75v1h-19.75zM243.7 220h14.25v1h-14.25zM272.2 205h14.25v3h-14.25zM428.95 224h14.25v2h-14.25zM471.7 200h14.25v1h-14.25zM185.4 250h14.25v1h-14.25zM370.65 232h14.25v2h-14.25zM441.9 232h1v8h-1zM441.9 240h1v10h-1zM441.9 250h1v6h-1zM441.9 256h1v8h-1zM441.9 264h1v5h-1zM369.45 284h14.25v1h-14.25zM153.5 326h14.25v2h-14.25zM239 328h1v4h-1zM309.25 342h14.25v1h-14.25zM309.25 352h14.25v2h-14.25zM237 355h1v6h-1zM237 361h1v6h-1zM237 367h1v10h-1zM237 377h1v3h-1zM251.25 355h1v10h-1zM251.25 365h1v8h-1zM251.25 373h1v7h-1zM265.5 355h1v6h-1zM265.5 361h1v6h-1zM265.5 367h1v6h-1zM265.5 373h1v6h-1zM265.5 379h1v1h-1zM279.75 355h1v6h-1zM279.75 361h1v6h-1zM279.75 371h1v4h-1zM279.75 375h1v4h-1zM279.75 379h1v1h-1zM219.75 467h14.25v1h-14.25z"/>
<path fill="#2f0035" d="M160.2 157h14.25v2h-14.25zM331.2 156h14.25v2h-14.25zM485.95 200h19.75v1h-19.75zM325.5 305h14.25v2h-14.25zM353 314h14.25v3h-14.25z"/>
<path fill="#31003c" d="M160.2 160h14.25v1h-14.25zM430.95 149h14.25v2h-14.25zM457.45 224h14.25v1h-14.25z"/>
<path fill="#3a0053" d="M160.2 161h14.25v1h-14.25zM459.45 150h14.25v2h-14.25zM213.9 262h14.25v2h-14.25zM435.8 382h14.25v1h-14.25z"/>
<path fill="#360048" d="M160.2 162h14.25v1h-14.25zM287.35 168h14.25v1h-14.25zM358.6 182h14.25v1h-14.25zM458.35 171h14.25v2h-14.25zM143.95 210h14.25v1h-14.25zM457.45 215h14.25v1h-14.25zM228.15 261h14.25v3h-14.25zM285.15 236h14.25v1h-14.25zM340.95 273h14.25v1h-14.25zM454.95 289h14.25v1h-14.25zM126 291h14.25v1h-14.25zM223.75 346h14.25v1h-14.25zM295 354h14.25v1h-14.25zM409 352h14.25v1h-14.25zM423.25 345h14.25v1h-14.25zM193.55 384h14.25v1h-14.25zM405 465h14.25v3h-14.25z"/>
<path fill="#3a0051" d="M160.2 165h14.25v1h-14.25zM173.35 175h14.25v1h-14.25zM287.35 182h14.25v1h-14.25zM200.95 228h14.25v3h-14.25zM229.45 209h14.25v3h-14.25zM243.7 200h1v8h-1zM243.7 208h1v4h-1zM243.7 212h1v4h-1zM243.7 216h1v10h-1zM243.7 226h1v6h-1zM357.7 200h1v10h-1zM357.7 210h1v6h-1zM357.7 216h1v8h-1zM471.7 217h14.25v2h-14.25zM485.95 201h19.75v1h-19.75zM199.65 262h14.25v1h-14.25zM213.9 258h14.25v1h-14.25zM242.4 235h14.25v1h-14.25zM242.4 232h1v4h-1zM242.4 236h1v10h-1zM242.4 246h1v8h-1zM242.4 254h1v4h-1zM242.4 258h1v4h-1zM242.4 262h1v4h-1zM242.4 266h1v3h-1zM440.7 276h14.25v1h-14.25zM339.75 291h14.25v2h-14.25zM125 314h14.25v2h-14.25zM182 326h1v4h-1zM182 330h1v2h-1zM366.25 332h1v8h-1zM366.25 340h1v6h-1zM366.25 346h1v4h-1zM366.25 350h1v5h-1zM150.8 386h14.25v2h-14.25zM279.05 380h1v8h-1zM279.05 388h1v4h-1zM407.3 380h1v6h-1zM407.3 386h1v7h-1zM435.8 386h14.25v3h-14.25zM219.75 468h14.25v2h-14.25z"/>
<path fill="#2c0030" d="M174.45 148h14.25v3h-14.25zM158.2 210h14.25v1h-14.25zM158.2 212h14.25v1h-14.25zM321.8 393h1v4h-1zM364.55 393h1v10h-1zM364.55 403h1v4h-1zM205.5 451h14.25v2h-14.25z"/>
<path fill="#420069" d="M174.45 163h14.25v3h-14.25zM331.2 149h14.25v1h-14.25zM331.2 160h14.25v2h-14.25zM345.45 156h14.25v1h-14.25zM159.1 179h14.25v3h-14.25zM159.1 190h14.25v3h-14.25zM258.85 181h14.25v1h-14.25zM273.1 176h14.25v1h-14.25zM472.6 191h14.25v1h-14.25zM486.85 192h19.75v2h-19.75zM143.95 214h14.25v1h-14.25zM143.95 221h14.25v2h-14.25zM186.7 228h14.25v1h-14.25zM200.95 224h14.25v1h-14.25zM215.2 204h14.25v1h-14.25zM300.7 209h14.25v1h-14.25zM329.2 204h14.25v3h-14.25zM371.95 220h14.25v3h-14.25zM270.9 246h14.25v2h-14.25zM313.65 233h14.25v3h-14.25zM356.4 259h14.25v3h-14.25zM370.65 251h14.25v2h-14.25zM413.4 266h14.25v2h-14.25zM441.9 263h14.25v2h-14.25zM469.2 286h14.25v1h-14.25zM225.75 292h14.25v2h-14.25zM167.75 318h14.25v1h-14.25zM308.25 377h14.25v2h-14.25zM222.05 410h14.25v2h-14.25zM250.55 395h14.25v1h-14.25zM279.05 398h14.25v3h-14.25zM393.05 396h14.25v2h-14.25zM419.25 464h14.25v2h-14.25zM419.25 467h14.25v1h-14.25z"/>
<path fill="#7002ef" d="M188.7 146h14.25v3h-14.25zM259.95 163h14.25v2h-14.25zM316.95 151h14.25v2h-14.25zM388.2 148h14.25v1h-14.25zM443.2 225h14.25v1h-14.25zM269.7 286h14.25v1h-14.25zM211.5 294h14.25v2h-14.25zM368.25 296h14.25v1h-14.25zM322.5 379h14.25v1h-14.25zM436.5 377h14.25v1h-14.25zM465 374h14.25v2h-14.25zM307.55 398h14.25v1h-14.25zM135.25 431h14.25v3h-14.25zM420.25 422h14.25v1h-14.25zM248.25 470h14.25v1h-14.25zM276.75 453h14.25v1h-14.25zM305.25 465h14.25v1h-14.25zM447.75 450h14.25v3h-14.25z"/>
<path fill="#370048" d="M188.7 150h14.25v3h-14.25zM315.85 168h14.25v1h-14.25zM128.4 257h14.25v2h-14.25zM228.15 244h14.25v2h-14.25zM413.4 233h14.25v1h-14.25zM383.7 271h14.25v1h-14.25zM411 300h14.25v1h-14.25zM193.55 393h14.25v2h-14.25z"/>
<path fill="#7102f1" d="M188.7 161h14.25v1h-14.25zM427.65 245h14.25v1h-14.25zM365.25 368h14.25v1h-14.25zM179.3 385h14.25v3h-14.25zM336.05 389h14.25v2h-14.25zM478.55 390h19.75v3h-19.75zM150.8 396h14.25v1h-14.25zM307.55 409h14.25v3h-14.25zM464.3 399h14.25v1h-14.25zM377.5 419h14.25v3h-14.25zM420.25 415h14.25v1h-14.25zM205.5 465h14.25v1h-14.25z"/>
<path fill="#7302f4" d="M188.7 162h14.25v2h-14.25zM388.2 146h1v10h-1zM388.2 156h1v6h-1zM388.2 162h1v4h-1zM387.1 166h1v8h-1zM285.15 248h1v10h-1zM285.15 258h1v10h-1zM285.15 268h1v1h-1zM456.15 237h14.25v1h-14.25zM483.45 289h1v1h-1zM240 290h1v4h-1zM240 294h1v10h-1zM240 304h1v6h-1zM482.25 290h1v6h-1zM482.25 296h1v4h-1zM482.25 300h1v8h-1zM482.25 308h1v2h-1zM253.25 310h1v6h-1zM408 375h1v4h-1zM408 379h1v1h-1zM207.8 407h14.25v1h-14.25zM236.3 409h1v4h-1zM378.8 407h14.25v2h-14.25zM492.8 393h1v6h-1zM492.8 399h1v4h-1zM492.8 403h1v8h-1zM492.8 411h1v3h-1zM149.5 422h14.25v3h-14.25zM206.5 414h14.25v2h-14.25zM420.25 417h14.25v1h-14.25zM191.25 468h1v6h-1zM191.25 474h1v1h-1zM234 465h14.25v3h-14.25zM333.75 467h14.25v2h-14.25zM433.5 452h14.25v2h-14.25z"/>
<path fill="#3d005a" d="M202.95 155h14.25v1h-14.25zM230.35 175h14.25v2h-14.25zM287.35 175h14.25v3h-14.25zM330.1 170h14.25v1h-14.25zM215.2 200h14.25v1h-14.25zM343.45 207h14.25v1h-14.25zM457.45 203h14.25v3h-14.25zM457.45 211h14.25v3h-14.25zM457.45 219h14.25v1h-14.25zM142.65 247h14.25v3h-14.25zM256.65 249h14.25v1h-14.25zM270.9 265h14.25v2h-14.25zM441.9 261h14.25v2h-14.25zM456.15 248h14.25v2h-14.25zM326.7 284h14.25v1h-14.25zM425.25 301h14.25v2h-14.25zM452.75 323h14.25v2h-14.25zM308.25 357h14.25v1h-14.25zM364.55 382h14.25v2h-14.25zM207.8 401h14.25v2h-14.25zM222.05 393h14.25v3h-14.25z"/>
<path fill="#6a01e3" d="M202.95 164h14.25v1h-14.25zM473.7 155h14.25v2h-14.25zM187.6 171h14.25v1h-14.25zM299.4 257h14.25v1h-14.25zM226.95 272h14.25v1h-14.25zM307.55 412h14.25v2h-14.25z"/>
<path fill="#6801dc" d="M217.2 153h14.25v2h-14.25zM259.95 154h14.25v1h-14.25zM416.7 148h14.25v2h-14.25zM229.45 227h14.25v1h-14.25zM312.45 273h14.25v2h-14.25zM312.45 281h14.25v3h-14.25zM248.25 471h14.25v3h-14.25z"/>
<path fill="#6b01e3" d="M217.2 160h14.25v2h-14.25zM259.95 153h14.25v1h-14.25zM471.7 229h14.25v1h-14.25zM213.9 246h14.25v1h-14.25zM265.5 355h14.25v2h-14.25zM436.5 363h14.25v1h-14.25zM279.05 411h14.25v2h-14.25zM490.5 446h14.25v1h-14.25z"/>
<path fill="#6901df" d="M217.2 162h14.25v3h-14.25zM314.95 221h14.25v1h-14.25zM400.45 230h14.25v2h-14.25zM428.95 217h14.25v2h-14.25zM128.4 268h14.25v1h-14.25zM142.65 239h14.25v3h-14.25zM299.4 239h14.25v2h-14.25zM155.7 281h14.25v2h-14.25zM226.95 280h14.25v2h-14.25zM266.5 351h14.25v1h-14.25zM334.75 422h14.25v1h-14.25z"/>
<path fill="#5600a9" d="M231.45 157h14.25v3h-14.25zM245.7 148h14.25v3h-14.25zM159.1 184h14.25v3h-14.25zM301.6 170h14.25v3h-14.25zM213.9 268h14.25v1h-14.25zM427.65 259h14.25v3h-14.25zM266.5 332h14.25v2h-14.25zM135.25 418h14.25v2h-14.25z"/>
<path fill="#3b0055" d="M245.7 146h14.25v2h-14.25zM245.7 157h14.25v3h-14.25zM373.95 147h14.25v1h-14.25zM243.7 205h14.25v1h-14.25zM286.45 214h14.25v2h-14.25zM343.45 204h14.25v2h-14.25zM471.7 204h14.25v1h-14.25zM256.65 236h14.25v1h-14.25zM370.65 244h14.25v1h-14.25zM127.2 273h14.25v1h-14.25zM184.2 288h14.25v1h-14.25zM198.45 273h14.25v1h-14.25zM212.7 280h14.25v1h-14.25zM255.45 278h14.25v2h-14.25zM325.5 294h14.25v1h-14.25zM353 310h14.25v2h-14.25zM353 317h14.25v2h-14.25zM438.5 326h14.25v1h-14.25zM195.25 344h14.25v1h-14.25zM195.25 353h14.25v2h-14.25zM209.5 332h14.25v3h-14.25zM364.55 384h14.25v2h-14.25zM262.5 471h14.25v3h-14.25z"/>
<path fill="#4b0082" d="M245.7 151h14.25v1h-14.25zM330.1 193h14.25v3h-14.25zM243.7 210h14.25v2h-14.25zM326.7 289h14.25v1h-14.25zM412.2 280h14.25v2h-14.25zM393.05 386h14.25v1h-14.25zM364.55 402h14.25v1h-14.25z"/>
<path fill="#270025" d="M245.7 154h1v4h-1zM452.75 322h14.25v1h-14.25zM465 366h14.25v3h-14.25z"/>
<path fill="#6601d7" d="M259.95 146h14.25v2h-14.25zM487.95 159h19.75v1h-19.75zM201.85 170h14.25v3h-14.25zM315.85 183h14.25v1h-14.25zM229.45 222h14.25v3h-14.25zM314.95 218h14.25v1h-14.25zM329.2 211h14.25v1h-14.25zM329.2 216h14.25v1h-14.25zM329.2 219h14.25v2h-14.25zM414.7 224h14.25v1h-14.25zM471.7 230h14.25v2h-14.25zM156.9 232h14.25v2h-14.25zM356.4 267h14.25v2h-14.25zM399.15 252h14.25v1h-14.25zM427.65 238h14.25v3h-14.25zM441.9 258h14.25v3h-14.25zM412.2 284h14.25v3h-14.25zM483.45 288h19.75v2h-19.75zM268.5 309h14.25v1h-14.25zM368.25 299h14.25v2h-14.25zM210.5 331h14.25v1h-14.25zM194.25 369h14.25v1h-14.25zM222.75 378h14.25v2h-14.25zM322.5 376h14.25v1h-14.25zM351 374h14.25v2h-14.25zM393.05 391h14.25v1h-14.25zM264.8 412h14.25v1h-14.25zM307.55 401h14.25v1h-14.25zM492.8 404h14.25v1h-14.25zM507.05 396h3.95v1h-3.95zM191.25 469h14.25v1h-14.25zM390.75 467h14.25v3h-14.25z"/>
<path fill="#6d02e8" d="M259.95 148h14.25v1h-14.25zM402.45 154h14.25v2h-14.25zM187.6 191h14.25v2h-14.25zM329.2 223h14.25v1h-14.25zM142.65 244h14.25v3h-14.25zM171.15 261h14.25v1h-14.25zM440.7 277h14.25v1h-14.25zM307.55 402h14.25v1h-14.25zM421.55 403h14.25v3h-14.25zM421.55 407h14.25v1h-14.25zM492.8 411h14.25v1h-14.25zM234 463h14.25v1h-14.25z"/>
<path fill="#5500a2" d="M259.95 149h14.25v1h-14.25zM343.45 203h14.25v1h-14.25zM400.45 203h14.25v3h-14.25zM209.5 343h14.25v2h-14.25zM238 353h14.25v1h-14.25zM277.75 424h14.25v1h-14.25zM377.5 425h14.25v1h-14.25z"/>
<path fill="#6701d9" d="M259.95 155h14.25v2h-14.25zM316.95 154h14.25v2h-14.25zM201.85 166h1v10h-1zM201.85 176h1v10h-1zM201.85 186h1v6h-1zM201.85 192h1v8h-1zM372.85 170h14.25v2h-14.25zM142.65 242h14.25v1h-14.25zM156.9 242h14.25v2h-14.25zM171.15 232h14.25v2h-14.25zM313.65 256h14.25v2h-14.25zM427.65 246h1v6h-1zM427.65 252h1v4h-1zM427.65 256h1v8h-1zM427.65 264h1v5h-1zM226.95 289h14.25v1h-14.25zM440.7 269h1v4h-1zM440.7 273h1v8h-1zM440.7 281h1v6h-1zM253.25 328h1v4h-1zM209.5 335h14.25v1h-14.25zM238 332h1v6h-1zM238 338h1v10h-1zM238 348h1v4h-1zM238 352h1v3h-1zM252.25 332h1v8h-1zM252.25 340h1v6h-1zM252.25 346h1v9h-1zM266.5 332h1v8h-1zM266.5 340h1v8h-1zM266.5 348h1v6h-1zM266.5 354h1v1h-1zM492.8 407h14.25v1h-14.25zM248.25 455h14.25v1h-14.25zM433.5 473h14.25v2h-14.25z"/>
<path fill="#6801de" d="M259.95 157h14.25v2h-14.25z"/>
<path fill="#6601d6" d="M259.95 159h14.25v1h-14.25zM302.7 161h14.25v1h-14.25zM373.95 154h14.25v1h-14.25zM388.2 153h14.25v1h-14.25zM388.2 161h14.25v3h-14.25zM128.4 259h14.25v2h-14.25zM185.4 245h14.25v2h-14.25zM412.2 287h14.25v3h-14.25zM254.25 299h14.25v1h-14.25zM365.25 374h14.25v2h-14.25z"/>
<path fill="#4f008f" d="M259.95 165h14.25v1h-14.25zM316.95 159h14.25v2h-14.25zM258.85 182h14.25v2h-14.25zM429.85 171h14.25v2h-14.25zM458.35 178h14.25v1h-14.25zM243.7 222h14.25v1h-14.25zM257.95 211h14.25v1h-14.25zM400.45 220h14.25v3h-14.25zM313.65 254h14.25v1h-14.25zM399.15 242h14.25v2h-14.25zM383.7 278h14.25v2h-14.25zM240 301h14.25v1h-14.25zM365.25 360h14.25v2h-14.25zM448.75 431h14.25v3h-14.25z"/>
<path fill="#4b0085" d="M274.2 152h14.25v3h-14.25zM288.45 161h14.25v2h-14.25zM445.2 158h14.25v2h-14.25zM459.45 164h14.25v2h-14.25zM244.6 183h14.25v1h-14.25zM287.35 183h14.25v1h-14.25zM287.35 187h14.25v2h-14.25zM330.1 175h14.25v3h-14.25zM415.6 175h14.25v1h-14.25zM429.85 173h14.25v2h-14.25zM414.7 227h14.25v1h-14.25zM457.45 217h14.25v1h-14.25zM471.7 201h14.25v1h-14.25zM270.9 248h14.25v2h-14.25zM270.9 253h14.25v2h-14.25zM285.15 242h14.25v1h-14.25zM456.15 254h14.25v1h-14.25zM456.15 266h14.25v2h-14.25zM127.2 275h14.25v3h-14.25zM412.2 275h14.25v3h-14.25zM469.2 270h14.25v1h-14.25zM140.25 302h14.25v1h-14.25zM411 298h14.25v2h-14.25zM182 327h14.25v2h-14.25zM366.25 336h14.25v1h-14.25zM123 365h14.25v2h-14.25zM165.75 370h14.25v1h-14.25zM180 371h14.25v1h-14.25zM150.8 380h14.25v1h-14.25zM150.8 389h14.25v1h-14.25zM236.3 387h14.25v1h-14.25zM293.3 395h14.25v2h-14.25zM507.05 409h3.95v1h-3.95zM490.5 466h14.25v1h-14.25z"/>
<path fill="#5a01b5" d="M274.2 157h14.25v1h-14.25zM459.45 160h14.25v1h-14.25zM272.2 229h14.25v3h-14.25zM443.2 230h14.25v2h-14.25zM142.65 232h14.25v2h-14.25zM441.9 246h14.25v3h-14.25zM239 331h14.25v1h-14.25zM293.3 389h14.25v2h-14.25zM207.8 408h14.25v2h-14.25zM407.3 396h14.25v3h-14.25zM192.25 432h14.25v2h-14.25z"/>
<path fill="#5a00b4" d="M288.45 151h14.25v1h-14.25zM316.95 146h14.25v2h-14.25zM287.35 173h14.25v1h-14.25zM287.35 198h14.25v2h-14.25zM415.6 190h14.25v3h-14.25zM427.65 232h14.25v1h-14.25zM427.65 247h14.25v1h-14.25zM427.65 256h14.25v1h-14.25zM283.95 289h14.25v1h-14.25zM252.25 333h14.25v2h-14.25zM266.5 349h14.25v2h-14.25zM280.75 341h14.25v1h-14.25zM137.25 368h14.25v2h-14.25zM251.25 373h14.25v1h-14.25zM279.05 390h14.25v3h-14.25zM207.8 404h14.25v1h-14.25zM234 454h14.25v2h-14.25z"/>
<path fill="#5900af" d="M288.45 157h14.25v3h-14.25zM314.95 216h14.25v2h-14.25zM226.95 282h14.25v3h-14.25zM279.75 365h14.25v1h-14.25zM490.5 443h14.25v2h-14.25z"/>
<path fill="#2e0034" d="M288.45 164h14.25v1h-14.25zM430.95 160h14.25v2h-14.25zM287.35 191h14.25v1h-14.25zM193.55 391h14.25v2h-14.25zM333.75 451h14.25v3h-14.25zM376.5 474h14.25v1h-14.25z"/>
<path fill="#6801dd" d="M302.7 153h14.25v2h-14.25zM315.85 187h14.25v1h-14.25zM400.45 219h14.25v1h-14.25zM470.4 246h14.25v3h-14.25zM155.7 271h14.25v1h-14.25zM310.25 312h14.25v1h-14.25zM223.75 334h14.25v2h-14.25zM208.5 370h14.25v2h-14.25zM251.25 374h14.25v2h-14.25zM308.25 364h14.25v3h-14.25zM219.75 454h14.25v1h-14.25z"/>
<path fill="#5b01b8" d="M316.95 149h14.25v2h-14.25zM358.6 186h14.25v2h-14.25zM372.85 176h14.25v2h-14.25zM372.85 196h14.25v1h-14.25zM429.85 193h14.25v1h-14.25zM443.2 213h14.25v2h-14.25zM342.15 267h14.25v1h-14.25zM441.9 239h14.25v1h-14.25zM383.7 287h14.25v1h-14.25zM483.45 281h19.75v2h-19.75zM268.5 305h14.25v1h-14.25zM251.25 366h14.25v1h-14.25zM251.25 370h14.25v1h-14.25zM279.75 357h14.25v3h-14.25zM336.05 393h14.25v2h-14.25zM349 421h14.25v1h-14.25z"/>
<path fill="#6b01e5" d="M316.95 153h14.25v1h-14.25zM187.6 177h14.25v2h-14.25zM372.85 191h14.25v3h-14.25zM142.65 234h14.25v2h-14.25zM211.5 290h14.25v3h-14.25zM365.25 365h14.25v1h-14.25zM334.75 420h14.25v2h-14.25zM219.75 458h14.25v1h-14.25z"/>
<path fill="#7b03fe" d="M316.95 156h14.25v3h-14.25zM482.25 296h19.75v2h-19.75zM253.25 310h14.25v1h-14.25zM408 375h14.25v1h-14.25zM492.8 412h14.25v1h-14.25zM178 430h14.25v1h-14.25zM235 416h14.25v2h-14.25zM477.25 421h14.25v1h-14.25zM333.75 434h14.25v2h-14.25z"/>
<path fill="#360047" d="M331.2 148h14.25v1h-14.25zM402.45 163h14.25v3h-14.25zM430.95 155h14.25v1h-14.25zM130.6 174h14.25v2h-14.25zM130.6 187h14.25v1h-14.25zM301.6 190h14.25v3h-14.25zM215.2 205h14.25v1h-14.25zM142.65 262h14.25v2h-14.25zM142.65 264h14.25v3h-14.25zM456.15 261h14.25v1h-14.25zM326.7 274h14.25v1h-14.25zM355.2 270h14.25v1h-14.25zM154.5 304h14.25v1h-14.25zM396.75 291h14.25v3h-14.25zM125 327h14.25v1h-14.25zM324.5 323h14.25v3h-14.25zM324.5 327h14.25v1h-14.25zM295 343h14.25v1h-14.25zM309.25 349h14.25v1h-14.25zM379.5 379h14.25v1h-14.25zM393.75 358h14.25v1h-14.25zM222.05 385h14.25v1h-14.25zM407.3 387h14.25v1h-14.25zM250.55 399h14.25v3h-14.25zM291 472h14.25v1h-14.25z"/>
<path fill="#2d0031" d="M345.45 157h14.25v3h-14.25zM144.85 184h14.25v1h-14.25zM173.35 169h14.25v3h-14.25zM129.7 202h14.25v1h-14.25zM158.2 216h14.25v2h-14.25zM158.2 221h14.25v2h-14.25zM471.7 209h14.25v1h-14.25zM471.7 210h14.25v2h-14.25zM128.4 236h14.25v3h-14.25zM168.75 309h14.25v1h-14.25zM322.5 368h14.25v3h-14.25zM393.05 409h14.25v2h-14.25z"/>
<path fill="#3d005b" d="M359.7 155h14.25v1h-14.25zM287.35 196h14.25v1h-14.25zM158.2 226h14.25v1h-14.25zM471.7 216h14.25v1h-14.25zM228.15 256h14.25v1h-14.25zM470.4 257h14.25v1h-14.25zM198.45 281h14.25v3h-14.25zM297 306h14.25v2h-14.25zM167.75 325h14.25v3h-14.25zM180 372h14.25v1h-14.25zM336.05 380h14.25v3h-14.25zM378.8 382h14.25v1h-14.25z"/>
<path fill="#37004b" d="M359.7 157h14.25v3h-14.25zM171.15 234h14.25v1h-14.25zM269.7 277h14.25v1h-14.25zM312.45 272h14.25v1h-14.25zM139.25 313h14.25v1h-14.25zM338.75 321h14.25v1h-14.25zM423.25 342h14.25v1h-14.25zM162.75 448h1v8h-1zM405 468h14.25v2h-14.25z"/>
<path fill="#5e01c2" d="M373.95 148h14.25v1h-14.25zM373.95 156h14.25v1h-14.25zM401.35 169h14.25v1h-14.25zM169.95 269h14.25v1h-14.25zM336.75 364h14.25v3h-14.25zM363.25 422h14.25v2h-14.25zM433.5 471h14.25v2h-14.25z"/>
<path fill="#6601d8" d="M373.95 149h14.25v1h-14.25zM315.85 186h14.25v1h-14.25zM472.6 185h14.25v1h-14.25zM428.95 219h14.25v3h-14.25zM285.15 249h14.25v3h-14.25zM356.4 252h14.25v1h-14.25zM450.05 390h14.25v3h-14.25zM478.55 386h19.75v2h-19.75zM292 422h14.25v1h-14.25zM334.75 414h14.25v1h-14.25zM248.25 460h14.25v1h-14.25z"/>
<path fill="#6e02eb" d="M373.95 157h14.25v1h-14.25zM402.45 160h14.25v1h-14.25zM142.65 237h14.25v1h-14.25zM441.9 236h14.25v1h-14.25zM484.65 242h19.75v1h-19.75zM426.45 275h14.25v1h-14.25zM336.75 373h14.25v1h-14.25zM192.25 416h14.25v2h-14.25zM192.25 426h14.25v2h-14.25z"/>
<path fill="#5d01be" d="M373.95 158h14.25v1h-14.25zM200.95 225h14.25v1h-14.25zM300.7 228h14.25v3h-14.25zM399.15 235h14.25v1h-14.25zM184.2 273h14.25v1h-14.25zM340.95 286h14.25v3h-14.25zM240 298h14.25v3h-14.25zM268.5 308h14.25v1h-14.25zM282.75 298h14.25v1h-14.25zM482.25 306h19.75v1h-19.75zM351 355h14.25v1h-14.25zM393.75 360h14.25v1h-14.25zM407.3 384h14.25v2h-14.25zM464.3 390h14.25v1h-14.25zM377.5 422h14.25v2h-14.25zM504.75 445h6.25v2h-6.25z"/>
<path fill="#6c01e6" d="M402.45 148h14.25v2h-14.25zM128.4 261h14.25v1h-14.25zM470.4 240h14.25v2h-14.25zM470.4 254h14.25v3h-14.25z"/>
<path fill="#6a01e2" d="M416.7 153h14.25v1h-14.25zM201.85 181h14.25v1h-14.25zM158.2 231h14.25v1h-14.25zM384.9 249h14.25v3h-14.25zM427.65 246h14.25v1h-14.25zM397.95 272h14.25v1h-14.25zM265.5 365h14.25v1h-14.25zM294 355h14.25v2h-14.25zM308.25 379h14.25v1h-14.25zM334.75 430h14.25v1h-14.25zM205.5 472h14.25v1h-14.25z"/>
<path fill="#6a01e1" d="M416.7 156h14.25v3h-14.25zM387.1 180h14.25v2h-14.25zM471.7 228h14.25v1h-14.25zM128.4 263h14.25v1h-14.25zM228.15 243h14.25v1h-14.25zM298.2 271h14.25v2h-14.25zM211.5 303h14.25v2h-14.25zM219.75 462h14.25v2h-14.25zM419.25 458h14.25v3h-14.25z"/>
<path fill="#6901e0" d="M416.7 159h14.25v2h-14.25zM315.85 174h14.25v2h-14.25zM401.35 166h14.25v1h-14.25zM156.9 235h14.25v1h-14.25zM156.9 238h14.25v2h-14.25zM280.75 335h14.25v1h-14.25z"/>
<path fill="#6901de" d="M416.7 161h14.25v1h-14.25zM295 337h14.25v3h-14.25zM307.55 404h14.25v3h-14.25zM248.25 474h14.25v1h-14.25z"/>
<path fill="#32003c" d="M430.95 163h14.25v1h-14.25zM158.2 211h14.25v1h-14.25zM158.2 213h14.25v2h-14.25zM485.95 209h19.75v2h-19.75zM452.75 325h14.25v3h-14.25zM467 310h14.25v2h-14.25zM134.25 471h14.25v1h-14.25z"/>
<path fill="#460076" d="M445.2 157h14.25v1h-14.25z"/>
<path fill="#52009c" d="M445.2 160h14.25v1h-14.25zM216.1 183h14.25v1h-14.25zM386.2 209h14.25v1h-14.25zM128.4 249h14.25v1h-14.25zM299.4 246h14.25v1h-14.25zM370.65 265h14.25v1h-14.25zM155.7 269h14.25v1h-14.25zM184.2 269h14.25v1h-14.25zM184.2 274h14.25v3h-14.25zM140.25 291h14.25v1h-14.25zM140.25 307h14.25v3h-14.25zM368.25 290h14.25v1h-14.25z"/>
<path fill="#450073" d="M445.2 161h14.25v2h-14.25zM429.85 169h14.25v2h-14.25zM400.45 213h14.25v1h-14.25zM397.95 274h14.25v2h-14.25zM310.25 311h14.25v1h-14.25zM378.8 392h14.25v1h-14.25zM222.05 398h14.25v1h-14.25zM264.8 402h14.25v2h-14.25z"/>
<path fill="#3c0058" d="M459.45 155h14.25v1h-14.25zM287.35 178h14.25v2h-14.25zM301.6 179h14.25v2h-14.25zM358.6 171h14.25v2h-14.25zM372.85 183h14.25v3h-14.25zM401.35 191h14.25v1h-14.25zM458.35 185h14.25v1h-14.25zM472.6 183h14.25v1h-14.25zM486.85 186h19.75v1h-19.75zM215.2 213h14.25v2h-14.25zM213.9 250h14.25v2h-14.25zM299.4 234h14.25v2h-14.25zM384.9 240h14.25v1h-14.25zM456.15 262h14.25v2h-14.25zM325.5 307h14.25v1h-14.25zM125 318h14.25v1h-14.25zM423.25 343h14.25v2h-14.25zM194.25 371h14.25v1h-14.25zM222.75 376h14.25v2h-14.25zM365.25 358h14.25v1h-14.25zM236.3 385h14.25v2h-14.25zM293.3 398h14.25v1h-14.25zM162.75 472h1v3h-1zM234 452h14.25v1h-14.25z"/>
<path fill="#400062" d="M473.7 158h14.25v2h-14.25zM401.35 170h14.25v2h-14.25zM186.7 221h14.25v3h-14.25zM357.7 226h14.25v3h-14.25zM171.15 241h14.25v1h-14.25zM256.65 251h14.25v1h-14.25zM270.9 251h14.25v2h-14.25zM399.15 250h14.25v2h-14.25zM155.7 270h14.25v1h-14.25zM184.2 285h14.25v3h-14.25zM439.5 294h14.25v2h-14.25zM139.25 312h14.25v1h-14.25zM380.5 343h14.25v3h-14.25zM237 357h14.25v2h-14.25zM393.05 388h14.25v1h-14.25zM421.55 380h14.25v2h-14.25zM236.3 403h14.25v2h-14.25zM419.25 468h14.25v3h-14.25zM462 470h14.25v1h-14.25z"/>
<path fill="#6701db" d="M473.7 161h14.25v2h-14.25zM401.35 176h14.25v1h-14.25zM429.85 197h14.25v1h-14.25zM229.45 220h14.25v2h-14.25zM329.2 201h14.25v3h-14.25zM356.4 244h14.25v2h-14.25zM441.9 244h14.25v1h-14.25zM226.95 285h14.25v1h-14.25zM241.2 288h14.25v2h-14.25zM294 376h14.25v1h-14.25zM465 379h14.25v1h-14.25zM205.5 469h14.25v2h-14.25zM333.75 444h14.25v3h-14.25z"/>
<path fill="#33003f" d="M130.6 167h14.25v3h-14.25zM344.35 177h14.25v1h-14.25zM457.45 209h14.25v2h-14.25zM242.4 253h14.25v2h-14.25zM242.4 264h14.25v2h-14.25zM470.4 266h14.25v1h-14.25zM154.5 296h14.25v1h-14.25zM325.5 290h14.25v2h-14.25z"/>
<path fill="#38004c" d="M130.6 173h14.25v1h-14.25zM173.35 168h14.25v1h-14.25zM201.85 196h14.25v1h-14.25zM258.85 196h14.25v1h-14.25zM301.6 193h14.25v1h-14.25zM429.85 166h1v8h-1zM429.85 174h1v10h-1zM186.7 200h14.25v1h-14.25zM186.7 226h14.25v2h-14.25zM272.2 215h14.25v1h-14.25zM272.2 216h14.25v1h-14.25zM484.65 263h19.75v1h-19.75zM297 293h14.25v1h-14.25zM425.25 306h14.25v2h-14.25zM380.5 346h14.25v1h-14.25zM208.5 375h14.25v3h-14.25zM393.75 361h14.25v2h-14.25zM136.55 390h14.25v3h-14.25zM222.05 399h14.25v2h-14.25zM364.55 393h14.25v2h-14.25z"/>
<path fill="#410067" d="M130.6 176h14.25v2h-14.25zM273.1 198h14.25v2h-14.25zM129.7 230h14.25v1h-14.25zM370.65 240h14.25v2h-14.25zM297 294h14.25v1h-14.25z"/>
<path fill="#2f0036" d="M130.6 180h14.25v1h-14.25zM144.85 174h14.25v1h-14.25zM344.35 171h14.25v1h-14.25zM172.45 214h14.25v1h-14.25zM443.2 203h14.25v1h-14.25zM471.7 219h14.25v1h-14.25zM140.25 296h14.25v1h-14.25zM236.3 405h14.25v1h-14.25zM378.8 399h14.25v1h-14.25z"/>
<path fill="#20001a" d="M130.6 188h14.25v2h-14.25zM291 451h14.25v2h-14.25z"/>
<path fill="#9309de" d="M130.6 197h14.25v1h-14.25zM138.25 351h14.25v1h-14.25zM248.25 438h14.25v2h-14.25zM291 450h14.25v1h-14.25zM305.25 445h14.25v3h-14.25z"/>
<path fill="#3a0050" d="M144.85 166h14.25v2h-14.25zM159.1 175h14.25v1h-14.25zM286.45 220h14.25v1h-14.25zM400.45 211h14.25v1h-14.25zM298.2 276h14.25v2h-14.25zM394.75 340h14.25v3h-14.25zM422.25 363h14.25v1h-14.25zM364.55 404h14.25v1h-14.25zM148.5 469h14.25v2h-14.25zM262.5 469h14.25v2h-14.25z"/>
<path fill="#32003e" d="M144.85 168h14.25v1h-14.25zM330.1 178h14.25v2h-14.25zM330.1 190h14.25v2h-14.25zM286.45 216h14.25v2h-14.25zM128.4 241h14.25v1h-14.25zM125 321h14.25v2h-14.25z"/>
<path fill="#52009b" d="M144.85 172h14.25v2h-14.25zM216.1 180h14.25v1h-14.25zM273.1 172h14.25v1h-14.25zM287.35 166h14.25v1h-14.25zM415.6 167h14.25v1h-14.25zM415.6 179h14.25v2h-14.25zM186.7 225h14.25v1h-14.25zM314.95 227h14.25v2h-14.25zM457.45 225h14.25v1h-14.25zM156.9 259h14.25v1h-14.25zM185.4 241h14.25v1h-14.25zM199.65 247h14.25v2h-14.25zM370.65 260h14.25v3h-14.25zM427.65 244h14.25v1h-14.25zM441.9 232h14.25v3h-14.25zM198.45 289h14.25v1h-14.25zM440.7 281h14.25v2h-14.25zM126 297h14.25v1h-14.25zM154.5 300h14.25v1h-14.25zM411 301h14.25v1h-14.25zM439.5 305h14.25v2h-14.25zM224.75 328h14.25v3h-14.25zM208.5 355h14.25v3h-14.25zM265.5 357h14.25v2h-14.25zM279.75 356h14.25v1h-14.25zM264.8 393h14.25v1h-14.25z"/>
<path fill="#a5137a" d="M144.85 196h14.25v2h-14.25zM352 332h14.25v1h-14.25zM450.05 407h14.25v1h-14.25z"/>
<path fill="#ab174e" d="M144.85 198h14.25v2h-14.25zM182 310h14.25v1h-14.25zM367.25 313h14.25v2h-14.25z"/>
<path fill="#b42000" d="M144.85 198h1v2h-1zM253.25 316h1v6h-1zM253.25 322h1v6h-1zM281.75 322h14.25v3h-14.25zM381.5 314h1v10h-1zM381.5 324h1v6h-1zM381.5 330h1v2h-1zM409 332h1v10h-1zM423.25 332h1v8h-1zM165.75 365h1v8h-1zM150.8 405h1v4h-1zM150.8 409h1v5h-1zM407.3 399h1v10h-1z"/>
<path fill="#5600a6" d="M173.35 193h14.25v2h-14.25zM216.1 177h14.25v3h-14.25zM401.35 180h14.25v3h-14.25zM472.6 169h14.25v3h-14.25zM300.7 211h14.25v3h-14.25zM371.95 205h14.25v1h-14.25zM156.9 246h14.25v1h-14.25zM171.15 238h14.25v2h-14.25zM427.65 264h14.25v1h-14.25zM312.45 269h14.25v1h-14.25zM426.45 283h14.25v2h-14.25zM354 304h14.25v2h-14.25zM368.25 294h14.25v2h-14.25zM439.5 290h14.25v1h-14.25zM223.75 333h14.25v1h-14.25zM223.75 336h14.25v1h-14.25zM238 347h14.25v1h-14.25zM222.75 368h14.25v3h-14.25zM192.25 415h14.25v1h-14.25z"/>
<path fill="#3c0056" d="M187.6 184h14.25v1h-14.25zM401.35 193h14.25v3h-14.25zM415.6 194h14.25v1h-14.25zM156.9 254h14.25v1h-14.25zM199.65 236h1v10h-1zM199.65 246h1v10h-1zM199.65 256h1v10h-1zM199.65 266h1v3h-1zM213.9 253h14.25v3h-14.25zM312.45 287h1v3h-1zM412.2 269h1v10h-1zM412.2 279h1v8h-1zM412.2 287h1v3h-1zM469.2 281h14.25v1h-14.25zM483.45 271h19.75v1h-19.75zM411 290h1v8h-1zM411 298h1v4h-1zM425.25 308h14.25v1h-14.25zM453.75 290h14.25v3h-14.25zM468 305h14.25v1h-14.25zM452.75 321h14.25v1h-14.25zM380.5 353h14.25v2h-14.25zM423.25 353h14.25v1h-14.25zM308.25 369h14.25v1h-14.25zM222.05 380h1v6h-1zM222.05 386h1v6h-1zM293.3 393h1v4h-1zM293.3 397h1v6h-1zM448.75 432h1v2h-1zM162.75 469h14.25v1h-14.25zM305.25 451h14.25v3h-14.25zM504.75 464h6.25v2h-6.25z"/>
<path fill="#4a007f" d="M187.6 199h14.25v1h-14.25zM201.85 173h14.25v1h-14.25zM372.85 186h14.25v1h-14.25zM286.45 203h14.25v2h-14.25zM357.7 211h14.25v2h-14.25zM457.45 218h14.25v1h-14.25zM165.75 376h14.25v3h-14.25zM408 367h14.25v3h-14.25zM207.8 393h14.25v1h-14.25z"/>
<path fill="#5d01bf" d="M244.6 176h14.25v1h-14.25zM258.85 191h14.25v1h-14.25zM242.4 243h14.25v1h-14.25zM282.75 300h14.25v2h-14.25zM482.25 294h19.75v1h-19.75zM165.75 366h14.25v3h-14.25zM222.75 361h14.25v2h-14.25zM248.25 456h14.25v1h-14.25z"/>
<path fill="#5a00b3" d="M244.6 181h14.25v2h-14.25zM358.6 183h14.25v3h-14.25zM372.85 197h14.25v1h-14.25zM257.95 210h14.25v1h-14.25zM342.15 232h1v10h-1zM342.15 242h1v10h-1zM342.15 252h1v6h-1zM342.15 258h1v4h-1zM342.15 262h1v4h-1zM342.15 266h1v3h-1zM413.4 254h14.25v2h-14.25zM456.15 268h14.25v1h-14.25zM383.7 281h1v4h-1zM183 290h1v10h-1zM411 302h1v4h-1zM411 306h1v4h-1zM166.75 350h1v5h-1zM252.25 341h14.25v2h-14.25zM252.25 352h14.25v3h-14.25zM266.5 334h14.25v1h-14.25zM280.75 342h14.25v3h-14.25zM423.25 341h14.25v1h-14.25zM322.5 357h14.25v3h-14.25zM250.55 410h14.25v2h-14.25zM364.55 407h1v4h-1zM364.55 411h1v3h-1zM478.55 393h1v8h-1zM149.5 414h1v4h-1zM149.5 418h1v8h-1zM149.5 426h1v8h-1zM178 414h1v10h-1zM178 424h1v8h-1zM178 432h1v2h-1zM263.5 414h1v4h-1zM263.5 418h1v4h-1zM377.5 414h1v6h-1zM377.5 420h1v10h-1zM477.25 414h1v6h-1zM477.25 420h1v10h-1zM477.25 430h1v4h-1zM219.75 437h14.25v2h-14.25zM234 434h1v4h-1zM234 438h1v8h-1zM234 446h1v6h-1zM333.75 462h1v10h-1zM333.75 472h1v3h-1z"/>
<path fill="#6501d5" d="M258.85 166h14.25v1h-14.25zM186.7 203h14.25v2h-14.25zM256.65 247h14.25v1h-14.25zM285.15 256h14.25v3h-14.25zM382.5 299h14.25v1h-14.25zM208.5 364h14.25v1h-14.25zM307.55 391h14.25v2h-14.25zM478.55 388h19.75v1h-19.75zM165.05 396h14.25v1h-14.25zM334.75 423h14.25v3h-14.25zM433.5 466h14.25v1h-14.25z"/>
<path fill="#42006a" d="M258.85 171h14.25v3h-14.25zM169.95 287h14.25v3h-14.25z"/>
<path fill="#53009f" d="M258.85 177h14.25v1h-14.25zM273.1 166h14.25v1h-14.25zM273.1 168h14.25v1h-14.25zM415.6 186h14.25v3h-14.25zM186.7 220h14.25v1h-14.25zM200.95 231h14.25v1h-14.25zM257.95 218h14.25v1h-14.25zM457.45 220h14.25v1h-14.25zM171.15 240h14.25v1h-14.25zM199.65 236h14.25v2h-14.25zM470.4 238h14.25v1h-14.25zM484.65 248h19.75v1h-19.75zM169.95 272h14.25v1h-14.25zM211.5 299h14.25v1h-14.25zM196.25 330h14.25v2h-14.25zM222.75 356h14.25v3h-14.25zM265.5 369h14.25v1h-14.25zM265.5 370h14.25v1h-14.25zM279.75 374h14.25v3h-14.25zM264.8 411h14.25v1h-14.25zM249.25 431h14.25v2h-14.25z"/>
<path fill="#5b01b5" d="M258.85 180h14.25v1h-14.25zM372.85 178h14.25v3h-14.25z"/>
<path fill="#5d01bd" d="M258.85 195h14.25v1h-14.25zM301.6 176h14.25v1h-14.25zM429.85 186h14.25v1h-14.25zM172.45 228h14.25v1h-14.25zM314.95 229h14.25v1h-14.25zM357.7 200h14.25v2h-14.25zM156.9 255h14.25v2h-14.25zM199.65 264h14.25v2h-14.25zM228.15 249h14.25v2h-14.25zM313.65 253h14.25v1h-14.25zM384.9 259h14.25v1h-14.25zM382.5 304h14.25v3h-14.25zM450.75 362h14.25v1h-14.25zM420.25 420h14.25v1h-14.25zM419.25 437h14.25v1h-14.25z"/>
<path fill="#cb4200" d="M330.1 196h14.25v2h-14.25z"/>
<path fill="#c73a00" d="M330.1 198h14.25v1h-14.25zM134.25 461h14.25v1h-14.25zM177 456h14.25v1h-14.25zM348 458h14.25v2h-14.25zM447.75 460h14.25v2h-14.25z"/>
<path fill="#cc4300" d="M330.1 199h14.25v1h-14.25zM122.3 403h14.25v1h-14.25zM478.55 409h14.25v1h-14.25zM434.5 419h14.25v2h-14.25zM148.5 457h14.25v1h-14.25zM348 464h14.25v1h-14.25zM476.25 453h14.25v2h-14.25z"/>
<path fill="#d14d00" d="M330.1 196h1v4h-1zM344.35 196h1v4h-1zM123 373h14.25v1h-14.25zM479.25 367h1v6h-1zM479.25 373h1v7h-1zM336.05 409h14.25v1h-14.25zM162.75 454h14.25v2h-14.25zM447.75 448h1v10h-1zM447.75 458h1v8h-1z"/>
<path fill="#c33400" d="M344.35 197h14.25v2h-14.25zM310.25 331h14.25v1h-14.25zM433.5 442h14.25v2h-14.25zM504.75 460h6.25v3h-6.25z"/>
<path fill="#c83b00" d="M344.35 199h14.25v1h-14.25zM134.25 460h14.25v1h-14.25z"/>
<path fill="#c43400" d="M358.6 197h14.25v1h-14.25zM336.05 407h14.25v2h-14.25zM336.05 410h14.25v2h-14.25zM348 454h14.25v2h-14.25zM433.5 437h14.25v1h-14.25z"/>
<path fill="#ca3e00" d="M358.6 198h14.25v2h-14.25zM433.5 438h14.25v2h-14.25z"/>
<path fill="#5c01ba" d="M372.85 188h14.25v1h-14.25zM272.2 227h14.25v1h-14.25zM428.95 213h14.25v1h-14.25zM485.95 229h19.75v2h-19.75zM356.4 254h14.25v2h-14.25zM427.65 248h14.25v3h-14.25zM426.45 271h14.25v2h-14.25zM183 290h14.25v2h-14.25zM266.5 336h14.25v3h-14.25zM266.5 339h14.25v1h-14.25zM266.5 342h14.25v3h-14.25zM280.75 345h14.25v1h-14.25zM251.25 358h14.25v2h-14.25zM279.75 366h14.25v1h-14.25zM379.5 372h14.25v2h-14.25zM136.55 388h14.25v2h-14.25zM263.5 416h14.25v3h-14.25zM349 415h14.25v1h-14.25zM219.75 471h14.25v3h-14.25z"/>
<path fill="#7202f2" d="M387.1 166h14.25v2h-14.25zM342.15 252h14.25v1h-14.25zM456.15 242h14.25v1h-14.25zM311.25 291h14.25v1h-14.25zM479.25 378h19.75v2h-19.75zM450.05 380h14.25v1h-14.25zM321.8 398h14.25v1h-14.25zM249.25 414h14.25v2h-14.25zM477.25 431h14.25v2h-14.25zM134.25 435h14.25v3h-14.25zM205.5 464h14.25v1h-14.25z"/>
<path fill="#6f02ee" d="M429.85 184h14.25v2h-14.25zM171.15 257h14.25v1h-14.25z"/>
<path fill="#7502f7" d="M429.85 198h14.25v2h-14.25zM327.9 253h14.25v1h-14.25zM327.9 262h14.25v2h-14.25zM484.65 237h19.75v1h-19.75zM283.95 288h14.25v1h-14.25zM396.75 307h14.25v2h-14.25zM410 310h14.25v3h-14.25zM165.75 364h14.25v2h-14.25zM336.05 386h14.25v3h-14.25zM336.05 392h14.25v1h-14.25zM136.55 400h14.25v1h-14.25zM250.55 412h14.25v2h-14.25zM378.8 412h14.25v1h-14.25zM421.55 408h14.25v2h-14.25zM435.8 401h14.25v3h-14.25zM135.25 430h14.25v1h-14.25zM235 414h14.25v1h-14.25zM349 430h14.25v2h-14.25zM477.25 419h14.25v2h-14.25zM376.5 460h14.25v2h-14.25z"/>
<path fill="#a2118e" d="M444.1 196h14.25v3h-14.25zM437.5 339h14.25v1h-14.25z"/>
<path fill="#a21193" d="M444.1 199h14.25v1h-14.25zM450.05 405h14.25v1h-14.25zM235 431h14.25v1h-14.25zM291 467h14.25v1h-14.25zM390.75 459h14.25v1h-14.25z"/>
<path fill="#bb2800" d="M458.35 198h14.25v1h-14.25zM211.5 305h14.25v1h-14.25zM267.5 324h14.25v1h-14.25zM410 326h14.25v1h-14.25zM435.8 404h14.25v1h-14.25zM134.25 467h14.25v1h-14.25zM262.5 437h14.25v1h-14.25zM462 452h1v8h-1zM462 460h1v4h-1z"/>
<path fill="#b92500" d="M458.35 199h14.25v1h-14.25zM424.25 323h14.25v1h-14.25zM123 376h14.25v2h-14.25zM123 379h14.25v1h-14.25zM137.25 376h14.25v3h-14.25zM464.3 385h14.25v2h-14.25zM435.8 405h14.25v2h-14.25zM249.25 429h14.25v1h-14.25zM504.75 457h6.25v1h-6.25z"/>
<path fill="#b82400" d="M472.6 197h14.25v3h-14.25zM211.5 306h14.25v2h-14.25zM239 328h14.25v3h-14.25zM281.75 329h14.25v1h-14.25zM296 327h14.25v1h-14.25zM310.25 326h14.25v1h-14.25zM424.25 324h14.25v2h-14.25zM321.8 397h1v10h-1zM321.8 407h1v7h-1zM478.55 401h1v6h-1zM478.55 407h1v7h-1zM504.75 458h6.25v1h-6.25z"/>
<path fill="#4c0086" d="M486.85 196h19.75v3h-19.75zM257.95 216h14.25v2h-14.25zM257.95 231h14.25v1h-14.25zM286.45 230h14.25v2h-14.25zM343.45 208h14.25v3h-14.25zM457.45 200h14.25v3h-14.25zM185.4 234h14.25v3h-14.25zM185.4 258h14.25v1h-14.25zM242.4 261h14.25v1h-14.25zM285.15 239h14.25v3h-14.25zM413.4 258h14.25v1h-14.25zM413.4 261h14.25v2h-14.25zM127.2 270h14.25v3h-14.25zM255.45 274h14.25v1h-14.25zM297 308h14.25v1h-14.25zM453.75 305h14.25v1h-14.25zM481.25 313h19.75v2h-19.75zM195.25 335h14.25v2h-14.25zM180 360h14.25v3h-14.25zM351 371h14.25v1h-14.25zM379.5 368h14.25v3h-14.25zM422.25 362h14.25v1h-14.25zM150.8 383h14.25v1h-14.25zM193.55 381h14.25v2h-14.25zM264.8 381h14.25v1h-14.25zM407.3 380h14.25v2h-14.25zM421.55 390h14.25v1h-14.25zM193.55 400h14.25v3h-14.25zM219.75 464h14.25v2h-14.25z"/>
<path fill="#bd2a00" d="M486.85 199h19.75v1h-19.75zM267.5 320h14.25v3h-14.25zM281.75 328h14.25v1h-14.25zM464.3 380h1v8h-1zM136.55 403h1v10h-1zM350.3 399h1v6h-1zM162.75 466h14.25v1h-14.25zM162.75 466h1v6h-1zM177 464h1v10h-1zM348 461h14.25v1h-14.25zM447.75 466h1v4h-1z"/>
<path fill="#2a002c" d="M143.95 207h14.25v2h-14.25zM353 326h14.25v2h-14.25zM452.75 310h14.25v1h-14.25zM264.8 405h14.25v3h-14.25zM364.55 400h14.25v1h-14.25z"/>
<path fill="#33003e" d="M158.2 200h14.25v3h-14.25zM172.45 210h14.25v1h-14.25zM169.95 277h14.25v2h-14.25zM169.95 279h14.25v1h-14.25zM165.05 393h14.25v1h-14.25zM362.25 467h14.25v2h-14.25zM405 460h14.25v2h-14.25z"/>
<path fill="#23001f" d="M158.2 215h14.25v1h-14.25zM351 369h14.25v1h-14.25z"/>
<path fill="#200019" d="M158.2 218h14.25v3h-14.25z"/>
<path fill="#6c02e7" d="M158.2 227h14.25v2h-14.25zM171.15 264h14.25v3h-14.25z"/>
<path fill="#7602f8" d="M172.45 221h14.25v3h-14.25zM329.2 213h14.25v3h-14.25zM342.15 251h14.25v1h-14.25zM197.25 293h14.25v2h-14.25zM254.25 293h14.25v1h-14.25zM166.75 354h14.25v1h-14.25zM151.5 360h14.25v3h-14.25zM336.75 379h14.25v1h-14.25zM351 361h14.25v1h-14.25zM421.55 406h14.25v1h-14.25zM435.8 398h14.25v2h-14.25zM464.3 393h14.25v2h-14.25zM178 425h14.25v3h-14.25zM120 434h14.25v3h-14.25z"/>
<path fill="#340043" d="M200.95 200h14.25v2h-14.25zM371.95 213h14.25v2h-14.25zM185.4 259h14.25v1h-14.25zM242.4 248h14.25v2h-14.25z"/>
<path fill="#7d04fe" d="M229.45 204h14.25v1h-14.25zM436.5 362h14.25v1h-14.25zM450.75 355h14.25v2h-14.25zM377.5 430h1v4h-1zM505.75 414h1v8h-1zM505.75 422h1v10h-1zM505.75 432h1v2h-1z"/>
<path fill="#510099" d="M229.45 213h14.25v1h-14.25zM228.15 232h14.25v1h-14.25zM311.25 299h14.25v3h-14.25zM224.75 331h14.25v1h-14.25zM136.55 383h14.25v3h-14.25z"/>
<path fill="#510095" d="M243.7 212h14.25v2h-14.25z"/>
<path fill="#6601d9" d="M300.7 231h14.25v1h-14.25z"/>
<path fill="#ce4700" d="M329.2 200h14.25v1h-14.25zM436.5 373h14.25v2h-14.25zM148.5 462h14.25v3h-14.25zM462 455h14.25v1h-14.25z"/>
<path fill="#8004ff" d="M329.2 228h14.25v3h-14.25zM327.9 232h14.25v3h-14.25zM327.9 250h14.25v3h-14.25zM327.9 266h14.25v2h-14.25zM152.5 333h14.25v3h-14.25zM451.75 351h14.25v1h-14.25zM351 363h14.25v1h-14.25zM365.25 369h14.25v1h-14.25zM121 416h14.25v3h-14.25zM177 445h14.25v3h-14.25zM205.5 435h14.25v2h-14.25zM248.25 444h14.25v2h-14.25zM291 447h14.25v3h-14.25zM291 464h14.25v1h-14.25zM376.5 437h14.25v1h-14.25zM390.75 447h14.25v2h-14.25zM476.25 443h14.25v1h-14.25z"/>
<path fill="#3d0058" d="M357.7 213h14.25v1h-14.25zM399.15 249h14.25v1h-14.25zM467 313h14.25v2h-14.25z"/>
<path fill="#7f04ff" d="M371.95 200h14.25v1h-14.25zM142.65 243h14.25v1h-14.25zM327.9 248h14.25v1h-14.25zM327.9 249h14.25v1h-14.25zM152.5 332h14.25v1h-14.25zM465 363h14.25v1h-14.25zM479.25 355h19.75v3h-19.75zM479.25 358h19.75v1h-19.75zM464.3 398h14.25v1h-14.25zM177 437h14.25v1h-14.25zM205.5 446h14.25v2h-14.25zM276.75 434h14.25v1h-14.25zM291 453h14.25v2h-14.25zM419.25 446h14.25v3h-14.25zM504.75 444h6.25v1h-6.25z"/>
<path fill="#6501d6" d="M414.7 212h14.25v1h-14.25zM156.9 234h14.25v1h-14.25zM156.9 240h14.25v1h-14.25zM283.95 269h14.25v1h-14.25zM425.25 295h14.25v1h-14.25zM321.8 380h14.25v2h-14.25zM390.75 471h14.25v1h-14.25zM476.25 473h14.25v1h-14.25z"/>
<path fill="#7102f0" d="M457.45 227h14.25v3h-14.25zM471.7 227h14.25v1h-14.25zM342.15 253h14.25v3h-14.25zM470.4 242h14.25v3h-14.25zM197.25 290h14.25v1h-14.25zM282.75 308h14.25v2h-14.25zM394.75 338h14.25v2h-14.25zM336.75 359h14.25v3h-14.25zM435.8 400h14.25v1h-14.25zM306.25 428h14.25v3h-14.25zM205.5 458h14.25v2h-14.25zM219.75 447h14.25v2h-14.25z"/>
<path fill="#280027" d="M471.7 206h14.25v2h-14.25zM471.7 214h14.25v1h-14.25z"/>
<path fill="#6e02ea" d="M142.65 236h14.25v1h-14.25zM171.15 245h14.25v3h-14.25zM255.45 287h14.25v1h-14.25zM237 370h14.25v1h-14.25zM336.75 368h14.25v1h-14.25zM191.25 466h14.25v3h-14.25zM248.25 467h14.25v2h-14.25z"/>
<path fill="#6c01e7" d="M156.9 244h14.25v2h-14.25zM211.5 293h14.25v1h-14.25zM268.5 303h14.25v2h-14.25zM336.75 358h14.25v1h-14.25zM419.25 461h14.25v2h-14.25z"/>
<path fill="#350046" d="M213.9 260h14.25v2h-14.25zM412.2 282h14.25v1h-14.25zM423.25 348h14.25v1h-14.25zM264.8 392h14.25v1h-14.25zM250.55 404h14.25v3h-14.25z"/>
<path fill="#39004d" d="M242.4 247h14.25v1h-14.25zM453.75 298h14.25v1h-14.25zM438.5 319h14.25v2h-14.25z"/>
<path fill="#8104ff" d="M299.4 261h14.25v1h-14.25zM327.9 260h14.25v2h-14.25zM327.9 268h14.25v1h-14.25zM153.5 331h14.25v1h-14.25zM152.5 345h14.25v2h-14.25zM152.5 354h14.25v1h-14.25zM151.5 355h14.25v2h-14.25zM336.75 362h14.25v2h-14.25zM365.25 377h14.25v3h-14.25zM465 362h14.25v1h-14.25zM479.25 363h19.75v3h-19.75zM478.55 389h19.75v1h-19.75zM121 414h14.25v2h-14.25zM220.75 425h14.25v1h-14.25zM334.75 433h14.25v1h-14.25zM291 459h14.25v2h-14.25zM333.75 447h14.25v2h-14.25zM504.75 449h6.25v3h-6.25z"/>
<path fill="#6c01e5" d="M299.4 264h14.25v2h-14.25zM470.4 252h14.25v2h-14.25zM426.45 269h14.25v1h-14.25zM179.3 382h14.25v3h-14.25zM419.25 463h14.25v1h-14.25z"/>
<path fill="#7502f8" d="M327.9 257h14.25v3h-14.25zM484.65 235h19.75v2h-19.75zM138.25 342h14.25v2h-14.25zM336.75 374h14.25v1h-14.25zM349 414h14.25v1h-14.25zM349 420h14.25v1h-14.25zM305.25 454h14.25v2h-14.25z"/>
<path fill="#5a00b2" d="M413.4 237h14.25v1h-14.25zM255.45 269h14.25v3h-14.25z"/>
<path fill="#7302f3" d="M456.15 235h14.25v1h-14.25zM240 302h14.25v3h-14.25zM507.05 407h3.95v1h-3.95zM149.5 431h14.25v1h-14.25z"/>
<path fill="#6e02ec" d="M456.15 236h14.25v1h-14.25zM305.25 467h14.25v2h-14.25zM305.25 474h14.25v1h-14.25z"/>
<path fill="#7102f2" d="M484.65 243h19.75v1h-19.75zM235 418h14.25v1h-14.25z"/>
<path fill="#bc2800" d="M141.45 279h14.25v2h-14.25zM136.55 408h14.25v1h-14.25z"/>
<path fill="#bc2900" d="M141.45 281h14.25v2h-14.25zM410 320h14.25v2h-14.25zM410 330h14.25v1h-14.25zM424.25 331h14.25v1h-14.25zM123 374h14.25v2h-14.25zM137.25 379h14.25v1h-14.25zM136.55 406h14.25v2h-14.25zM191.25 457h14.25v2h-14.25zM490.5 458h14.25v2h-14.25z"/>
<path fill="#b21d15" d="M155.7 283h14.25v2h-14.25z"/>
<path fill="#a71471" d="M155.7 285h14.25v1h-14.25zM182 314h14.25v1h-14.25zM381.5 321h14.25v2h-14.25zM352 336h14.25v1h-14.25z"/>
<path fill="#9b0dba" d="M155.7 281h1v8h-1zM183 300h1v8h-1zM183 308h1v2h-1zM182 310h1v6h-1zM182 316h1v10h-1zM451.75 346h14.25v1h-14.25zM450.05 406h14.25v1h-14.25zM277.75 428h1v4h-1zM277.75 432h1v2h-1zM491.5 414h1v8h-1zM491.5 422h1v10h-1zM491.5 432h1v2h-1zM319.5 454h14.25v2h-14.25z"/>
<path fill="#3b0056" d="M198.45 270h14.25v2h-14.25z"/>
<path fill="#1c0013" d="M369.45 269h14.25v1h-14.25zM421.55 413h14.25v1h-14.25z"/>
<path fill="#7002f0" d="M369.45 280h14.25v2h-14.25zM268.5 296h14.25v3h-14.25zM135.25 429h14.25v1h-14.25zM320.5 428h14.25v3h-14.25zM219.75 445h14.25v1h-14.25z"/>
<path fill="#8a06f6" d="M397.95 283h14.25v1h-14.25zM121 419h14.25v2h-14.25zM306.25 433h14.25v1h-14.25zM377.5 432h14.25v1h-14.25zM391.75 428h14.25v1h-14.25zM448.75 422h14.25v2h-14.25zM276.75 468h14.25v1h-14.25zM319.5 443h14.25v3h-14.25zM362.25 436h14.25v1h-14.25z"/>
<path fill="#d75c00" d="M183 297h14.25v1h-14.25zM434.5 417h14.25v2h-14.25zM434.5 423h14.25v2h-14.25zM434.5 425h14.25v2h-14.25z"/>
<path fill="#de6f00" d="M183 298h14.25v1h-14.25zM368.25 304h14.25v1h-14.25z"/>
<path fill="#d96000" d="M183 299h14.25v2h-14.25zM381.5 310h14.25v1h-14.25zM322.5 372h14.25v2h-14.25z"/>
<path fill="#aa1756" d="M183 301h14.25v3h-14.25zM224.75 323h14.25v1h-14.25zM239 318h14.25v1h-14.25z"/>
<path fill="#af1a31" d="M183 304h14.25v2h-14.25zM376.5 440h14.25v1h-14.25z"/>
<path fill="#a3118b" d="M183 306h14.25v2h-14.25zM381.5 314h14.25v3h-14.25zM467 330h14.25v2h-14.25zM337.75 340h14.25v2h-14.25zM352 344h14.25v3h-14.25zM480.25 354h19.75v1h-19.75zM362.25 455h14.25v1h-14.25z"/>
<path fill="#b31f08" d="M183 308h14.25v2h-14.25z"/>
<path fill="#e37f00" d="M197.25 302h14.25v3h-14.25zM368.25 305h14.25v2h-14.25z"/>
<path fill="#d65800" d="M197.25 305h14.25v2h-14.25zM434.5 431h14.25v1h-14.25z"/>
<path fill="#e38000" d="M197.25 307h14.25v1h-14.25z"/>
<path fill="#9d0ead" d="M197.25 308h14.25v2h-14.25zM196.25 313h14.25v1h-14.25zM137.25 358h14.25v3h-14.25zM421.55 384h14.25v2h-14.25z"/>
<path fill="#e48300" d="M197.25 300h1v10h-1zM381.5 310h1v4h-1z"/>
<path fill="#e68a00" d="M211.5 308h14.25v1h-14.25z"/>
<path fill="#e17900" d="M211.5 309h14.25v1h-14.25zM410 313h14.25v3h-14.25z"/>
<path fill="#a5137b" d="M211.5 306h1v4h-1zM410 318h1v6h-1zM410 324h1v8h-1zM462 464h1v8h-1z"/>
<path fill="#a21190" d="M225.75 302h14.25v2h-14.25zM253.25 318h14.25v3h-14.25z"/>
<path fill="#960bd0" d="M225.75 304h14.25v2h-14.25zM163.75 432h14.25v2h-14.25zM319.5 451h14.25v1h-14.25z"/>
<path fill="#b52000" d="M225.75 306h14.25v2h-14.25zM504.75 463h6.25v1h-6.25z"/>
<path fill="#af1a32" d="M225.75 308h14.25v2h-14.25zM281.75 330h14.25v1h-14.25zM395.75 326h14.25v1h-14.25z"/>
<path fill="#960bd2" d="M240 308h14.25v1h-14.25zM466 336h14.25v1h-14.25zM391.75 415h14.25v3h-14.25zM348 436h14.25v3h-14.25z"/>
<path fill="#7502f6" d="M311.25 290h14.25v1h-14.25z"/>
<path fill="#300037" d="M325.5 308h14.25v2h-14.25zM467 328h14.25v2h-14.25z"/>
<path fill="#dc6900" d="M368.25 307h14.25v3h-14.25zM210.5 310h14.25v2h-14.25z"/>
<path fill="#e89200" d="M368.25 302h1v6h-1zM368.25 308h1v2h-1zM410 318h14.25v2h-14.25z"/>
<path fill="#7302f5" d="M425.25 309h14.25v1h-14.25zM482.25 302h19.75v2h-19.75zM138.25 335h14.25v2h-14.25zM150.8 401h14.25v1h-14.25zM276.75 454h14.25v3h-14.25zM348 473h14.25v2h-14.25z"/>
<path fill="#990cc3" d="M125 328h14.25v1h-14.25zM124 336h14.25v2h-14.25zM323.5 340h14.25v1h-14.25zM263.5 431h14.25v1h-14.25zM391.75 431h14.25v1h-14.25zM148.5 447h14.25v3h-14.25zM305.25 448h14.25v2h-14.25z"/>
<path fill="#950ad5" d="M125 329h14.25v1h-14.25zM124 348h14.25v1h-14.25zM451.75 338h14.25v1h-14.25zM121 431h14.25v1h-14.25zM206.5 423h14.25v1h-14.25zM191.25 450h14.25v2h-14.25zM319.5 450h14.25v1h-14.25z"/>
<path fill="#9a0dbd" d="M125 330h14.25v1h-14.25zM323.5 332h14.25v3h-14.25zM206.5 432h14.25v2h-14.25zM462 450h14.25v1h-14.25z"/>
<path fill="#990cc7" d="M125 331h14.25v1h-14.25z"/>
<path fill="#2b002e" d="M139.25 317h14.25v1h-14.25zM450.75 367h14.25v3h-14.25zM165.05 383h14.25v1h-14.25zM136.55 393h14.25v1h-14.25zM264.8 398h14.25v1h-14.25zM162.75 472h14.25v1h-14.25z"/>
<path fill="#9d0eaf" d="M153.5 317h14.25v3h-14.25zM336.05 385h14.25v1h-14.25zM191.25 434h1v6h-1zM191.25 440h1v4h-1zM191.25 444h1v10h-1zM276.75 464h1v8h-1zM305.25 434h1v8h-1zM305.25 442h1v6h-1zM348 434h1v8h-1zM348 442h1v4h-1zM348 446h1v10h-1zM405 434h1v4h-1zM405 438h1v4h-1zM405 442h1v10h-1z"/>
<path fill="#9b0db8" d="M153.5 320h14.25v2h-14.25zM124 341h14.25v1h-14.25zM305.25 450h14.25v1h-14.25zM348 435h14.25v1h-14.25z"/>
<path fill="#ae1a39" d="M153.5 322h14.25v1h-14.25z"/>
<path fill="#9f0fa6" d="M153.5 324h14.25v2h-14.25zM196.25 326h14.25v2h-14.25zM437.5 348h14.25v2h-14.25z"/>
<path fill="#970bcc" d="M167.75 328h14.25v1h-14.25zM450.05 408h14.25v2h-14.25zM262.5 450h14.25v3h-14.25z"/>
<path fill="#9c0db4" d="M167.75 331h14.25v1h-14.25zM504.75 438h6.25v2h-6.25z"/>
<path fill="#8505fd" d="M167.75 326h1v6h-1zM166.75 332h1v10h-1zM166.75 342h1v8h-1zM279.75 367h1v4h-1zM121 432h14.25v2h-14.25zM220.75 429h14.25v1h-14.25zM263.5 422h1v4h-1zM263.5 426h1v8h-1zM491.5 423h14.25v1h-14.25zM177 438h14.25v1h-14.25zM276.75 446h14.25v1h-14.25z"/>
<path fill="#a41282" d="M182 311h14.25v3h-14.25zM196.25 310h14.25v1h-14.25zM149.5 433h14.25v1h-14.25z"/>
<path fill="#ac1844" d="M182 315h14.25v3h-14.25zM448.75 429h14.25v2h-14.25zM504.75 437h6.25v1h-6.25z"/>
<path fill="#a7146e" d="M182 318h14.25v1h-14.25zM239 310h14.25v1h-14.25zM352 354h14.25v1h-14.25z"/>
<path fill="#ad1941" d="M182 319h14.25v1h-14.25zM390.75 455h14.25v2h-14.25z"/>
<path fill="#a8156a" d="M182 320h14.25v2h-14.25zM380.5 332h14.25v1h-14.25z"/>
<path fill="#a61474" d="M182 322h14.25v1h-14.25zM466 344h14.25v1h-14.25zM466 348h14.25v1h-14.25zM390.75 460h14.25v1h-14.25z"/>
<path fill="#b31f09" d="M182 323h14.25v1h-14.25zM407.3 407h14.25v1h-14.25z"/>
<path fill="#a5137e" d="M182 324h14.25v1h-14.25zM362.25 456h14.25v1h-14.25z"/>
<path fill="#a41284" d="M182 325h14.25v2h-14.25zM407.3 404h14.25v2h-14.25zM463 414h14.25v1h-14.25zM490.5 434h14.25v2h-14.25z"/>
<path fill="#aa165b" d="M196.25 311h14.25v2h-14.25zM224.75 321h14.25v2h-14.25zM253.25 321h14.25v2h-14.25zM381.5 320h14.25v1h-14.25z"/>
<path fill="#a9165f" d="M196.25 314h14.25v2h-14.25zM235 422h14.25v1h-14.25zM249.25 430h14.25v1h-14.25z"/>
<path fill="#a21192" d="M196.25 316h14.25v3h-14.25zM350.3 386h14.25v1h-14.25zM150.8 411h14.25v2h-14.25z"/>
<path fill="#a1109a" d="M196.25 319h14.25v1h-14.25zM466 337h14.25v1h-14.25zM206.5 430h14.25v2h-14.25zM262.5 446h14.25v2h-14.25z"/>
<path fill="#a11098" d="M196.25 320h14.25v2h-14.25zM124 349h14.25v2h-14.25zM352 353h14.25v1h-14.25z"/>
<path fill="#9d0eb2" d="M196.25 322h14.25v1h-14.25z"/>
<path fill="#a3118c" d="M196.25 323h14.25v1h-14.25zM381.5 324h14.25v1h-14.25z"/>
<path fill="#ae1a33" d="M196.25 324h14.25v1h-14.25zM210.5 316h14.25v3h-14.25zM423.25 340h14.25v1h-14.25z"/>
<path fill="#a3118d" d="M196.25 325h14.25v1h-14.25zM409 339h14.25v1h-14.25z"/>
<path fill="#ac1849" d="M196.25 328h14.25v2h-14.25z"/>
<path fill="#af1a30" d="M196.25 310h1v4h-1zM196.25 314h1v10h-1zM196.25 324h1v8h-1zM210.5 310h1v10h-1zM210.5 320h1v8h-1zM353 330h1v2h-1zM437.5 332h1v4h-1zM437.5 336h1v10h-1zM437.5 346h1v4h-1zM490.5 456h1v4h-1zM490.5 460h1v4h-1z"/>
<path fill="#af1b2b" d="M210.5 312h14.25v2h-14.25zM267.5 323h14.25v1h-14.25z"/>
<path fill="#aa165a" d="M210.5 314h14.25v2h-14.25zM352 333h14.25v2h-14.25zM235 430h14.25v1h-14.25z"/>
<path fill="#a9165e" d="M210.5 319h14.25v2h-14.25zM407.3 402h14.25v1h-14.25z"/>
<path fill="#a5137f" d="M210.5 321h14.25v1h-14.25zM466 339h14.25v3h-14.25zM293.3 410h14.25v2h-14.25z"/>
<path fill="#ad1942" d="M210.5 322h14.25v1h-14.25zM352 340h14.25v1h-14.25zM291 441h14.25v2h-14.25z"/>
<path fill="#9e0fa8" d="M210.5 324h14.25v1h-14.25zM504.75 434h6.25v2h-6.25z"/>
<path fill="#9c0db5" d="M210.5 325h14.25v3h-14.25zM166.75 333h14.25v1h-14.25zM123 359h14.25v2h-14.25z"/>
<path fill="#e48200" d="M224.75 310h14.25v1h-14.25zM310.25 321h14.25v2h-14.25zM410 316h14.25v2h-14.25z"/>
<path fill="#de7000" d="M224.75 311h14.25v2h-14.25zM434.5 427h14.25v1h-14.25z"/>
<path fill="#da6400" d="M224.75 313h14.25v2h-14.25zM239 312h14.25v1h-14.25zM296 315h14.25v1h-14.25zM296 321h14.25v2h-14.25zM137.25 371h14.25v2h-14.25z"/>
<path fill="#9e0fa9" d="M224.75 315h14.25v3h-14.25zM367.25 310h14.25v1h-14.25zM337.75 339h14.25v1h-14.25z"/>
<path fill="#a00fa0" d="M224.75 318h14.25v2h-14.25zM323.5 338h14.25v2h-14.25z"/>
<path fill="#a31289" d="M224.75 320h14.25v1h-14.25zM352 351h14.25v2h-14.25zM409 334h14.25v2h-14.25z"/>
<path fill="#ac184a" d="M224.75 324h14.25v3h-14.25zM350.3 385h14.25v1h-14.25z"/>
<path fill="#ad193c" d="M224.75 327h14.25v1h-14.25zM352 347h14.25v1h-14.25zM150.8 405h14.25v3h-14.25zM362.25 457h14.25v1h-14.25zM490.5 438h14.25v1h-14.25z"/>
<path fill="#9c0eb4" d="M239 311h14.25v1h-14.25zM352 341h14.25v2h-14.25zM235 425h14.25v3h-14.25zM319.5 453h14.25v1h-14.25z"/>
<path fill="#e58700" d="M239 313h14.25v1h-14.25z"/>
<path fill="#e48100" d="M239 314h14.25v1h-14.25zM296 319h14.25v2h-14.25zM381.5 311h14.25v3h-14.25z"/>
<path fill="#df7200" d="M239 315h14.25v3h-14.25z"/>
<path fill="#b52100" d="M239 319h14.25v2h-14.25zM239 321h14.25v2h-14.25zM410 327h14.25v3h-14.25zM295 332h14.25v1h-14.25zM122.3 406h14.25v1h-14.25zM134.25 466h14.25v1h-14.25zM191.25 453h14.25v3h-14.25zM504.75 459h6.25v1h-6.25z"/>
<path fill="#b62200" d="M239 323h14.25v1h-14.25zM435.8 407h14.25v3h-14.25zM162.75 467h14.25v2h-14.25zM490.5 460h14.25v3h-14.25z"/>
<path fill="#ad193d" d="M239 324h14.25v2h-14.25z"/>
<path fill="#b01c22" d="M239 326h14.25v2h-14.25z"/>
<path fill="#d55700" d="M239 310h1v10h-1zM122.3 402h14.25v1h-14.25zM120 453h14.25v1h-14.25zM162.75 456h1v10h-1z"/>
<path fill="#a11096" d="M239 320h1v4h-1zM239 324h1v4h-1zM324.5 330h1v2h-1zM138.25 352h1v3h-1zM437.5 344h14.25v1h-14.25zM451.75 336h14.25v2h-14.25zM480.25 334h19.75v3h-19.75zM480.25 332h1v4h-1zM480.25 336h1v4h-1zM480.25 340h1v6h-1zM321.8 380h1v6h-1zM206.5 424h1v6h-1zM206.5 430h1v4h-1z"/>
<path fill="#db6600" d="M253.25 313h14.25v2h-14.25z"/>
<path fill="#dd6c00" d="M253.25 315h14.25v2h-14.25z"/>
<path fill="#e48400" d="M253.25 317h14.25v1h-14.25z"/>
<path fill="#a5137c" d="M253.25 323h14.25v1h-14.25zM337.75 347h14.25v2h-14.25zM293.3 408h14.25v1h-14.25zM291 434h14.25v2h-14.25zM390.75 452h14.25v3h-14.25z"/>
<path fill="#b21e14" d="M253.25 324h14.25v2h-14.25z"/>
<path fill="#b21d16" d="M253.25 326h14.25v3h-14.25zM395.75 321h14.25v2h-14.25z"/>
<path fill="#e37d00" d="M267.5 315h14.25v3h-14.25z"/>
<path fill="#e89100" d="M267.5 318h14.25v2h-14.25z"/>
<path fill="#ac1843" d="M267.5 325h14.25v2h-14.25z"/>
<path fill="#ba2700" d="M267.5 327h14.25v1h-14.25zM319.5 467h14.25v1h-14.25zM447.75 467h14.25v2h-14.25zM504.75 453h6.25v1h-6.25z"/>
<path fill="#b21e12" d="M267.5 328h14.25v3h-14.25zM267.5 331h14.25v1h-14.25z"/>
<path fill="#e99600" d="M281.75 317h14.25v1h-14.25z"/>
<path fill="#ea9700" d="M281.75 318h14.25v2h-14.25z"/>
<path fill="#e89000" d="M281.75 320h14.25v1h-14.25z"/>
<path fill="#bb2700" d="M281.75 321h14.25v1h-14.25zM123 378h14.25v1h-14.25z"/>
<path fill="#b72300" d="M281.75 325h14.25v3h-14.25zM410 331h14.25v1h-14.25zM424.25 320h14.25v3h-14.25zM424.25 327h14.25v3h-14.25zM136.55 412h14.25v2h-14.25zM191.25 462h14.25v2h-14.25zM319.5 464h14.25v2h-14.25zM447.75 465h14.25v2h-14.25zM504.75 454h6.25v3h-6.25z"/>
<path fill="#ac1847" d="M281.75 331h14.25v1h-14.25zM367.25 324h14.25v1h-14.25zM367.25 327h14.25v2h-14.25zM437.5 335h14.25v2h-14.25zM165.05 385h14.25v1h-14.25z"/>
<path fill="#e27b00" d="M296 316h14.25v1h-14.25zM395.75 311h14.25v1h-14.25z"/>
<path fill="#e07500" d="M296 317h14.25v2h-14.25zM395.75 313h14.25v2h-14.25z"/>
<path fill="#b31e0d" d="M296 323h14.25v2h-14.25z"/>
<path fill="#ae1a37" d="M296 325h14.25v2h-14.25zM367.25 311h14.25v2h-14.25zM395.75 327h14.25v3h-14.25zM291 438h14.25v2h-14.25z"/>
<path fill="#ab1753" d="M296 328h14.25v2h-14.25zM352 338h14.25v2h-14.25z"/>
<path fill="#aa1755" d="M296 330h14.25v2h-14.25z"/>
<path fill="#e58400" d="M310.25 317h14.25v3h-14.25zM424.25 319h14.25v1h-14.25z"/>
<path fill="#dd6d00" d="M310.25 320h14.25v1h-14.25z"/>
<path fill="#ae193a" d="M310.25 323h14.25v1h-14.25z"/>
<path fill="#b11d1d" d="M310.25 324h14.25v1h-14.25zM463 430h14.25v1h-14.25z"/>
<path fill="#ac1845" d="M310.25 325h14.25v1h-14.25zM150.8 403h14.25v2h-14.25z"/>
<path fill="#b31e10" d="M310.25 327h14.25v1h-14.25z"/>
<path fill="#ac1846" d="M310.25 328h14.25v3h-14.25zM381.5 329h14.25v1h-14.25zM381.5 331h14.25v1h-14.25zM148.5 436h14.25v2h-14.25z"/>
<path fill="#a0109b" d="M324.5 330h14.25v1h-14.25z"/>
<path fill="#270026" d="M338.75 326h14.25v1h-14.25zM150.8 388h14.25v1h-14.25zM177 452h14.25v1h-14.25z"/>
<path fill="#9b0db9" d="M338.75 330h14.25v2h-14.25zM279.75 369h14.25v3h-14.25z"/>
<path fill="#a21194" d="M353 330h14.25v2h-14.25zM352 337h14.25v1h-14.25z"/>
<path fill="#aa1659" d="M367.25 315h14.25v1h-14.25z"/>
<path fill="#a81569" d="M367.25 316h14.25v1h-14.25zM395.75 323h14.25v2h-14.25zM362.25 461h14.25v2h-14.25zM462 442h14.25v3h-14.25z"/>
<path fill="#a5137d" d="M367.25 318h14.25v3h-14.25zM395.75 318h14.25v1h-14.25z"/>
<path fill="#a7146d" d="M367.25 321h14.25v1h-14.25zM467 328h1v4h-1zM193.55 401h1v4h-1zM450.05 401h1v10h-1zM450.05 411h1v3h-1zM291 465h14.25v2h-14.25z"/>
<path fill="#ad193e" d="M367.25 322h14.25v2h-14.25zM208.5 368h14.25v2h-14.25zM462 465h14.25v3h-14.25zM462 468h14.25v2h-14.25z"/>
<path fill="#9c0db6" d="M367.25 325h14.25v2h-14.25zM166.75 346h14.25v2h-14.25zM491.5 428h14.25v2h-14.25zM191.25 439h14.25v3h-14.25zM405 447h14.25v3h-14.25z"/>
<path fill="#a31288" d="M381.5 317h14.25v2h-14.25zM504.75 436h6.25v1h-6.25z"/>
<path fill="#a7146f" d="M381.5 319h14.25v1h-14.25zM380.5 337h14.25v1h-14.25zM409 338h14.25v1h-14.25zM377.5 433h14.25v1h-14.25zM291 436h14.25v2h-14.25z"/>
<path fill="#ae193b" d="M381.5 323h14.25v1h-14.25z"/>
<path fill="#ad1940" d="M381.5 325h14.25v1h-14.25zM150.8 384h14.25v2h-14.25z"/>
<path fill="#a81563" d="M381.5 326h14.25v1h-14.25z"/>
<path fill="#a41286" d="M381.5 327h14.25v2h-14.25zM380.5 333h14.25v2h-14.25zM423.25 333h14.25v2h-14.25zM437.5 345h14.25v3h-14.25z"/>
<path fill="#b31f0b" d="M381.5 330h14.25v1h-14.25z"/>
<path fill="#e07400" d="M395.75 310h14.25v1h-14.25z"/>
<path fill="#df7100" d="M395.75 312h14.25v1h-14.25z"/>
<path fill="#e68b00" d="M395.75 315h14.25v3h-14.25z"/>
<path fill="#b31e0c" d="M395.75 319h14.25v2h-14.25z"/>
<path fill="#b41f05" d="M395.75 325h14.25v1h-14.25z"/>
<path fill="#ad193b" d="M395.75 330h14.25v1h-14.25z"/>
<path fill="#a41285" d="M395.75 331h14.25v1h-14.25zM148.5 467h14.25v1h-14.25z"/>
<path fill="#ba2600" d="M410 322h14.25v1h-14.25zM122.3 412h14.25v1h-14.25zM177 465h14.25v2h-14.25zM490.5 455h14.25v1h-14.25z"/>
<path fill="#b41f04" d="M410 323h14.25v3h-14.25zM424.25 330h14.25v1h-14.25z"/>
<path fill="#db6700" d="M410 310h1v8h-1z"/>
<path fill="#e78c00" d="M424.25 315h14.25v2h-14.25z"/>
<path fill="#e78d00" d="M424.25 317h14.25v2h-14.25z"/>
<path fill="#ae1939" d="M424.25 326h14.25v1h-14.25z"/>
<path fill="#ac1848" d="M438.5 329h14.25v2h-14.25z"/>
<path fill="#a9165c" d="M438.5 331h14.25v1h-14.25zM305.25 438h14.25v2h-14.25z"/>
<path fill="#a61378" d="M452.75 329h14.25v2h-14.25z"/>
<path fill="#9309dd" d="M452.75 331h14.25v1h-14.25zM124 344h14.25v1h-14.25zM491.5 432h14.25v2h-14.25z"/>
<path fill="#980bcb" d="M481.25 329h19.75v2h-19.75zM466 343h14.25v1h-14.25zM391.75 430h14.25v1h-14.25zM348 442h14.25v2h-14.25z"/>
<path fill="#8e08ed" d="M481.25 331h19.75v1h-19.75zM124 332h14.25v3h-14.25zM166.75 334h14.25v1h-14.25zM323.5 347h14.25v2h-14.25zM163.75 419h14.25v1h-14.25zM163.75 422h14.25v2h-14.25zM220.75 423h14.25v2h-14.25zM263.5 422h14.25v2h-14.25zM391.75 421h14.25v2h-14.25zM491.5 419h14.25v1h-14.25zM291 444h14.25v1h-14.25zM319.5 458h14.25v1h-14.25zM405 440h14.25v1h-14.25zM405 445h14.25v2h-14.25z"/>
<path fill="#950ad7" d="M124 335h14.25v1h-14.25zM124 346h14.25v1h-14.25zM352 332h1v10h-1zM352 342h1v8h-1zM352 350h1v5h-1zM250.55 385h14.25v2h-14.25zM293.3 401h14.25v2h-14.25zM293.3 403h14.25v1h-14.25zM191.25 445h14.25v1h-14.25zM248.25 442h14.25v2h-14.25zM362.25 448h1v10h-1zM362.25 458h1v10h-1zM490.5 434h1v8h-1z"/>
<path fill="#960ad3" d="M124 338h14.25v3h-14.25zM166.75 338h14.25v1h-14.25zM448.75 425h14.25v1h-14.25zM491.5 424h14.25v2h-14.25z"/>
<path fill="#8e08ee" d="M124 342h14.25v2h-14.25zM166.75 335h14.25v2h-14.25zM206.5 428h14.25v1h-14.25zM248.25 446h14.25v1h-14.25z"/>
<path fill="#9008e7" d="M124 345h14.25v1h-14.25zM279.75 368h14.25v1h-14.25zM363.25 430h14.25v3h-14.25zM448.75 414h14.25v1h-14.25zM248.25 441h14.25v1h-14.25zM291 445h14.25v1h-14.25zM319.5 449h14.25v1h-14.25zM462 434h1v8h-1zM462 442h1v4h-1zM462 446h1v6h-1z"/>
<path fill="#9e0eac" d="M124 347h14.25v1h-14.25zM480.25 342h19.75v2h-19.75z"/>
<path fill="#960bd1" d="M124 353h14.25v1h-14.25zM220.75 414h14.25v1h-14.25zM505.75 420h5.25v1h-5.25zM276.75 466h14.25v1h-14.25zM390.75 444h14.25v3h-14.25z"/>
<path fill="#950ad6" d="M124 354h14.25v1h-14.25zM337.75 333h14.25v2h-14.25zM321.8 382h14.25v1h-14.25zM163.75 430h14.25v2h-14.25z"/>
<path fill="#9f0fa5" d="M138.25 352h14.25v1h-14.25zM293.3 404h14.25v2h-14.25z"/>
<path fill="#9a0cbe" d="M138.25 353h14.25v2h-14.25z"/>
<path fill="#8204ff" d="M152.5 340h14.25v2h-14.25zM408 370h14.25v2h-14.25zM436.5 355h14.25v2h-14.25zM479.25 360h19.75v2h-19.75zM463 415h14.25v2h-14.25zM463 420h14.25v1h-14.25zM205.5 444h14.25v2h-14.25zM319.5 438h14.25v2h-14.25z"/>
<path fill="#980bca" d="M166.75 337h14.25v1h-14.25zM123 361h14.25v3h-14.25zM148.5 450h14.25v2h-14.25zM348 444h14.25v1h-14.25zM405 438h14.25v2h-14.25z"/>
<path fill="#9d0eb1" d="M166.75 339h14.25v3h-14.25zM337.75 342h14.25v2h-14.25zM462 451h14.25v1h-14.25z"/>
<path fill="#9209e2" d="M166.75 342h14.25v2h-14.25zM323.5 335h14.25v2h-14.25zM163.75 416h14.25v3h-14.25zM348 439h14.25v3h-14.25zM390.75 440h14.25v3h-14.25z"/>
<path fill="#950ad4" d="M166.75 345h14.25v1h-14.25zM137.25 356h14.25v2h-14.25zM405 450h14.25v3h-14.25z"/>
<path fill="#ae1a34" d="M295 333h14.25v2h-14.25zM437.5 340h14.25v3h-14.25zM148.5 468h14.25v1h-14.25z"/>
<path fill="#9a0cbf" d="M323.5 337h14.25v1h-14.25zM277.75 432h14.25v2h-14.25z"/>
<path fill="#a0109c" d="M323.5 344h14.25v2h-14.25z"/>
<path fill="#8906f8" d="M323.5 352h14.25v1h-14.25zM322.5 360h14.25v3h-14.25zM406 417h14.25v1h-14.25zM405 442h14.25v2h-14.25z"/>
<path fill="#8405fd" d="M323.5 353h14.25v2h-14.25zM319.5 440h14.25v2h-14.25zM362.25 450h14.25v2h-14.25z"/>
<path fill="#9f0fa2" d="M337.75 332h14.25v1h-14.25zM480.25 339h19.75v3h-19.75z"/>
<path fill="#a61377" d="M337.75 335h14.25v2h-14.25zM337.75 344h14.25v3h-14.25zM505.75 428h5.25v1h-5.25z"/>
<path fill="#9b0dbb" d="M337.75 337h14.25v2h-14.25zM451.75 342h14.25v2h-14.25zM451.75 347h14.25v1h-14.25zM480.25 346h19.75v3h-19.75zM235 429h14.25v1h-14.25zM263.5 426h14.25v1h-14.25zM462 446h14.25v1h-14.25z"/>
<path fill="#a71470" d="M337.75 349h14.25v2h-14.25zM148.5 438h14.25v1h-14.25z"/>
<path fill="#9b0dbd" d="M337.75 351h14.25v1h-14.25z"/>
<path fill="#9f0fa7" d="M337.75 352h14.25v1h-14.25zM451.75 333h14.25v2h-14.25zM505.75 429h5.25v1h-5.25z"/>
<path fill="#a91560" d="M352 335h14.25v1h-14.25zM165.75 369h14.25v1h-14.25z"/>
<path fill="#a0109d" d="M352 343h14.25v1h-14.25z"/>
<path fill="#a9165b" d="M352 348h14.25v1h-14.25zM409 340h14.25v2h-14.25z"/>
<path fill="#a61376" d="M352 349h14.25v1h-14.25zM305.25 440h14.25v1h-14.25z"/>
<path fill="#a81566" d="M352 350h14.25v1h-14.25z"/>
<path fill="#b41f07" d="M380.5 335h14.25v2h-14.25z"/>
<path fill="#ab184c" d="M380.5 338h14.25v2h-14.25z"/>
<path fill="#af1b2d" d="M409 332h14.25v1h-14.25zM134.25 464h14.25v2h-14.25z"/>
<path fill="#a91562" d="M409 333h14.25v1h-14.25zM234 458h14.25v1h-14.25z"/>
<path fill="#a21191" d="M409 336h14.25v2h-14.25zM423.25 332h14.25v1h-14.25zM336.05 383h14.25v1h-14.25zM463 431h14.25v1h-14.25z"/>
<path fill="#ae1a35" d="M423.25 335h14.25v1h-14.25z"/>
<path fill="#a2118f" d="M423.25 336h14.25v2h-14.25zM408 367h1v8h-1zM264.8 380h1v10h-1zM407.3 403h14.25v1h-14.25zM450.05 403h14.25v2h-14.25zM220.75 414h1v10h-1zM220.75 424h1v8h-1zM220.75 432h1v2h-1z"/>
<path fill="#a7146c" d="M423.25 338h14.25v2h-14.25zM148.5 434h14.25v1h-14.25z"/>
<path fill="#a3118e" d="M437.5 332h14.25v3h-14.25z"/>
<path fill="#a0109e" d="M437.5 337h14.25v2h-14.25zM336.05 384h14.25v1h-14.25zM206.5 429h14.25v1h-14.25zM462 439h14.25v2h-14.25z"/>
<path fill="#a11095" d="M451.75 335h14.25v1h-14.25zM451.75 345h14.25v1h-14.25zM466 332h14.25v2h-14.25zM148.5 466h14.25v1h-14.25zM177 442h14.25v1h-14.25z"/>
<path fill="#a11097" d="M451.75 339h14.25v3h-14.25zM262.5 448h14.25v2h-14.25z"/>
<path fill="#9a0cc1" d="M451.75 344h14.25v1h-14.25zM276.75 450h14.25v1h-14.25z"/>
<path fill="#8c07f3" d="M451.75 332h1v4h-1zM451.75 336h1v6h-1zM451.75 342h1v8h-1zM293.3 403h1v10h-1z"/>
<path fill="#970bcd" d="M466 334h14.25v2h-14.25zM123 358h14.25v1h-14.25z"/>
<path fill="#980bc9" d="M466 338h14.25v1h-14.25zM193.55 405h14.25v2h-14.25zM462 441h14.25v1h-14.25z"/>
<path fill="#a41281" d="M466 345h14.25v2h-14.25z"/>
<path fill="#990cc2" d="M466 347h14.25v1h-14.25zM235 432h14.25v2h-14.25z"/>
<path fill="#9209e3" d="M480.25 337h19.75v1h-19.75z"/>
<path fill="#9008e9" d="M480.25 344h19.75v2h-19.75zM163.75 414h14.25v1h-14.25zM448.75 415h14.25v1h-14.25z"/>
<path fill="#8305fe" d="M480.25 349h19.75v2h-19.75zM121 423h14.25v3h-14.25zM406 425h14.25v3h-14.25zM448.75 418h14.25v2h-14.25zM448.75 427h14.25v2h-14.25zM463 417h14.25v3h-14.25zM463 424h14.25v3h-14.25zM319.5 436h14.25v2h-14.25zM376.5 446h14.25v1h-14.25z"/>
<path fill="#980cc7" d="M480.25 352h19.75v1h-19.75zM123 364h14.25v1h-14.25z"/>
<path fill="#9a0cc0" d="M480.25 346h1v9h-1zM479.25 355h1v8h-1zM463 414h1v8h-1zM463 422h1v8h-1zM463 430h1v4h-1zM491.5 414h14.25v1h-14.25zM177 434h1v10h-1zM177 444h1v10h-1zM276.75 434h1v8h-1zM276.75 442h1v8h-1z"/>
<path fill="#990cc6" d="M123 355h14.25v3h-14.25zM348 434h14.25v1h-14.25zM462 436h14.25v1h-14.25z"/>
<path fill="#d85f00" d="M123 370h14.25v2h-14.25zM137.25 373h14.25v1h-14.25z"/>
<path fill="#dc6a00" d="M123 372h14.25v1h-14.25zM434.5 428h14.25v3h-14.25zM148.5 455h14.25v2h-14.25z"/>
<path fill="#9309dc" d="M137.25 355h14.25v1h-14.25z"/>
<path fill="#d25000" d="M137.25 370h14.25v1h-14.25z"/>
<path fill="#b21e10" d="M137.25 374h14.25v2h-14.25z"/>
<path fill="#cd4400" d="M322.5 371h14.25v1h-14.25z"/>
<path fill="#7402f5" d="M322.5 374h14.25v2h-14.25zM336.05 399h14.25v2h-14.25zM178 422h14.25v1h-14.25zM162.75 449h14.25v2h-14.25zM333.75 469h14.25v3h-14.25z"/>
<path fill="#19000f" d="M351 370h14.25v1h-14.25z"/>
<path fill="#1f0018" d="M365.25 362h14.25v3h-14.25z"/>
<path fill="#cf4800" d="M436.5 371h14.25v2h-14.25zM122.3 404h14.25v2h-14.25z"/>
<path fill="#cb4100" d="M436.5 375h14.25v1h-14.25zM350.3 405h14.25v2h-14.25zM333.75 457h14.25v3h-14.25zM333.75 462h14.25v1h-14.25zM348 463h14.25v1h-14.25zM462 454h14.25v1h-14.25z"/>
<path fill="#d24f00" d="M436.5 376h14.25v1h-14.25z"/>
<path fill="#cf4900" d="M450.75 370h14.25v1h-14.25zM434.5 414h14.25v3h-14.25zM120 455h14.25v1h-14.25z"/>
<path fill="#cd4500" d="M450.75 371h14.25v1h-14.25zM479.25 372h19.75v1h-19.75zM478.55 411h14.25v1h-14.25zM134.25 455h14.25v1h-14.25zM162.75 463h14.25v3h-14.25zM447.75 453h14.25v2h-14.25zM476.25 458h14.25v1h-14.25z"/>
<path fill="#d35200" d="M450.75 372h14.25v1h-14.25zM120 459h14.25v2h-14.25zM333.75 460h14.25v1h-14.25z"/>
<path fill="#c83c00" d="M450.75 373h14.25v1h-14.25zM321.8 404h14.25v2h-14.25zM336.05 403h14.25v3h-14.25zM148.5 459h14.25v1h-14.25zM333.75 454h14.25v1h-14.25zM333.75 463h14.25v1h-14.25zM447.75 458h14.25v2h-14.25z"/>
<path fill="#d45300" d="M450.75 374h14.25v1h-14.25z"/>
<path fill="#c63800" d="M450.75 375h14.25v1h-14.25zM162.75 456h14.25v1h-14.25zM162.75 461h14.25v2h-14.25zM177 464h14.25v1h-14.25zM348 460h14.25v1h-14.25zM447.75 457h14.25v1h-14.25z"/>
<path fill="#980cc8" d="M479.25 362h19.75v1h-19.75zM193.55 403h14.25v2h-14.25z"/>
<path fill="#cf4a00" d="M479.25 370h19.75v2h-19.75z"/>
<path fill="#c23200" d="M479.25 373h19.75v1h-19.75zM350.3 411h14.25v2h-14.25z"/>
<path fill="#c13000" d="M479.25 374h19.75v1h-19.75zM191.25 456h14.25v1h-14.25zM476.25 459h14.25v2h-14.25zM490.5 456h14.25v1h-14.25z"/>
<path fill="#d04a00" d="M479.25 375h19.75v3h-19.75zM120 454h14.25v1h-14.25z"/>
<path fill="#b01c21" d="M165.05 384h14.25v1h-14.25z"/>
<path fill="#6801db" d="M236.3 380h1v8h-1zM292 432h1v2h-1zM448.75 414h1v4h-1zM448.75 418h1v6h-1zM448.75 424h1v8h-1zM205.5 467h14.25v2h-14.25zM248.25 434h1v6h-1zM248.25 440h1v6h-1zM248.25 446h1v10h-1zM362.25 434h1v6h-1zM362.25 440h1v8h-1z"/>
<path fill="#8605fc" d="M250.55 382h14.25v2h-14.25zM391.75 429h14.25v1h-14.25z"/>
<path fill="#8e08ec" d="M250.55 384h14.25v1h-14.25zM264.8 383h14.25v2h-14.25zM121 429h14.25v2h-14.25zM191.25 435h14.25v2h-14.25zM319.5 456h14.25v1h-14.25z"/>
<path fill="#990cc4" d="M321.8 384h14.25v2h-14.25zM263.5 432h14.25v2h-14.25zM134.25 449h14.25v2h-14.25z"/>
<path fill="#bf2d00" d="M122.3 407h14.25v2h-14.25zM136.55 401h14.25v2h-14.25zM464.3 408h14.25v2h-14.25zM433.5 447h14.25v3h-14.25z"/>
<path fill="#c02f00" d="M122.3 409h14.25v3h-14.25zM165.05 411h14.25v3h-14.25zM464.3 406h14.25v1h-14.25z"/>
<path fill="#21001b" d="M122.3 413h14.25v1h-14.25zM162.75 470h14.25v1h-14.25zM348 451h14.25v3h-14.25z"/>
<path fill="#bf2c00" d="M136.55 403h14.25v3h-14.25z"/>
<path fill="#b11d1a" d="M136.55 409h14.25v3h-14.25z"/>
<path fill="#23001e" d="M136.55 413h1v1h-1zM236.3 413h1v1h-1zM250.55 413h1v1h-1zM279.05 413h1v1h-1zM464.3 413h1v1h-1zM162.75 473h14.25v2h-14.25z"/>
<path fill="#aa1658" d="M150.8 408h14.25v1h-14.25z"/>
<path fill="#b11c20" d="M150.8 409h14.25v2h-14.25z"/>
<path fill="#c12f00" d="M165.05 403h14.25v2h-14.25zM165.05 408h14.25v1h-14.25zM321.8 406h14.25v2h-14.25zM350.3 409h14.25v2h-14.25zM333.75 454h1v8h-1z"/>
<path fill="#c93e00" d="M165.05 405h14.25v3h-14.25zM120 461h14.25v1h-14.25zM348 462h14.25v1h-14.25zM462 461h14.25v2h-14.25z"/>
<path fill="#be2c00" d="M165.05 409h14.25v2h-14.25zM478.55 405h14.25v1h-14.25zM177 459h14.25v1h-14.25z"/>
<path fill="#ce4600" d="M165.05 401h1v8h-1zM165.05 409h1v5h-1zM350.3 405h1v6h-1zM350.3 411h1v3h-1zM162.75 457h14.25v2h-14.25zM177 454h1v10h-1zM348 456h1v4h-1zM348 460h1v8h-1z"/>
<path fill="#240021" d="M207.8 413h14.25v1h-14.25z"/>
<path fill="#14000a" d="M222.05 413h14.25v1h-14.25zM350.3 413h14.25v1h-14.25z"/>
<path fill="#16000c" d="M222.05 413h1v1h-1zM293.3 413h1v1h-1zM421.55 413h1v1h-1z"/>
<path fill="#1e0016" d="M236.3 413h14.25v1h-14.25zM378.8 413h14.25v1h-14.25zM407.3 413h14.25v1h-14.25zM464.3 413h14.25v1h-14.25z"/>
<path fill="#1a0010" d="M279.05 413h14.25v1h-14.25z"/>
<path fill="#a61472" d="M293.3 406h14.25v2h-14.25z"/>
<path fill="#9f0fa4" d="M293.3 409h14.25v1h-14.25zM263.5 424h14.25v2h-14.25zM406 414h14.25v3h-14.25zM462 437h14.25v1h-14.25z"/>
<path fill="#a61379" d="M293.3 412h14.25v2h-14.25z"/>
<path fill="#c53700" d="M321.8 402h14.25v2h-14.25zM336.05 412h14.25v2h-14.25zM490.5 457h14.25v1h-14.25z"/>
<path fill="#bf2e00" d="M321.8 408h14.25v1h-14.25z"/>
<path fill="#ca4000" d="M321.8 409h14.25v2h-14.25zM464.3 405h1v8h-1zM434.5 433h14.25v1h-14.25zM134.25 452h14.25v2h-14.25z"/>
<path fill="#c33300" d="M321.8 411h14.25v2h-14.25zM134.25 454h14.25v1h-14.25zM447.75 463h14.25v2h-14.25zM462 452h14.25v2h-14.25zM490.5 463h14.25v1h-14.25z"/>
<path fill="#250021" d="M321.8 413h14.25v1h-14.25zM507.05 413h3.95v1h-3.95zM134.25 472h14.25v2h-14.25z"/>
<path fill="#250023" d="M336.05 395h14.25v2h-14.25z"/>
<path fill="#c63700" d="M336.05 401h14.25v2h-14.25zM478.55 406h14.25v3h-14.25zM191.25 454h1v4h-1zM191.25 458h1v10h-1z"/>
<path fill="#c73900" d="M336.05 406h14.25v1h-14.25zM464.3 410h14.25v1h-14.25zM134.25 456h14.25v1h-14.25zM177 457h14.25v1h-14.25z"/>
<path fill="#ac184b" d="M350.3 402h14.25v2h-14.25zM362.25 453h14.25v1h-14.25z"/>
<path fill="#b31f07" d="M350.3 404h14.25v1h-14.25z"/>
<path fill="#c53600" d="M350.3 407h14.25v1h-14.25zM490.5 464h14.25v1h-14.25z"/>
<path fill="#c93d00" d="M350.3 408h14.25v1h-14.25zM333.75 455h14.25v2h-14.25zM447.75 462h14.25v1h-14.25zM476.25 456h14.25v2h-14.25z"/>
<path fill="#290029" d="M364.55 397h14.25v1h-14.25z"/>
<path fill="#b31f0a" d="M407.3 406h14.25v1h-14.25zM148.5 439h14.25v1h-14.25z"/>
<path fill="#b11d19" d="M435.8 410h14.25v2h-14.25z"/>
<path fill="#b41f03" d="M435.8 412h14.25v1h-14.25z"/>
<path fill="#1e0017" d="M435.8 413h14.25v1h-14.25z"/>
<path fill="#970bcf" d="M450.05 410h14.25v3h-14.25zM276.75 467h14.25v1h-14.25z"/>
<path fill="#24001f" d="M450.05 413h14.25v1h-14.25z"/>
<path fill="#c43500" d="M464.3 407h14.25v1h-14.25zM462 463h14.25v2h-14.25zM476.25 461h14.25v1h-14.25z"/>
<path fill="#be2b00" d="M464.3 411h14.25v2h-14.25z"/>
<path fill="#bd2b00" d="M478.55 402h14.25v3h-14.25z"/>
<path fill="#cb4000" d="M478.55 410h14.25v1h-14.25zM434.5 421h14.25v2h-14.25zM433.5 450h14.25v2h-14.25z"/>
<path fill="#1e0015" d="M492.8 413h14.25v1h-14.25z"/>
<path fill="#8806f9" d="M121 421h14.25v2h-14.25zM163.75 415h14.25v1h-14.25zM463 421h14.25v2h-14.25zM491.5 430h14.25v2h-14.25zM177 434h14.25v2h-14.25zM177 444h14.25v1h-14.25zM248.25 440h14.25v1h-14.25zM305.25 442h14.25v2h-14.25zM348 445h14.25v2h-14.25z"/>
<path fill="#8b07f4" d="M121 426h14.25v2h-14.25zM220.75 417h14.25v1h-14.25zM406 433h14.25v1h-14.25zM505.75 417h5.25v3h-5.25zM505.75 424h5.25v2h-5.25zM505.75 430h5.25v3h-5.25zM191.25 444h14.25v1h-14.25zM362.25 448h14.25v2h-14.25z"/>
<path fill="#8b07f3" d="M163.75 420h14.25v2h-14.25zM391.75 432h14.25v1h-14.25zM191.25 434h14.25v1h-14.25zM191.25 437h14.25v1h-14.25z"/>
<path fill="#9109e4" d="M163.75 427h14.25v2h-14.25zM220.75 430h14.25v2h-14.25zM505.75 414h5.25v3h-5.25zM248.25 447h14.25v3h-14.25z"/>
<path fill="#8706fa" d="M220.75 415h14.25v2h-14.25zM220.75 426h14.25v3h-14.25zM448.75 424h14.25v1h-14.25zM362.25 439h14.25v3h-14.25zM376.5 444h14.25v1h-14.25z"/>
<path fill="#8906f7" d="M220.75 418h14.25v1h-14.25zM362.25 442h14.25v1h-14.25zM376.5 438h14.25v1h-14.25z"/>
<path fill="#8405fe" d="M220.75 421h14.25v2h-14.25z"/>
<path fill="#8505fc" d="M220.75 432h14.25v1h-14.25zM177 448h14.25v3h-14.25zM319.5 434h14.25v2h-14.25zM319.5 442h14.25v1h-14.25zM362.25 446h14.25v2h-14.25z"/>
<path fill="#a81565" d="M235 421h14.25v1h-14.25z"/>
<path fill="#9c0db7" d="M235 423h14.25v2h-14.25zM462 438h14.25v1h-14.25zM504.75 441h6.25v3h-6.25z"/>
<path fill="#9e0eab" d="M235 428h14.25v1h-14.25z"/>
<path fill="#ab174f" d="M235 424h1v10h-1zM504.75 440h6.25v1h-6.25z"/>
<path fill="#b41f06" d="M249.25 428h14.25v1h-14.25z"/>
<path fill="#8605fb" d="M249.25 433h14.25v1h-14.25zM277.75 431h14.25v1h-14.25zM391.75 424h14.25v1h-14.25zM448.75 417h14.25v1h-14.25zM463 423h14.25v1h-14.25zM177 441h14.25v1h-14.25zM291 456h14.25v3h-14.25zM390.75 443h14.25v1h-14.25z"/>
<path fill="#8f08ec" d="M263.5 429h14.25v2h-14.25z"/>
<path fill="#ad1843" d="M292 433h14.25v1h-14.25z"/>
<path fill="#8d07f1" d="M320.5 433h14.25v1h-14.25zM390.75 438h14.25v2h-14.25z"/>
<path fill="#8706fb" d="M377.5 428h14.25v1h-14.25zM406 421h14.25v1h-14.25z"/>
<path fill="#8e07ee" d="M377.5 429h14.25v1h-14.25zM262.5 443h14.25v3h-14.25z"/>
<path fill="#8a07f5" d="M391.75 414h14.25v1h-14.25z"/>
<path fill="#9b0dbc" d="M391.75 418h14.25v2h-14.25zM191.25 446h14.25v2h-14.25z"/>
<path fill="#8f08e9" d="M391.75 425h14.25v1h-14.25zM319.5 463h14.25v1h-14.25z"/>
<path fill="#8806fa" d="M391.75 426h14.25v2h-14.25zM177 443h14.25v1h-14.25zM191.25 438h14.25v1h-14.25zM405 436h14.25v2h-14.25z"/>
<path fill="#8b07f5" d="M391.75 433h14.25v1h-14.25zM448.75 416h14.25v1h-14.25zM291 461h14.25v3h-14.25z"/>
<path fill="#8205fe" d="M406 418h14.25v3h-14.25zM463 427h14.25v3h-14.25zM291 446h14.25v1h-14.25z"/>
<path fill="#a00fa1" d="M406 422h14.25v3h-14.25zM291 440h14.25v1h-14.25z"/>
<path fill="#d75b00" d="M434.5 432h14.25v1h-14.25z"/>
<path fill="#a1109b" d="M463 432h14.25v2h-14.25z"/>
<path fill="#8a06f5" d="M505.75 426h5.25v2h-5.25zM276.75 441h14.25v3h-14.25z"/>
<path fill="#a11099" d="M505.75 433h5.25v1h-5.25z"/>
<path fill="#21001a" d="M120 452h14.25v1h-14.25z"/>
<path fill="#d35100" d="M120 456h14.25v3h-14.25zM333.75 464h14.25v1h-14.25z"/>
<path fill="#cc4400" d="M120 462h14.25v3h-14.25zM433.5 444h14.25v2h-14.25zM462 460h14.25v1h-14.25z"/>
<path fill="#c02e00" d="M134.25 457h14.25v2h-14.25zM134.25 459h14.25v1h-14.25zM433.5 440h14.25v2h-14.25zM490.5 452h14.25v3h-14.25z"/>
<path fill="#ca3f00" d="M134.25 462h14.25v2h-14.25zM177 458h14.25v1h-14.25zM177 460h14.25v1h-14.25zM177 462h14.25v2h-14.25zM433.5 446h14.25v1h-14.25zM462 456h14.25v1h-14.25z"/>
<path fill="#b82500" d="M134.25 468h14.25v1h-14.25z"/>
<path fill="#240020" d="M134.25 470h14.25v1h-14.25z"/>
<path fill="#aa1657" d="M148.5 435h14.25v1h-14.25z"/>
<path fill="#a7146b" d="M148.5 440h14.25v3h-14.25z"/>
<path fill="#a81567" d="M148.5 443h14.25v1h-14.25zM362.25 458h14.25v2h-14.25z"/>
<path fill="#990cc5" d="M148.5 444h14.25v3h-14.25zM319.5 457h14.25v1h-14.25z"/>
<path fill="#d55800" d="M148.5 452h14.25v3h-14.25z"/>
<path fill="#c23100" d="M148.5 458h14.25v1h-14.25z"/>
<path fill="#d04b00" d="M148.5 460h14.25v2h-14.25zM476.25 455h14.25v1h-14.25z"/>
<path fill="#ae1a38" d="M148.5 465h14.25v1h-14.25z"/>
<path fill="#d45500" d="M162.75 459h14.25v2h-14.25z"/>
<path fill="#cc4200" d="M177 453h14.25v3h-14.25z"/>
<path fill="#c33200" d="M177 461h14.25v1h-14.25zM348 456h14.25v2h-14.25zM447.75 455h14.25v2h-14.25z"/>
<path fill="#b62100" d="M177 467h14.25v3h-14.25zM191.25 459h14.25v3h-14.25z"/>
<path fill="#a3118a" d="M234 459h14.25v1h-14.25z"/>
<path fill="#8806f8" d="M248.25 450h14.25v3h-14.25zM376.5 450h14.25v2h-14.25z"/>
<path fill="#b01b28" d="M262.5 434h14.25v3h-14.25z"/>
<path fill="#af1b2e" d="M262.5 438h14.25v2h-14.25z"/>
<path fill="#af1b2a" d="M262.5 440h14.25v3h-14.25z"/>
<path fill="#980cc9" d="M305.25 434h14.25v3h-14.25z"/>
<path fill="#9d0eb0" d="M305.25 437h14.25v1h-14.25z"/>
<path fill="#1f0017" d="M319.5 452h14.25v1h-14.25z"/>
<path fill="#9c0db8" d="M319.5 459h14.25v2h-14.25z"/>
<path fill="#b11c1f" d="M319.5 466h14.25v1h-14.25z"/>
<path fill="#b72200" d="M319.5 468h14.25v2h-14.25z"/>
<path fill="#d25100" d="M333.75 461h14.25v1h-14.25z"/>
<path fill="#970bd0" d="M348 448h14.25v1h-14.25z"/>
<path fill="#8f08eb" d="M348 449h14.25v1h-14.25z"/>
<path fill="#a51379" d="M362.25 454h14.25v1h-14.25z"/>
<path fill="#9c0eb3" d="M362.25 460h14.25v1h-14.25z"/>
<path fill="#a41287" d="M362.25 463h14.25v2h-14.25z"/>
<path fill="#a61375" d="M376.5 434h14.25v1h-14.25z"/>
<path fill="#b01c26" d="M376.5 439h14.25v1h-14.25z"/>
<path fill="#960ad4" d="M390.75 436h14.25v1h-14.25z"/>
<path fill="#b11d1b" d="M390.75 457h14.25v1h-14.25z"/>
<path fill="#af1b2c" d="M390.75 458h14.25v1h-14.25z"/>
<path fill="#a91563" d="M390.75 461h14.25v2h-14.25z"/>
<path fill="#ae1a36" d="M390.75 463h14.25v1h-14.25z"/>
<path fill="#c63900" d="M433.5 434h14.25v3h-14.25z"/>
<path fill="#9d0eae" d="M462 434h14.25v2h-14.25zM490.5 442h14.25v1h-14.25z"/>
<path fill="#a91660" d="M462 445h14.25v1h-14.25z"/>
<path fill="#a5127f" d="M462 447h14.25v3h-14.25z"/>
<path fill="#d04c00" d="M462 457h14.25v3h-14.25zM476.25 462h14.25v3h-14.25z"/>
<path fill="#22001d" d="M476.25 452h14.25v1h-14.25z"/>
<path fill="#ad193f" d="M490.5 439h14.25v3h-14.25z"/>
<path fill="#6d02e7" d="M490.5 445h14.25v1h-14.25z"/>
<path fill="#260023" d="M504.75 452h6.25v1h-6.25z"/>
<rect x="129" y="120" width="4" height="26" fill="#000"/>
<rect x="509" y="120" width="4" height="26" fill="#000"/>
<rect x="129" y="146" width="2.7" height="20" fill="#000"/>
<rect x="507.7" y="146" width="5.3" height="20" fill="#000"/>
<rect x="129" y="166" width="1.6" height="34" fill="#000"/>
<rect x="506.6" y="166" width="6.4" height="34" fill="#000"/>
<rect x="129" y="200" width="0.7" height="32" fill="#000"/>
<rect x="505.7" y="200" width="7.3" height="32" fill="#000"/>
<rect x="504.4" y="232" width="8.6" height="37" fill="#000"/>
<rect x="503.2" y="269" width="9.8" height="21" fill="#000"/>
<rect x="502" y="290" width="11" height="20" fill="#000"/>
<rect x="501" y="310" width="12" height="22" fill="#000"/>
<rect x="500" y="332" width="13" height="23" fill="#000"/>
<rect x="499" y="355" width="14" height="25" fill="#000"/>
<rect x="498.3" y="380" width="14.7" height="13" fill="#000"/>
<rect x="134.25" y="434" width="1" height="18" fill="#cf4900"/>
<rect x="148.5" y="434" width="1" height="18" fill="#cf4900"/>
<rect x="162.75" y="434" width="1" height="18" fill="#cf4900"/>
<rect x="177" y="434" width="1" height="18" fill="#cf4900"/>
<rect x="191.25" y="434" width="1" height="18" fill="#cf4900"/>
<rect x="205.5" y="434" width="1" height="18" fill="#cf4900"/>
<rect x="219.75" y="434" width="1" height="18" fill="#cf4900"/>
<rect x="234" y="434" width="1" height="18" fill="#cf4900"/>
<rect x="248.25" y="434" width="1" height="18" fill="#cf4900"/>
<rect x="262.5" y="434" width="1" height="18" fill="#cf4900"/>
<rect x="334.5" y="434" width="1" height="18" fill="#cf4900"/>
<rect x="348.75" y="434" width="1" height="18" fill="#cf4900"/>
<rect x="462" y="434" width="1" height="18" fill="#cf4900"/>
<rect x="476.25" y="434" width="1" height="18" fill="#cf4900"/>
<rect x="120" y="434" width="1" height="31" fill="#cc4300"/>
<rect x="122" y="391" width="1" height="22" fill="#c93d00"/>
<rect x="322" y="352" width="1" height="20" fill="#cc4300"/>
<rect x="437.5" y="346" width="1" height="26" fill="#cc4300"/>
<rect x="367" y="290" width="1" height="13" fill="#cf4900"/>
<rect x="211.5" y="288" width="1" height="14" fill="#d55700"/>
</svg>
<svg class="abs" style="left:0;top:0" width="642" height="567">
 <!-- key squares -->
 <rect x="452" y="124" width="19" height="19" fill="#000"/>
 <rect x="471" y="124" width="19" height="19" fill="#b42000"/>
 <rect x="490" y="124" width="19" height="19" fill="#ffff00"/>
 <!-- frame -->
 <g fill="#000" shape-rendering="crispEdges">
  <rect x="129" y="120" width="384" height="1"/>
  <rect x="129" y="465" width="384" height="1"/>
  <rect x="129" y="120" width="1" height="346"/>
  <rect x="511" y="120" width="2" height="346"/>
 </g>
 <g stroke="#000" stroke-width="1" shape-rendering="crispEdges">
  <path d="M129.5 120v8M129.5 465v-8"/><path d="M177.5 120v8M177.5 465v-8"/><path d="M225.5 120v8M225.5 465v-8"/><path d="M273.5 120v8M273.5 465v-8"/><path d="M321.5 120v8M321.5 465v-8"/><path d="M369.5 120v8M369.5 465v-8"/><path d="M417.5 120v8M417.5 465v-8"/><path d="M465.5 120v8M465.5 465v-8"/><path d="M513.5 120v8M513.5 465v-8"/><path d="M129 464.5h8M513 464.5h-8"/><path d="M129 395.5h8M513 395.5h-8"/><path d="M129 326.5h8M513 326.5h-8"/><path d="M129 257.5h8M513 257.5h-8"/><path d="M129 188.5h8M513 188.5h-8"/><path d="M129 119.5h8M513 119.5h-8"/>
 </g>
 <!-- colorbar -->
 <defs><linearGradient id="cbg" x1="0" y1="1" x2="0" y2="0"><stop offset="0.0000" stop-color="#000000"/><stop offset="0.0167" stop-color="#21001b"/><stop offset="0.0333" stop-color="#2f0035"/><stop offset="0.0500" stop-color="#39004f"/><stop offset="0.0667" stop-color="#420068"/><stop offset="0.0833" stop-color="#4a007f"/><stop offset="0.1000" stop-color="#510096"/><stop offset="0.1167" stop-color="#5700ab"/><stop offset="0.1333" stop-color="#5d01be"/><stop offset="0.1500" stop-color="#6301ce"/><stop offset="0.1667" stop-color="#6801dd"/><stop offset="0.1833" stop-color="#6d02e9"/><stop offset="0.2000" stop-color="#7202f3"/><stop offset="0.2167" stop-color="#7703f9"/><stop offset="0.2333" stop-color="#7b03fe"/><stop offset="0.2500" stop-color="#8004ff"/><stop offset="0.2667" stop-color="#8405fe"/><stop offset="0.2833" stop-color="#8806f9"/><stop offset="0.3000" stop-color="#8c07f3"/><stop offset="0.3167" stop-color="#8f08e9"/><stop offset="0.3333" stop-color="#9309dd"/><stop offset="0.3500" stop-color="#970bce"/><stop offset="0.3667" stop-color="#9a0dbe"/><stop offset="0.3833" stop-color="#9e0eab"/><stop offset="0.4000" stop-color="#a11096"/><stop offset="0.4167" stop-color="#a5127f"/><stop offset="0.4333" stop-color="#a81568"/><stop offset="0.4500" stop-color="#ab174f"/><stop offset="0.4667" stop-color="#ae1a35"/><stop offset="0.4833" stop-color="#b11d1b"/><stop offset="0.5000" stop-color="#b42000"/><stop offset="0.5167" stop-color="#b72300"/><stop offset="0.5333" stop-color="#ba2700"/><stop offset="0.5500" stop-color="#bd2a00"/><stop offset="0.5667" stop-color="#c02e00"/><stop offset="0.5833" stop-color="#c33300"/><stop offset="0.6000" stop-color="#c63700"/><stop offset="0.6167" stop-color="#c83c00"/><stop offset="0.6333" stop-color="#cb4100"/><stop offset="0.6500" stop-color="#ce4600"/><stop offset="0.6667" stop-color="#d04c00"/><stop offset="0.6833" stop-color="#d35100"/><stop offset="0.7000" stop-color="#d55700"/><stop offset="0.7167" stop-color="#d85e00"/><stop offset="0.7333" stop-color="#da6500"/><stop offset="0.7500" stop-color="#dd6c00"/><stop offset="0.7667" stop-color="#df7300"/><stop offset="0.7833" stop-color="#e27b00"/><stop offset="0.8000" stop-color="#e48300"/><stop offset="0.8167" stop-color="#e68b00"/><stop offset="0.8333" stop-color="#e99400"/><stop offset="0.8500" stop-color="#eb9d00"/><stop offset="0.8667" stop-color="#eda600"/><stop offset="0.8833" stop-color="#f0b000"/><stop offset="0.9000" stop-color="#f2ba00"/><stop offset="0.9167" stop-color="#f4c400"/><stop offset="0.9333" stop-color="#f6cf00"/><stop offset="0.9500" stop-color="#f9db00"/><stop offset="0.9667" stop-color="#fbe600"/><stop offset="0.9833" stop-color="#fdf200"/><stop offset="1.0000" stop-color="#ffff00"/></linearGradient></defs>
 <rect x="522.5" y="120.5" width="19" height="344.5" fill="url(#cbg)" stroke="#000" stroke-width="1"/>
 <g stroke="#000" stroke-width="1" shape-rendering="crispEdges">
  <path d="M522 407.5h5M542 407.5h-5"/><path d="M522 350h5M542 350h-5"/><path d="M522 292.5h5M542 292.5h-5"/><path d="M522 235h5M542 235h-5"/><path d="M522 177.5h5M542 177.5h-5"/>
 </g>
</svg>
<div class="abs lbl" style="left:130.8px;top:477px;width:60px;margin-left:-30px;text-align:center">0</div>
<div class="abs lbl" style="left:178.8px;top:477px;width:60px;margin-left:-30px;text-align:center">20</div>
<div class="abs lbl" style="left:226.8px;top:477px;width:60px;margin-left:-30px;text-align:center">40</div>
<div class="abs lbl" style="left:274.8px;top:477px;width:60px;margin-left:-30px;text-align:center">60</div>
<div class="abs lbl" style="left:322.8px;top:477px;width:60px;margin-left:-30px;text-align:center">80</div>
<div class="abs lbl" style="left:370.8px;top:477px;width:60px;margin-left:-30px;text-align:center">100</div>
<div class="abs lbl" style="left:418.8px;top:477px;width:60px;margin-left:-30px;text-align:center">120</div>
<div class="abs lbl" style="left:466.8px;top:477px;width:60px;margin-left:-30px;text-align:center">140</div>
<div class="abs lbl" style="left:514.8px;top:477px;width:60px;margin-left:-30px;text-align:center">160</div>
<div class="abs lbl" style="left:58px;top:458px;width:61px;text-align:right">0</div>
<div class="abs lbl" style="left:58px;top:389px;width:61px;text-align:right">20</div>
<div class="abs lbl" style="left:58px;top:320px;width:61px;text-align:right">40</div>
<div class="abs lbl" style="left:58px;top:251px;width:61px;text-align:right">60</div>
<div class="abs lbl" style="left:58px;top:182px;width:61px;text-align:right">80</div>
<div class="abs lbl" style="left:58px;top:113px;width:61px;text-align:right">100</div>
<div class="abs lbl" style="left:553px;top:458.5px">0</div>
<div class="abs lbl" style="left:553px;top:401px">10</div>
<div class="abs lbl" style="left:553px;top:343.5px">20</div>
<div class="abs lbl" style="left:553px;top:286px">30</div>
<div class="abs lbl" style="left:553px;top:228.5px">40</div>
<div class="abs lbl" style="left:553px;top:171px">50</div>
<div class="abs lbl" style="left:553px;top:113.5px">60</div>
<div class="abs lbl" style="left:270px;top:498px;letter-spacing:0.3px">Time in seconds</div>
<div class="abs lbl" style="left:81.5px;top:293px;width:0;height:0"><div style="position:absolute;left:-40px;top:-7.5px;width:80px;text-align:center;transform:rotate(-90deg)">Frequency</div></div>
<div id="status" class="abs"></div>
<div id="stext" class="abs">205.678,  34.0487</div>
<div class="abs" style="left:0;top:561px;width:642px;height:1px;background:#f6f4f1"></div>
<svg class="abs" style="left:0;top:0" width="642" height="567">
 <g fill="#a9a59f">
  <rect x="639" y="551" width="1.2" height="1.2"/>
  <rect x="636" y="554" width="1.2" height="1.2"/><rect x="639" y="554" width="1.2" height="1.2"/>
  <rect x="633" y="557" width="1.2" height="1.2"/><rect x="636" y="557" width="1.2" height="1.2"/><rect x="639" y="557" width="1.2" height="1.2"/>
  <rect x="630" y="560" width="1.2" height="1.2"/><rect x="633" y="560" width="1.2" height="1.2"/><rect x="636" y="560" width="1.2" height="1.2"/><rect x="639" y="560" width="1.2" height="1.2"/>
 </g>
 <rect x="0" y="563" width="642" height="4" fill="#000"/>
 <rect x="0" y="564" width="20" height="3" fill="#3d3d3d"/>
 <rect x="622" y="564" width="20" height="3" fill="#3d3d3d"/>
</svg>
</body></html>
